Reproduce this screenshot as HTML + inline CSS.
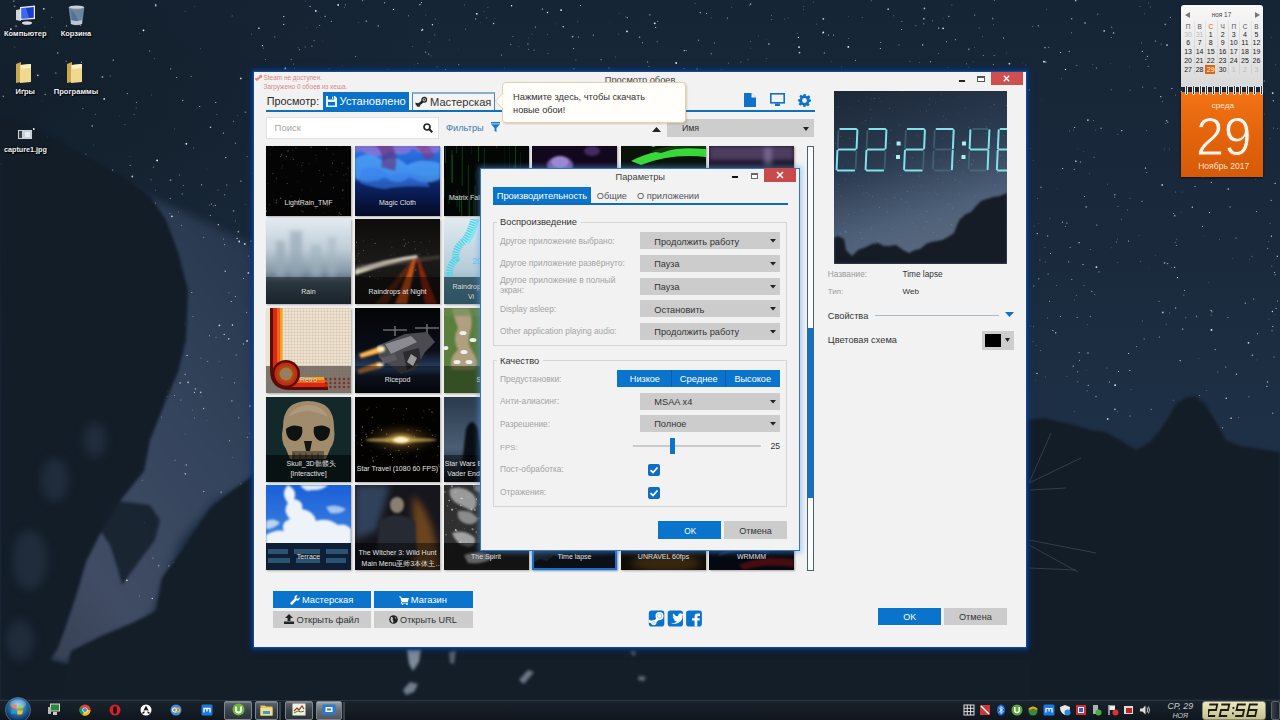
<!DOCTYPE html>
<html><head><meta charset="utf-8">
<style>
*{margin:0;padding:0;box-sizing:border-box}
html,body{width:1280px;height:720px;overflow:hidden}
body{position:relative;background:#18232f;font-family:"Liberation Sans",sans-serif;}
.a{position:absolute}
.t{position:absolute;white-space:nowrap;line-height:1}
.th{position:absolute;overflow:hidden}
.sh{text-shadow:0 0 2px #000,1px 1px 1px #000}
</style></head><body>

<svg class="a" style="left:0;top:0" width="1280" height="720" viewBox="0 0 1280 720">
<defs>
<linearGradient id="sky" x1="0" y1="0" x2="0" y2="1"><stop offset="0" stop-color="#162536"/><stop offset="0.35" stop-color="#1a2a3c"/><stop offset="0.6" stop-color="#1e3046"/><stop offset="1" stop-color="#1e2e42"/></linearGradient>
<linearGradient id="band" x1="0.8" y1="0" x2="0.2" y2="1"><stop offset="0" stop-color="#26364c"/><stop offset="0.45" stop-color="#34445c"/><stop offset="0.85" stop-color="#404c64"/><stop offset="1" stop-color="#3a4458"/></linearGradient>
<filter id="tb" color-interpolation-filters="sRGB" x="-10%" y="-10%" width="120%" height="120%"><feGaussianBlur stdDeviation="4"/></filter>
<filter id="tb2" color-interpolation-filters="sRGB" x="-10%" y="-10%" width="120%" height="120%"><feGaussianBlur stdDeviation="1.5"/></filter>
</defs>
<rect width="1280" height="720" fill="url(#sky)"/>
<defs><radialGradient id="tl" cx="0" cy="0.15" r="0.35"><stop offset="0" stop-color="#0e1820" stop-opacity="0.55"/><stop offset="1" stop-color="#0e1820" stop-opacity="0"/></radialGradient></defs><rect width="1280" height="720" fill="url(#tl)"/>
<path d="M90 170 L200 220 L262 250 L262 480 L215 500 L180 540 L165 580 L150 620 L125 650 L60 662 L40 650 L60 600 L90 520 L130 420 L160 300Z" fill="url(#band)" filter="url(#tb)"/>
<circle cx="414.5" cy="64.9" r="0.4" fill="#fff" fill-opacity="0.40"/><circle cx="685.9" cy="157.2" r="0.4" fill="#fff" fill-opacity="0.94"/><circle cx="274.8" cy="37.0" r="0.7" fill="#fff" fill-opacity="0.40"/><circle cx="116.1" cy="182.5" r="0.9" fill="#fff" fill-opacity="0.43"/><circle cx="285.7" cy="269.8" r="0.4" fill="#fff" fill-opacity="0.73"/><circle cx="507.8" cy="419.8" r="0.4" fill="#fff" fill-opacity="0.71"/><circle cx="170.5" cy="180.2" r="0.9" fill="#fff" fill-opacity="0.43"/><circle cx="394.9" cy="350.9" r="0.5" fill="#fff" fill-opacity="0.42"/><circle cx="731.1" cy="80.8" r="0.4" fill="#fff" fill-opacity="0.71"/><circle cx="80.4" cy="25.6" r="0.5" fill="#fff" fill-opacity="0.67"/><circle cx="680.6" cy="334.2" r="0.7" fill="#fff" fill-opacity="0.73"/><circle cx="580.1" cy="128.9" r="0.5" fill="#fff" fill-opacity="0.80"/><circle cx="312.4" cy="247.0" r="0.9" fill="#fff" fill-opacity="0.67"/><circle cx="439.6" cy="193.0" r="0.9" fill="#fff" fill-opacity="0.99"/><circle cx="151.1" cy="179.8" r="0.6" fill="#fff" fill-opacity="0.45"/><circle cx="625.9" cy="16.9" r="0.4" fill="#fff" fill-opacity="0.85"/><circle cx="733.5" cy="376.5" r="0.6" fill="#fff" fill-opacity="0.57"/><circle cx="448.2" cy="213.6" r="0.7" fill="#fff" fill-opacity="0.39"/><circle cx="119.8" cy="116.1" r="0.4" fill="#fff" fill-opacity="0.39"/><circle cx="897.9" cy="278.3" r="0.7" fill="#fff" fill-opacity="0.53"/><circle cx="493.8" cy="287.5" r="0.4" fill="#fff" fill-opacity="0.96"/><circle cx="455.0" cy="262.7" r="0.7" fill="#fff" fill-opacity="0.39"/><circle cx="983.3" cy="55.6" r="0.5" fill="#fff" fill-opacity="0.61"/><circle cx="1173.5" cy="213.5" r="0.5" fill="#fff" fill-opacity="0.64"/><circle cx="703.3" cy="379.9" r="0.7" fill="#fff" fill-opacity="0.91"/><circle cx="356.4" cy="178.6" r="0.6" fill="#fff" fill-opacity="0.79"/><circle cx="487.0" cy="99.2" r="0.4" fill="#fff" fill-opacity="0.46"/><circle cx="296.9" cy="100.3" r="0.7" fill="#fff" fill-opacity="0.89"/><circle cx="233.4" cy="121.2" r="0.5" fill="#fff" fill-opacity="0.62"/><circle cx="472.6" cy="243.5" r="0.5" fill="#fff" fill-opacity="0.80"/><circle cx="659.8" cy="265.6" r="0.4" fill="#fff" fill-opacity="0.65"/><circle cx="1114.9" cy="409.3" r="0.9" fill="#fff" fill-opacity="0.61"/><circle cx="510.7" cy="44.5" r="0.7" fill="#fff" fill-opacity="0.39"/><circle cx="86.2" cy="89.8" r="0.5" fill="#fff" fill-opacity="0.42"/><circle cx="768.9" cy="44.0" r="0.9" fill="#fff" fill-opacity="0.45"/><circle cx="129.9" cy="156.4" r="0.4" fill="#fff" fill-opacity="0.40"/><circle cx="266.2" cy="161.8" r="0.6" fill="#fff" fill-opacity="0.97"/><circle cx="770.9" cy="203.9" r="0.4" fill="#fff" fill-opacity="0.90"/><circle cx="1271.2" cy="200.4" r="0.7" fill="#fff" fill-opacity="0.55"/><circle cx="184.5" cy="322.4" r="0.6" fill="#fff" fill-opacity="0.66"/><circle cx="885.8" cy="222.0" r="0.5" fill="#fff" fill-opacity="0.97"/><circle cx="676.2" cy="63.0" r="0.9" fill="#fff" fill-opacity="0.94"/><circle cx="970.4" cy="128.2" r="0.4" fill="#fff" fill-opacity="0.80"/><circle cx="334.2" cy="157.7" r="0.5" fill="#fff" fill-opacity="0.58"/><circle cx="285.2" cy="232.9" r="0.9" fill="#fff" fill-opacity="0.56"/><circle cx="285.5" cy="348.9" r="0.5" fill="#fff" fill-opacity="0.87"/><circle cx="1047.5" cy="318.1" r="0.5" fill="#fff" fill-opacity="0.48"/><circle cx="630.8" cy="314.3" r="0.4" fill="#fff" fill-opacity="0.86"/><circle cx="604.5" cy="83.3" r="0.9" fill="#fff" fill-opacity="0.97"/><circle cx="572.5" cy="402.9" r="0.6" fill="#fff" fill-opacity="0.97"/><circle cx="466.7" cy="94.8" r="0.5" fill="#fff" fill-opacity="0.66"/><circle cx="432.3" cy="207.5" r="0.9" fill="#fff" fill-opacity="0.90"/><circle cx="613.7" cy="280.8" r="0.4" fill="#fff" fill-opacity="0.89"/><circle cx="153.5" cy="167.1" r="0.5" fill="#fff" fill-opacity="0.66"/><circle cx="228.5" cy="339.3" r="0.6" fill="#fff" fill-opacity="0.41"/><circle cx="1211.1" cy="310.4" r="0.7" fill="#fff" fill-opacity="0.61"/><circle cx="1211.9" cy="311.7" r="0.5" fill="#fff" fill-opacity="1.00"/><circle cx="35.3" cy="254.0" r="0.7" fill="#fff" fill-opacity="0.87"/><circle cx="187.1" cy="355.4" r="0.7" fill="#fff" fill-opacity="0.78"/><circle cx="448.5" cy="235.9" r="0.5" fill="#fff" fill-opacity="0.36"/><circle cx="1023.2" cy="312.3" r="0.4" fill="#fff" fill-opacity="0.69"/><circle cx="1195.0" cy="186.5" r="0.5" fill="#fff" fill-opacity="0.89"/><circle cx="270.1" cy="108.3" r="0.6" fill="#fff" fill-opacity="0.68"/><circle cx="977.5" cy="140.2" r="0.9" fill="#fff" fill-opacity="0.62"/><circle cx="167.8" cy="391.3" r="0.6" fill="#fff" fill-opacity="0.93"/><circle cx="848.0" cy="350.5" r="0.9" fill="#fff" fill-opacity="0.62"/><circle cx="1174.7" cy="215.7" r="0.9" fill="#fff" fill-opacity="0.45"/><circle cx="653.5" cy="375.3" r="0.5" fill="#fff" fill-opacity="0.75"/><circle cx="993.3" cy="64.4" r="0.5" fill="#fff" fill-opacity="0.66"/><circle cx="928.2" cy="239.3" r="0.6" fill="#fff" fill-opacity="0.79"/><circle cx="679.3" cy="207.5" r="0.4" fill="#fff" fill-opacity="0.92"/><circle cx="72.7" cy="82.3" r="0.4" fill="#fff" fill-opacity="0.85"/><circle cx="649.9" cy="241.5" r="0.4" fill="#fff" fill-opacity="0.64"/><circle cx="784.0" cy="217.4" r="0.9" fill="#fff" fill-opacity="0.48"/><circle cx="354.8" cy="218.5" r="0.7" fill="#fff" fill-opacity="0.68"/><circle cx="317.0" cy="225.0" r="0.6" fill="#fff" fill-opacity="0.95"/><circle cx="1142.7" cy="87.1" r="0.7" fill="#fff" fill-opacity="0.44"/><circle cx="155.7" cy="190.1" r="0.4" fill="#fff" fill-opacity="0.79"/><circle cx="548.3" cy="91.5" r="0.6" fill="#fff" fill-opacity="0.86"/><circle cx="1148.2" cy="66.4" r="0.6" fill="#fff" fill-opacity="0.44"/><circle cx="1130.0" cy="416.0" r="0.5" fill="#fff" fill-opacity="0.84"/><circle cx="120.5" cy="380.5" r="0.5" fill="#fff" fill-opacity="0.99"/><circle cx="1065.5" cy="69.4" r="0.7" fill="#fff" fill-opacity="1.00"/><circle cx="516.9" cy="181.1" r="0.6" fill="#fff" fill-opacity="0.56"/><circle cx="924.4" cy="8.4" r="0.9" fill="#fff" fill-opacity="0.65"/><circle cx="900.0" cy="165.3" r="0.9" fill="#fff" fill-opacity="0.76"/><circle cx="655.7" cy="27.6" r="0.5" fill="#fff" fill-opacity="0.98"/><circle cx="134.1" cy="114.2" r="0.4" fill="#fff" fill-opacity="0.94"/><circle cx="232.4" cy="325.0" r="0.7" fill="#fff" fill-opacity="0.90"/><circle cx="865.2" cy="406.8" r="0.7" fill="#fff" fill-opacity="0.45"/><circle cx="1176.5" cy="245.4" r="0.6" fill="#fff" fill-opacity="0.41"/><circle cx="73.6" cy="295.9" r="0.7" fill="#fff" fill-opacity="0.93"/><circle cx="344.2" cy="7.2" r="0.4" fill="#fff" fill-opacity="0.87"/><circle cx="107.2" cy="368.2" r="0.4" fill="#fff" fill-opacity="0.52"/><circle cx="155.7" cy="5.0" r="0.9" fill="#fff" fill-opacity="0.62"/><circle cx="1171.7" cy="267.3" r="0.4" fill="#fff" fill-opacity="0.69"/><circle cx="305.2" cy="47.1" r="0.5" fill="#fff" fill-opacity="0.52"/><circle cx="231.9" cy="400.9" r="0.6" fill="#fff" fill-opacity="0.70"/><circle cx="263.5" cy="191.6" r="0.5" fill="#fff" fill-opacity="0.53"/><circle cx="1028.7" cy="427.6" r="0.4" fill="#fff" fill-opacity="0.36"/><circle cx="938.3" cy="237.0" r="0.5" fill="#fff" fill-opacity="0.68"/><circle cx="314.5" cy="192.2" r="0.7" fill="#fff" fill-opacity="0.78"/><circle cx="698.8" cy="382.2" r="0.9" fill="#fff" fill-opacity="0.55"/><circle cx="275.4" cy="98.7" r="0.5" fill="#fff" fill-opacity="0.89"/><circle cx="904.6" cy="273.5" r="0.7" fill="#fff" fill-opacity="0.99"/><circle cx="1256.8" cy="359.9" r="0.4" fill="#fff" fill-opacity="0.40"/><circle cx="948.3" cy="109.9" r="0.5" fill="#fff" fill-opacity="0.39"/><circle cx="851.5" cy="163.8" r="0.9" fill="#fff" fill-opacity="0.79"/><circle cx="360.9" cy="104.2" r="0.6" fill="#fff" fill-opacity="0.38"/><circle cx="237.3" cy="115.7" r="0.4" fill="#fff" fill-opacity="0.52"/><circle cx="1231.1" cy="418.2" r="0.9" fill="#fff" fill-opacity="0.56"/><circle cx="44.1" cy="379.4" r="0.5" fill="#fff" fill-opacity="0.58"/><circle cx="1.4" cy="164.1" r="0.7" fill="#fff" fill-opacity="0.53"/><circle cx="839.7" cy="106.7" r="0.4" fill="#fff" fill-opacity="0.41"/><circle cx="1045.8" cy="61.9" r="0.9" fill="#fff" fill-opacity="0.38"/><circle cx="28.8" cy="130.8" r="0.5" fill="#fff" fill-opacity="0.40"/><circle cx="1225.8" cy="366.9" r="0.5" fill="#fff" fill-opacity="0.78"/><circle cx="916.5" cy="378.0" r="0.7" fill="#fff" fill-opacity="0.85"/><circle cx="922.5" cy="212.5" r="0.6" fill="#fff" fill-opacity="0.82"/><circle cx="823.3" cy="18.8" r="0.9" fill="#fff" fill-opacity="0.76"/><circle cx="939.3" cy="349.3" r="0.5" fill="#fff" fill-opacity="0.94"/><circle cx="963.7" cy="244.4" r="0.4" fill="#fff" fill-opacity="0.89"/><circle cx="747.6" cy="383.9" r="0.5" fill="#fff" fill-opacity="0.41"/><circle cx="53.6" cy="274.0" r="0.4" fill="#fff" fill-opacity="0.59"/><circle cx="577.8" cy="21.8" r="0.4" fill="#fff" fill-opacity="0.76"/><circle cx="871.3" cy="210.4" r="0.4" fill="#fff" fill-opacity="0.65"/><circle cx="89.7" cy="401.0" r="0.9" fill="#fff" fill-opacity="0.41"/><circle cx="673.3" cy="320.7" r="0.7" fill="#fff" fill-opacity="0.51"/><circle cx="95.3" cy="114.2" r="0.5" fill="#fff" fill-opacity="0.50"/><circle cx="831.9" cy="197.9" r="0.7" fill="#fff" fill-opacity="0.40"/><circle cx="1165.4" cy="123.5" r="0.4" fill="#fff" fill-opacity="0.75"/><circle cx="822.7" cy="33.3" r="0.5" fill="#fff" fill-opacity="0.57"/><circle cx="834.0" cy="297.9" r="0.9" fill="#fff" fill-opacity="0.72"/><circle cx="16.0" cy="26.1" r="0.6" fill="#fff" fill-opacity="0.98"/><circle cx="127.4" cy="93.6" r="0.7" fill="#fff" fill-opacity="0.54"/><circle cx="661.2" cy="199.8" r="0.7" fill="#fff" fill-opacity="0.85"/><circle cx="1271.4" cy="236.1" r="0.6" fill="#fff" fill-opacity="0.99"/><circle cx="1198.4" cy="7.5" r="0.7" fill="#fff" fill-opacity="0.40"/><circle cx="648.5" cy="427.7" r="0.6" fill="#fff" fill-opacity="0.60"/><circle cx="1173.2" cy="400.1" r="0.4" fill="#fff" fill-opacity="0.73"/><circle cx="181.4" cy="225.3" r="0.6" fill="#fff" fill-opacity="0.44"/><circle cx="1049.9" cy="218.8" r="0.4" fill="#fff" fill-opacity="0.81"/><circle cx="296.2" cy="386.0" r="0.7" fill="#fff" fill-opacity="0.61"/><circle cx="203.6" cy="408.5" r="0.7" fill="#fff" fill-opacity="0.61"/><circle cx="930.8" cy="179.0" r="0.7" fill="#fff" fill-opacity="0.56"/><circle cx="1075.5" cy="0.7" r="0.6" fill="#fff" fill-opacity="0.90"/><circle cx="153.7" cy="398.4" r="0.4" fill="#fff" fill-opacity="0.94"/><circle cx="371.0" cy="160.1" r="0.7" fill="#fff" fill-opacity="0.60"/><circle cx="1113.6" cy="32.9" r="0.7" fill="#fff" fill-opacity="0.84"/><circle cx="1093.4" cy="120.7" r="0.4" fill="#fff" fill-opacity="0.89"/><circle cx="365.6" cy="402.3" r="0.5" fill="#fff" fill-opacity="0.98"/><circle cx="558.4" cy="135.7" r="0.6" fill="#fff" fill-opacity="0.86"/><circle cx="547.5" cy="12.5" r="0.7" fill="#fff" fill-opacity="0.94"/><circle cx="1204.1" cy="236.2" r="0.4" fill="#fff" fill-opacity="0.38"/><circle cx="937.4" cy="193.9" r="0.5" fill="#fff" fill-opacity="0.77"/><circle cx="366.3" cy="21.1" r="0.9" fill="#fff" fill-opacity="0.43"/><circle cx="604.4" cy="147.8" r="0.6" fill="#fff" fill-opacity="0.52"/><circle cx="945.6" cy="280.7" r="0.7" fill="#fff" fill-opacity="0.78"/><circle cx="385.1" cy="239.6" r="0.7" fill="#fff" fill-opacity="0.43"/><circle cx="823.3" cy="32.3" r="0.9" fill="#fff" fill-opacity="0.94"/><circle cx="636.3" cy="94.6" r="0.6" fill="#fff" fill-opacity="1.00"/><circle cx="575.9" cy="60.0" r="0.5" fill="#fff" fill-opacity="0.51"/><circle cx="223.6" cy="239.0" r="0.6" fill="#fff" fill-opacity="0.51"/><circle cx="330.7" cy="244.9" r="0.4" fill="#fff" fill-opacity="0.84"/><circle cx="528.4" cy="178.0" r="0.9" fill="#fff" fill-opacity="0.49"/><circle cx="345.9" cy="323.4" r="0.7" fill="#fff" fill-opacity="0.53"/><circle cx="1238.6" cy="54.1" r="0.9" fill="#fff" fill-opacity="0.69"/><circle cx="1011.6" cy="364.9" r="0.4" fill="#fff" fill-opacity="0.53"/><circle cx="318.0" cy="171.9" r="0.7" fill="#fff" fill-opacity="0.63"/><circle cx="399.4" cy="350.2" r="0.4" fill="#fff" fill-opacity="0.43"/><circle cx="544.3" cy="328.4" r="0.7" fill="#fff" fill-opacity="0.98"/><circle cx="627.0" cy="31.4" r="0.9" fill="#fff" fill-opacity="0.91"/><circle cx="1244.5" cy="106.8" r="0.4" fill="#fff" fill-opacity="0.50"/><circle cx="194.6" cy="417.9" r="0.4" fill="#fff" fill-opacity="0.96"/><circle cx="923.8" cy="278.4" r="0.7" fill="#fff" fill-opacity="0.41"/><circle cx="994.4" cy="0.6" r="0.5" fill="#fff" fill-opacity="0.50"/><circle cx="1177.5" cy="277.6" r="0.6" fill="#fff" fill-opacity="0.98"/><circle cx="801.9" cy="227.1" r="0.7" fill="#fff" fill-opacity="0.80"/><circle cx="143.5" cy="30.3" r="0.9" fill="#fff" fill-opacity="0.96"/><circle cx="245.4" cy="112.2" r="0.9" fill="#fff" fill-opacity="0.35"/><circle cx="688.0" cy="428.4" r="0.6" fill="#fff" fill-opacity="0.97"/><circle cx="825.1" cy="380.0" r="0.7" fill="#fff" fill-opacity="0.69"/><circle cx="700.2" cy="12.6" r="0.7" fill="#fff" fill-opacity="0.81"/><circle cx="393.5" cy="9.4" r="0.7" fill="#fff" fill-opacity="0.93"/><circle cx="828.4" cy="34.9" r="0.5" fill="#fff" fill-opacity="0.78"/><circle cx="1184.2" cy="97.5" r="0.4" fill="#fff" fill-opacity="0.80"/><circle cx="919.5" cy="155.8" r="0.7" fill="#fff" fill-opacity="0.48"/><circle cx="1020.2" cy="317.8" r="0.9" fill="#fff" fill-opacity="0.39"/><circle cx="634.5" cy="86.2" r="0.5" fill="#fff" fill-opacity="0.50"/><circle cx="283.4" cy="327.0" r="0.6" fill="#fff" fill-opacity="0.42"/><circle cx="798.2" cy="262.3" r="0.5" fill="#fff" fill-opacity="0.67"/><circle cx="1165.3" cy="24.3" r="0.9" fill="#fff" fill-opacity="0.45"/><circle cx="503.6" cy="91.6" r="0.9" fill="#fff" fill-opacity="0.44"/><circle cx="66.4" cy="25.9" r="0.7" fill="#fff" fill-opacity="0.64"/><circle cx="911.4" cy="135.1" r="0.4" fill="#fff" fill-opacity="1.00"/><circle cx="1192.4" cy="141.6" r="0.5" fill="#fff" fill-opacity="0.77"/><circle cx="671.7" cy="201.1" r="0.6" fill="#fff" fill-opacity="0.78"/><circle cx="484.6" cy="160.8" r="0.6" fill="#fff" fill-opacity="0.64"/><circle cx="139.5" cy="33.6" r="0.4" fill="#fff" fill-opacity="0.58"/><circle cx="1223.1" cy="53.2" r="0.5" fill="#fff" fill-opacity="0.60"/><circle cx="984.0" cy="132.7" r="0.7" fill="#fff" fill-opacity="0.41"/><circle cx="902.7" cy="84.2" r="0.9" fill="#fff" fill-opacity="0.95"/><circle cx="247.1" cy="156.6" r="0.7" fill="#fff" fill-opacity="0.37"/><circle cx="525.8" cy="349.1" r="0.7" fill="#fff" fill-opacity="0.38"/><circle cx="44.6" cy="26.9" r="0.4" fill="#fff" fill-opacity="0.52"/><circle cx="956.5" cy="386.4" r="0.6" fill="#fff" fill-opacity="0.59"/><circle cx="428.8" cy="410.1" r="0.4" fill="#fff" fill-opacity="0.52"/><circle cx="917.3" cy="136.1" r="0.6" fill="#fff" fill-opacity="0.54"/><circle cx="923.6" cy="256.1" r="0.4" fill="#fff" fill-opacity="0.37"/><circle cx="299.3" cy="204.3" r="0.7" fill="#fff" fill-opacity="0.97"/><circle cx="494.7" cy="108.0" r="0.7" fill="#fff" fill-opacity="0.88"/><circle cx="169.9" cy="213.5" r="0.4" fill="#fff" fill-opacity="0.87"/><circle cx="945.3" cy="353.8" r="0.5" fill="#fff" fill-opacity="0.74"/><circle cx="419.6" cy="137.4" r="0.6" fill="#fff" fill-opacity="0.86"/><circle cx="762.5" cy="220.1" r="0.7" fill="#fff" fill-opacity="0.84"/><circle cx="316.6" cy="27.8" r="0.4" fill="#fff" fill-opacity="0.66"/><circle cx="697.1" cy="69.1" r="0.7" fill="#fff" fill-opacity="0.92"/><circle cx="1264.4" cy="113.9" r="0.4" fill="#fff" fill-opacity="0.49"/><circle cx="539.0" cy="425.0" r="0.7" fill="#fff" fill-opacity="0.46"/><circle cx="170.2" cy="198.2" r="0.5" fill="#fff" fill-opacity="0.84"/><circle cx="1084.1" cy="285.7" r="0.4" fill="#fff" fill-opacity="0.86"/><circle cx="376.2" cy="120.1" r="0.6" fill="#fff" fill-opacity="0.59"/><circle cx="944.7" cy="85.7" r="0.5" fill="#fff" fill-opacity="0.47"/><circle cx="301.4" cy="121.0" r="0.9" fill="#fff" fill-opacity="0.47"/><circle cx="82.9" cy="108.2" r="0.5" fill="#fff" fill-opacity="0.68"/><circle cx="296.2" cy="347.6" r="0.7" fill="#fff" fill-opacity="0.99"/><circle cx="131.0" cy="204.1" r="0.5" fill="#fff" fill-opacity="0.90"/><circle cx="1170.4" cy="17.4" r="0.6" fill="#fff" fill-opacity="0.50"/><circle cx="64.5" cy="258.2" r="0.9" fill="#fff" fill-opacity="0.48"/><circle cx="96.1" cy="220.4" r="0.5" fill="#fff" fill-opacity="0.64"/><circle cx="332.7" cy="334.4" r="0.4" fill="#fff" fill-opacity="0.42"/><circle cx="763.1" cy="266.6" r="0.5" fill="#fff" fill-opacity="0.37"/><circle cx="435.2" cy="19.0" r="0.6" fill="#fff" fill-opacity="0.37"/><circle cx="937.3" cy="393.0" r="0.4" fill="#fff" fill-opacity="0.88"/><circle cx="523.5" cy="159.9" r="0.9" fill="#fff" fill-opacity="0.55"/><circle cx="260.4" cy="342.0" r="0.9" fill="#fff" fill-opacity="0.66"/><circle cx="522.5" cy="342.2" r="0.9" fill="#fff" fill-opacity="0.45"/><circle cx="683.5" cy="280.8" r="0.7" fill="#fff" fill-opacity="0.80"/><circle cx="524.5" cy="121.8" r="0.6" fill="#fff" fill-opacity="0.62"/><circle cx="65.7" cy="320.5" r="0.6" fill="#fff" fill-opacity="0.62"/><circle cx="23.3" cy="329.7" r="0.6" fill="#fff" fill-opacity="0.77"/><circle cx="500.1" cy="174.1" r="0.4" fill="#fff" fill-opacity="0.63"/><circle cx="200.4" cy="48.8" r="0.4" fill="#fff" fill-opacity="0.61"/><circle cx="1130.0" cy="198.2" r="0.5" fill="#fff" fill-opacity="0.43"/><circle cx="66.2" cy="61.3" r="0.7" fill="#fff" fill-opacity="0.41"/><circle cx="796.4" cy="159.5" r="0.9" fill="#fff" fill-opacity="0.46"/><circle cx="445.4" cy="69.6" r="0.5" fill="#fff" fill-opacity="0.95"/><circle cx="139.3" cy="210.9" r="0.5" fill="#fff" fill-opacity="0.55"/><circle cx="1071.7" cy="18.7" r="0.7" fill="#fff" fill-opacity="0.55"/><circle cx="777.8" cy="273.6" r="0.4" fill="#fff" fill-opacity="0.94"/><circle cx="794.0" cy="354.6" r="0.5" fill="#fff" fill-opacity="0.77"/><circle cx="1096.4" cy="267.1" r="0.9" fill="#fff" fill-opacity="0.90"/><circle cx="1061.4" cy="78.7" r="0.5" fill="#fff" fill-opacity="0.38"/><circle cx="1201.3" cy="67.3" r="0.6" fill="#fff" fill-opacity="0.43"/><circle cx="316.2" cy="311.7" r="0.5" fill="#fff" fill-opacity="0.38"/><circle cx="719.8" cy="325.7" r="0.4" fill="#fff" fill-opacity="0.78"/><circle cx="415.0" cy="167.6" r="0.7" fill="#fff" fill-opacity="0.71"/><circle cx="802.6" cy="131.7" r="0.7" fill="#fff" fill-opacity="0.55"/><circle cx="319.1" cy="167.4" r="0.6" fill="#fff" fill-opacity="0.64"/><circle cx="561.1" cy="10.1" r="0.9" fill="#fff" fill-opacity="0.99"/><circle cx="595.5" cy="192.1" r="0.9" fill="#fff" fill-opacity="0.86"/><circle cx="586.6" cy="77.2" r="0.7" fill="#fff" fill-opacity="0.61"/><circle cx="85.9" cy="154.2" r="0.6" fill="#fff" fill-opacity="0.41"/><circle cx="565.7" cy="219.4" r="0.4" fill="#fff" fill-opacity="0.38"/><circle cx="166.7" cy="396.5" r="0.6" fill="#fff" fill-opacity="0.86"/><circle cx="654.7" cy="23.3" r="0.9" fill="#fff" fill-opacity="0.93"/><circle cx="835.5" cy="337.2" r="0.4" fill="#fff" fill-opacity="0.91"/><circle cx="1275.0" cy="314.8" r="0.4" fill="#fff" fill-opacity="0.48"/><circle cx="1256.6" cy="211.5" r="0.5" fill="#fff" fill-opacity="0.80"/><circle cx="923.0" cy="95.1" r="0.6" fill="#fff" fill-opacity="0.75"/><circle cx="322.8" cy="139.3" r="0.9" fill="#fff" fill-opacity="0.53"/><circle cx="1044.0" cy="61.7" r="0.9" fill="#fff" fill-opacity="0.98"/><circle cx="614.5" cy="254.5" r="0.9" fill="#fff" fill-opacity="0.68"/><circle cx="408.4" cy="15.8" r="0.5" fill="#fff" fill-opacity="0.61"/><circle cx="814.8" cy="119.6" r="0.6" fill="#fff" fill-opacity="0.93"/><circle cx="216.0" cy="337.5" r="0.4" fill="#fff" fill-opacity="0.85"/><circle cx="62.2" cy="369.1" r="0.7" fill="#fff" fill-opacity="0.71"/><circle cx="742.5" cy="379.5" r="0.4" fill="#fff" fill-opacity="0.51"/><circle cx="685.7" cy="368.3" r="0.6" fill="#fff" fill-opacity="0.52"/><circle cx="1267.8" cy="248.3" r="0.6" fill="#fff" fill-opacity="0.57"/><circle cx="104.2" cy="98.9" r="0.9" fill="#fff" fill-opacity="0.83"/><circle cx="61.8" cy="352.5" r="0.6" fill="#fff" fill-opacity="0.55"/><circle cx="1236.4" cy="374.2" r="0.6" fill="#fff" fill-opacity="0.83"/><circle cx="956.3" cy="95.3" r="0.6" fill="#fff" fill-opacity="0.75"/><circle cx="553.3" cy="220.5" r="0.4" fill="#fff" fill-opacity="0.44"/><circle cx="290.9" cy="280.8" r="0.4" fill="#fff" fill-opacity="0.39"/><circle cx="725.9" cy="130.6" r="0.9" fill="#fff" fill-opacity="0.58"/><circle cx="287.1" cy="250.9" r="0.9" fill="#fff" fill-opacity="0.44"/><circle cx="468.8" cy="356.2" r="0.5" fill="#fff" fill-opacity="0.44"/><circle cx="1198.8" cy="104.7" r="0.5" fill="#fff" fill-opacity="0.64"/><circle cx="81.5" cy="62.2" r="0.6" fill="#fff" fill-opacity="0.61"/><circle cx="338.2" cy="4.9" r="0.9" fill="#fff" fill-opacity="0.93"/><circle cx="761.2" cy="248.7" r="0.9" fill="#fff" fill-opacity="0.96"/><circle cx="938.9" cy="106.9" r="0.4" fill="#fff" fill-opacity="0.38"/><circle cx="680.4" cy="174.6" r="0.5" fill="#fff" fill-opacity="0.45"/><circle cx="1167.0" cy="45.1" r="0.9" fill="#fff" fill-opacity="0.71"/><circle cx="1204.4" cy="61.2" r="0.5" fill="#fff" fill-opacity="0.69"/><circle cx="822.6" cy="278.5" r="0.7" fill="#fff" fill-opacity="0.88"/><circle cx="223.5" cy="133.0" r="0.6" fill="#fff" fill-opacity="0.76"/><circle cx="1272.4" cy="311.5" r="0.7" fill="#fff" fill-opacity="0.82"/><circle cx="8.1" cy="363.1" r="0.7" fill="#fff" fill-opacity="0.40"/><circle cx="839.1" cy="75.4" r="0.4" fill="#fff" fill-opacity="0.52"/><circle cx="824.3" cy="53.0" r="0.6" fill="#fff" fill-opacity="0.81"/><circle cx="340.5" cy="238.1" r="0.7" fill="#fff" fill-opacity="0.80"/><circle cx="1174.1" cy="417.9" r="0.6" fill="#fff" fill-opacity="0.77"/><circle cx="1235.4" cy="93.3" r="0.9" fill="#fff" fill-opacity="0.36"/><circle cx="333.3" cy="101.5" r="0.5" fill="#fff" fill-opacity="0.96"/><circle cx="955.1" cy="140.6" r="0.7" fill="#fff" fill-opacity="0.56"/><circle cx="306.1" cy="390.3" r="0.9" fill="#fff" fill-opacity="0.66"/><circle cx="1074.8" cy="300.0" r="0.4" fill="#fff" fill-opacity="0.63"/><circle cx="927.5" cy="245.2" r="0.6" fill="#fff" fill-opacity="0.86"/><circle cx="501.2" cy="251.7" r="0.9" fill="#fff" fill-opacity="0.94"/><circle cx="185.1" cy="11.6" r="0.4" fill="#fff" fill-opacity="0.75"/><circle cx="207.1" cy="420.3" r="0.4" fill="#fff" fill-opacity="0.37"/><circle cx="177.2" cy="276.7" r="0.4" fill="#fff" fill-opacity="0.80"/><circle cx="943.1" cy="28.3" r="0.9" fill="#fff" fill-opacity="0.85"/><circle cx="255.1" cy="410.5" r="0.9" fill="#fff" fill-opacity="0.93"/><circle cx="84.4" cy="373.2" r="0.7" fill="#fff" fill-opacity="0.42"/><circle cx="263.3" cy="48.1" r="0.4" fill="#fff" fill-opacity="0.97"/><circle cx="1166.2" cy="324.1" r="0.4" fill="#fff" fill-opacity="0.89"/><circle cx="808.4" cy="123.6" r="0.4" fill="#fff" fill-opacity="0.44"/><circle cx="1013.7" cy="277.9" r="0.6" fill="#fff" fill-opacity="0.56"/><circle cx="542.4" cy="9.0" r="0.6" fill="#fff" fill-opacity="0.95"/><circle cx="62.0" cy="326.7" r="0.6" fill="#fff" fill-opacity="0.85"/><circle cx="770.6" cy="204.7" r="0.6" fill="#fff" fill-opacity="0.75"/><circle cx="39.7" cy="177.6" r="0.7" fill="#fff" fill-opacity="0.69"/><circle cx="125.8" cy="201.6" r="0.4" fill="#fff" fill-opacity="0.70"/><circle cx="277.2" cy="370.8" r="0.4" fill="#fff" fill-opacity="0.72"/><circle cx="367.5" cy="187.5" r="0.9" fill="#fff" fill-opacity="0.48"/><circle cx="975.6" cy="420.5" r="0.4" fill="#fff" fill-opacity="0.58"/><circle cx="122.5" cy="298.9" r="0.5" fill="#fff" fill-opacity="0.98"/><circle cx="758.5" cy="411.6" r="0.9" fill="#fff" fill-opacity="0.52"/><circle cx="1208.2" cy="122.0" r="0.5" fill="#fff" fill-opacity="0.96"/><circle cx="296.4" cy="71.3" r="0.4" fill="#fff" fill-opacity="0.67"/><circle cx="1268.6" cy="241.3" r="0.4" fill="#fff" fill-opacity="0.76"/><circle cx="455.2" cy="172.5" r="0.7" fill="#fff" fill-opacity="0.93"/><circle cx="953.9" cy="181.5" r="0.4" fill="#fff" fill-opacity="0.59"/><circle cx="388.0" cy="184.1" r="0.9" fill="#fff" fill-opacity="0.68"/><circle cx="485.5" cy="380.1" r="0.5" fill="#fff" fill-opacity="0.96"/><circle cx="162.4" cy="255.5" r="0.9" fill="#fff" fill-opacity="0.77"/><circle cx="446.1" cy="140.5" r="0.5" fill="#fff" fill-opacity="0.91"/><circle cx="576.4" cy="238.1" r="0.6" fill="#fff" fill-opacity="0.46"/><circle cx="561.7" cy="332.6" r="0.9" fill="#fff" fill-opacity="0.50"/><circle cx="427.6" cy="276.4" r="0.5" fill="#fff" fill-opacity="0.68"/><circle cx="342.4" cy="324.5" r="0.9" fill="#fff" fill-opacity="0.45"/><circle cx="199.7" cy="106.5" r="0.6" fill="#fff" fill-opacity="0.74"/><circle cx="446.2" cy="101.6" r="0.5" fill="#fff" fill-opacity="0.52"/><circle cx="1222.4" cy="427.8" r="0.5" fill="#fff" fill-opacity="0.98"/><circle cx="130.1" cy="165.2" r="0.5" fill="#fff" fill-opacity="0.87"/><circle cx="938.6" cy="187.0" r="0.5" fill="#fff" fill-opacity="0.42"/><circle cx="1166.6" cy="120.7" r="0.7" fill="#fff" fill-opacity="0.65"/><circle cx="16.2" cy="367.4" r="0.7" fill="#fff" fill-opacity="0.80"/><circle cx="640.6" cy="271.9" r="0.7" fill="#fff" fill-opacity="0.36"/><circle cx="329.2" cy="317.4" r="0.4" fill="#fff" fill-opacity="0.83"/><circle cx="1162.2" cy="184.9" r="0.9" fill="#fff" fill-opacity="0.73"/><circle cx="828.4" cy="363.8" r="0.9" fill="#fff" fill-opacity="0.90"/><circle cx="869.9" cy="275.9" r="0.7" fill="#fff" fill-opacity="0.63"/><circle cx="332.6" cy="301.3" r="0.7" fill="#fff" fill-opacity="0.51"/><circle cx="512.2" cy="306.4" r="0.5" fill="#fff" fill-opacity="0.51"/><circle cx="542.2" cy="195.7" r="0.9" fill="#fff" fill-opacity="0.91"/><circle cx="663.4" cy="284.3" r="0.5" fill="#fff" fill-opacity="0.93"/><circle cx="419.9" cy="4.6" r="0.7" fill="#fff" fill-opacity="0.94"/><circle cx="136.2" cy="108.0" r="0.5" fill="#fff" fill-opacity="0.45"/><circle cx="1000.7" cy="404.5" r="0.9" fill="#fff" fill-opacity="0.58"/><circle cx="1084.4" cy="196.4" r="0.5" fill="#fff" fill-opacity="0.82"/><circle cx="655.6" cy="274.9" r="0.6" fill="#fff" fill-opacity="0.69"/><circle cx="525.2" cy="407.6" r="0.5" fill="#fff" fill-opacity="0.99"/><circle cx="235.3" cy="220.9" r="0.4" fill="#fff" fill-opacity="0.82"/><circle cx="785.9" cy="274.2" r="0.6" fill="#fff" fill-opacity="0.53"/><circle cx="511.6" cy="5.7" r="0.7" fill="#fff" fill-opacity="0.95"/><circle cx="804.6" cy="290.2" r="0.9" fill="#fff" fill-opacity="0.52"/><circle cx="287.3" cy="318.8" r="0.9" fill="#fff" fill-opacity="0.98"/><circle cx="1272.6" cy="413.2" r="0.7" fill="#fff" fill-opacity="0.49"/><circle cx="165.5" cy="333.9" r="0.5" fill="#fff" fill-opacity="0.65"/><circle cx="719.4" cy="97.2" r="0.5" fill="#fff" fill-opacity="0.58"/><circle cx="817.7" cy="352.1" r="0.7" fill="#fff" fill-opacity="0.65"/><circle cx="376.8" cy="235.8" r="0.5" fill="#fff" fill-opacity="0.86"/><circle cx="600.8" cy="336.9" r="0.5" fill="#fff" fill-opacity="0.52"/><circle cx="481.5" cy="109.0" r="0.7" fill="#fff" fill-opacity="0.79"/><circle cx="616.4" cy="346.3" r="0.6" fill="#fff" fill-opacity="0.58"/><circle cx="837.6" cy="137.7" r="0.7" fill="#fff" fill-opacity="0.63"/><circle cx="815.7" cy="283.5" r="0.6" fill="#fff" fill-opacity="0.45"/><circle cx="388.1" cy="165.6" r="0.4" fill="#fff" fill-opacity="0.89"/><circle cx="1159.4" cy="337.1" r="0.5" fill="#fff" fill-opacity="0.69"/><circle cx="441.8" cy="250.5" r="0.4" fill="#fff" fill-opacity="0.49"/><circle cx="92.2" cy="126.0" r="0.9" fill="#fff" fill-opacity="0.42"/><circle cx="182.7" cy="100.5" r="0.7" fill="#fff" fill-opacity="0.58"/><circle cx="195.4" cy="388.8" r="0.9" fill="#fff" fill-opacity="0.46"/><circle cx="1140.7" cy="261.6" r="0.4" fill="#fff" fill-opacity="0.78"/><circle cx="1144.2" cy="338.9" r="0.6" fill="#fff" fill-opacity="0.48"/><circle cx="886.8" cy="228.2" r="0.7" fill="#fff" fill-opacity="0.79"/><circle cx="149.7" cy="50.9" r="0.7" fill="#fff" fill-opacity="0.50"/><circle cx="178.4" cy="212.0" r="0.4" fill="#fff" fill-opacity="0.66"/><circle cx="1159.0" cy="301.2" r="0.5" fill="#fff" fill-opacity="0.67"/><circle cx="690.6" cy="371.0" r="0.4" fill="#fff" fill-opacity="0.45"/><circle cx="410.5" cy="299.2" r="0.7" fill="#fff" fill-opacity="0.78"/><circle cx="1075.9" cy="161.2" r="0.7" fill="#fff" fill-opacity="1.00"/><circle cx="865.2" cy="77.6" r="0.6" fill="#fff" fill-opacity="0.76"/><circle cx="36.5" cy="262.2" r="0.6" fill="#fff" fill-opacity="0.88"/><circle cx="120.3" cy="208.2" r="0.5" fill="#fff" fill-opacity="0.37"/><circle cx="919.3" cy="268.9" r="0.6" fill="#fff" fill-opacity="0.41"/><circle cx="843.6" cy="146.8" r="0.9" fill="#fff" fill-opacity="0.71"/><circle cx="1167.8" cy="122.2" r="0.6" fill="#fff" fill-opacity="0.62"/><circle cx="709.2" cy="355.5" r="0.6" fill="#fff" fill-opacity="0.58"/><circle cx="632.0" cy="143.5" r="0.6" fill="#fff" fill-opacity="0.92"/><circle cx="441.4" cy="87.5" r="0.7" fill="#fff" fill-opacity="0.86"/><circle cx="423.5" cy="136.4" r="0.6" fill="#fff" fill-opacity="0.43"/><circle cx="1245.1" cy="37.7" r="0.4" fill="#fff" fill-opacity="0.61"/><circle cx="709.5" cy="174.6" r="0.9" fill="#fff" fill-opacity="0.38"/><circle cx="384.5" cy="2.7" r="0.5" fill="#fff" fill-opacity="0.88"/><circle cx="608.1" cy="329.4" r="0.4" fill="#fff" fill-opacity="0.86"/><circle cx="1164.6" cy="263.0" r="0.9" fill="#fff" fill-opacity="0.45"/><circle cx="862.3" cy="296.3" r="0.4" fill="#fff" fill-opacity="0.49"/><circle cx="853.8" cy="196.9" r="0.5" fill="#fff" fill-opacity="0.42"/><circle cx="232.1" cy="15.9" r="0.4" fill="#fff" fill-opacity="0.94"/><circle cx="839.3" cy="158.6" r="0.5" fill="#fff" fill-opacity="0.86"/><circle cx="719.5" cy="110.9" r="0.6" fill="#fff" fill-opacity="0.47"/><circle cx="43.8" cy="8.8" r="0.9" fill="#fff" fill-opacity="0.77"/><circle cx="1195.3" cy="23.5" r="0.9" fill="#fff" fill-opacity="0.69"/><circle cx="1055.7" cy="332.7" r="0.7" fill="#fff" fill-opacity="0.72"/><circle cx="1175.8" cy="192.0" r="0.4" fill="#fff" fill-opacity="0.79"/><circle cx="760.1" cy="427.0" r="0.5" fill="#fff" fill-opacity="0.66"/><circle cx="527.9" cy="43.9" r="0.7" fill="#fff" fill-opacity="0.49"/><circle cx="194.3" cy="6.7" r="0.4" fill="#fff" fill-opacity="0.36"/><circle cx="856.8" cy="424.3" r="0.4" fill="#fff" fill-opacity="0.49"/><circle cx="155.3" cy="203.1" r="0.6" fill="#fff" fill-opacity="0.82"/><circle cx="310.1" cy="315.4" r="0.5" fill="#fff" fill-opacity="0.95"/><circle cx="468.3" cy="321.3" r="0.5" fill="#fff" fill-opacity="0.82"/><circle cx="107.9" cy="270.3" r="0.7" fill="#fff" fill-opacity="0.65"/><circle cx="1193.4" cy="109.2" r="0.4" fill="#fff" fill-opacity="0.82"/><circle cx="14.6" cy="6.3" r="0.9" fill="#fff" fill-opacity="0.40"/><circle cx="398.2" cy="313.7" r="0.5" fill="#fff" fill-opacity="0.97"/><circle cx="1068.7" cy="261.8" r="0.6" fill="#fff" fill-opacity="0.59"/><circle cx="736.0" cy="188.7" r="0.5" fill="#fff" fill-opacity="0.44"/><circle cx="1020.6" cy="156.2" r="0.5" fill="#fff" fill-opacity="0.76"/><circle cx="535.0" cy="165.9" r="0.7" fill="#fff" fill-opacity="0.96"/><circle cx="1004.3" cy="243.7" r="0.6" fill="#fff" fill-opacity="0.53"/><circle cx="796.0" cy="279.9" r="0.9" fill="#fff" fill-opacity="0.57"/><circle cx="775.5" cy="420.3" r="0.5" fill="#fff" fill-opacity="0.74"/><circle cx="395.0" cy="184.3" r="0.5" fill="#fff" fill-opacity="0.59"/><circle cx="876.6" cy="258.8" r="0.5" fill="#fff" fill-opacity="0.87"/><circle cx="362.6" cy="0.7" r="0.6" fill="#fff" fill-opacity="0.52"/><circle cx="201.3" cy="395.9" r="0.4" fill="#fff" fill-opacity="0.54"/><circle cx="180.1" cy="383.0" r="0.9" fill="#fff" fill-opacity="0.45"/><circle cx="1248.5" cy="342.8" r="0.9" fill="#fff" fill-opacity="0.80"/><circle cx="1169.6" cy="149.1" r="0.4" fill="#fff" fill-opacity="0.70"/><circle cx="620.5" cy="164.1" r="0.5" fill="#fff" fill-opacity="0.55"/><circle cx="73.7" cy="170.1" r="0.5" fill="#fff" fill-opacity="0.95"/><circle cx="750.6" cy="4.0" r="0.7" fill="#fff" fill-opacity="0.65"/><circle cx="112.3" cy="346.8" r="0.4" fill="#fff" fill-opacity="0.50"/><circle cx="741.9" cy="385.7" r="0.9" fill="#fff" fill-opacity="0.56"/><circle cx="647.9" cy="86.8" r="0.5" fill="#fff" fill-opacity="0.48"/><circle cx="231.3" cy="301.5" r="0.6" fill="#fff" fill-opacity="0.73"/><circle cx="459.4" cy="335.2" r="0.5" fill="#fff" fill-opacity="0.51"/><circle cx="1181.0" cy="212.1" r="0.4" fill="#fff" fill-opacity="0.59"/><circle cx="593.2" cy="35.1" r="0.6" fill="#fff" fill-opacity="0.74"/><circle cx="441.5" cy="223.4" r="0.4" fill="#fff" fill-opacity="0.41"/><circle cx="261.9" cy="374.4" r="0.9" fill="#fff" fill-opacity="0.67"/><circle cx="726.0" cy="112.5" r="0.6" fill="#fff" fill-opacity="0.63"/><circle cx="1211.5" cy="329.9" r="0.9" fill="#fff" fill-opacity="0.98"/><circle cx="325.1" cy="16.3" r="0.5" fill="#fff" fill-opacity="1.00"/><circle cx="484.1" cy="11.8" r="0.4" fill="#fff" fill-opacity="0.71"/><circle cx="1114.5" cy="197.1" r="0.4" fill="#fff" fill-opacity="0.91"/><circle cx="819.0" cy="396.5" r="0.4" fill="#fff" fill-opacity="0.52"/><circle cx="722.5" cy="275.5" r="0.9" fill="#fff" fill-opacity="0.61"/><circle cx="573.9" cy="68.7" r="0.5" fill="#fff" fill-opacity="0.99"/><circle cx="283.8" cy="16.6" r="0.6" fill="#fff" fill-opacity="0.96"/><circle cx="75.9" cy="237.7" r="0.4" fill="#fff" fill-opacity="0.89"/><circle cx="60.2" cy="338.1" r="0.7" fill="#fff" fill-opacity="0.39"/><circle cx="185.3" cy="324.6" r="0.5" fill="#fff" fill-opacity="0.79"/><circle cx="382.5" cy="254.3" r="0.4" fill="#fff" fill-opacity="0.66"/><circle cx="475.8" cy="167.7" r="0.6" fill="#fff" fill-opacity="0.66"/><circle cx="215.8" cy="102.5" r="0.5" fill="#fff" fill-opacity="0.94"/><circle cx="1142.0" cy="201.2" r="0.5" fill="#fff" fill-opacity="0.87"/><circle cx="200.9" cy="358.1" r="0.4" fill="#fff" fill-opacity="0.96"/><circle cx="1109.4" cy="382.1" r="0.5" fill="#fff" fill-opacity="0.86"/><circle cx="1226.2" cy="398.2" r="0.7" fill="#fff" fill-opacity="0.90"/><circle cx="804.3" cy="194.5" r="0.6" fill="#fff" fill-opacity="0.56"/><circle cx="299.4" cy="49.7" r="0.6" fill="#fff" fill-opacity="0.44"/><circle cx="283.7" cy="24.4" r="0.7" fill="#fff" fill-opacity="0.71"/><circle cx="185.2" cy="374.4" r="0.6" fill="#fff" fill-opacity="0.62"/><circle cx="315.8" cy="10.9" r="0.9" fill="#fff" fill-opacity="0.90"/><circle cx="428.2" cy="72.2" r="0.7" fill="#fff" fill-opacity="0.42"/><circle cx="583.9" cy="207.4" r="0.5" fill="#fff" fill-opacity="0.99"/><circle cx="72.8" cy="384.9" r="0.5" fill="#fff" fill-opacity="0.71"/><circle cx="1069.2" cy="51.3" r="0.5" fill="#fff" fill-opacity="0.98"/><circle cx="553.0" cy="112.5" r="0.5" fill="#fff" fill-opacity="0.95"/><circle cx="124.9" cy="124.5" r="0.5" fill="#fff" fill-opacity="0.39"/><circle cx="929.9" cy="126.2" r="0.4" fill="#fff" fill-opacity="0.64"/><circle cx="650.0" cy="219.6" r="0.7" fill="#fff" fill-opacity="0.35"/><circle cx="1065.3" cy="226.4" r="0.5" fill="#fff" fill-opacity="0.58"/><circle cx="51.9" cy="175.8" r="0.6" fill="#fff" fill-opacity="0.72"/><circle cx="176.7" cy="77.5" r="0.5" fill="#fff" fill-opacity="0.81"/><circle cx="251.8" cy="34.1" r="0.4" fill="#fff" fill-opacity="0.93"/><circle cx="935.5" cy="327.4" r="0.5" fill="#fff" fill-opacity="0.48"/><circle cx="783.9" cy="304.3" r="0.5" fill="#fff" fill-opacity="0.73"/><circle cx="258.9" cy="28.2" r="0.9" fill="#fff" fill-opacity="0.62"/><circle cx="923.7" cy="23.8" r="0.6" fill="#fff" fill-opacity="0.57"/><circle cx="1077.6" cy="371.7" r="0.7" fill="#fff" fill-opacity="0.41"/><circle cx="524.2" cy="328.1" r="0.5" fill="#fff" fill-opacity="0.92"/><circle cx="340.8" cy="80.0" r="0.6" fill="#fff" fill-opacity="0.37"/><circle cx="898.9" cy="247.2" r="0.4" fill="#fff" fill-opacity="0.58"/><circle cx="1193.1" cy="416.6" r="0.4" fill="#fff" fill-opacity="0.43"/><circle cx="914.7" cy="351.1" r="0.6" fill="#fff" fill-opacity="0.86"/><circle cx="1111.2" cy="247.8" r="0.4" fill="#fff" fill-opacity="0.54"/><circle cx="137.8" cy="314.3" r="0.7" fill="#fff" fill-opacity="0.68"/><circle cx="679.1" cy="231.1" r="0.4" fill="#fff" fill-opacity="0.51"/><circle cx="113.4" cy="266.2" r="0.5" fill="#fff" fill-opacity="0.42"/><circle cx="320.6" cy="351.4" r="0.4" fill="#fff" fill-opacity="0.36"/><circle cx="1185.7" cy="317.7" r="0.6" fill="#fff" fill-opacity="0.36"/><circle cx="767.2" cy="247.9" r="0.9" fill="#fff" fill-opacity="0.50"/><circle cx="568.6" cy="150.8" r="0.4" fill="#fff" fill-opacity="0.82"/><circle cx="57.8" cy="52.9" r="0.7" fill="#fff" fill-opacity="0.73"/><circle cx="974.7" cy="47.3" r="0.4" fill="#fff" fill-opacity="0.61"/><circle cx="175.3" cy="254.5" r="0.5" fill="#fff" fill-opacity="0.45"/><circle cx="733.2" cy="321.0" r="0.5" fill="#fff" fill-opacity="0.97"/><circle cx="23.7" cy="273.0" r="0.7" fill="#fff" fill-opacity="0.74"/><circle cx="771.6" cy="15.6" r="0.4" fill="#fff" fill-opacity="0.85"/><circle cx="433.3" cy="103.4" r="0.6" fill="#fff" fill-opacity="0.82"/><circle cx="1079.1" cy="242.7" r="0.6" fill="#fff" fill-opacity="0.88"/><circle cx="1085.0" cy="23.0" r="0.9" fill="#fff" fill-opacity="0.45"/><circle cx="870.6" cy="152.0" r="0.7" fill="#fff" fill-opacity="0.78"/><circle cx="14.8" cy="46.9" r="0.5" fill="#fff" fill-opacity="0.40"/><circle cx="554.3" cy="217.1" r="0.4" fill="#fff" fill-opacity="0.50"/><circle cx="538.5" cy="170.7" r="0.7" fill="#fff" fill-opacity="0.76"/><circle cx="1035.9" cy="380.3" r="0.4" fill="#fff" fill-opacity="0.37"/><circle cx="821.2" cy="114.3" r="0.9" fill="#fff" fill-opacity="0.53"/><circle cx="694.1" cy="397.5" r="0.9" fill="#fff" fill-opacity="0.42"/><circle cx="155.8" cy="5.9" r="0.5" fill="#fff" fill-opacity="0.97"/><circle cx="368.0" cy="131.3" r="0.5" fill="#fff" fill-opacity="0.43"/><circle cx="760.7" cy="411.1" r="0.9" fill="#fff" fill-opacity="0.94"/><circle cx="108.1" cy="253.8" r="0.5" fill="#fff" fill-opacity="0.64"/><circle cx="654.9" cy="380.6" r="0.7" fill="#fff" fill-opacity="0.73"/><circle cx="350.9" cy="316.5" r="0.9" fill="#fff" fill-opacity="0.54"/><circle cx="581.3" cy="298.8" r="0.5" fill="#fff" fill-opacity="0.77"/><circle cx="257.5" cy="305.5" r="0.7" fill="#fff" fill-opacity="0.93"/><circle cx="388.7" cy="205.5" r="0.6" fill="#fff" fill-opacity="0.37"/><circle cx="427.1" cy="81.2" r="0.9" fill="#fff" fill-opacity="0.60"/><circle cx="749.7" cy="5.1" r="0.6" fill="#fff" fill-opacity="0.46"/><circle cx="1218.7" cy="139.3" r="0.6" fill="#fff" fill-opacity="0.67"/><circle cx="364.6" cy="424.6" r="0.6" fill="#fff" fill-opacity="0.39"/><circle cx="27.9" cy="237.0" r="0.9" fill="#fff" fill-opacity="0.92"/><circle cx="563.2" cy="26.7" r="0.7" fill="#fff" fill-opacity="0.89"/><circle cx="453.3" cy="328.0" r="0.9" fill="#fff" fill-opacity="0.50"/><circle cx="1227.9" cy="317.6" r="0.5" fill="#fff" fill-opacity="0.62"/><circle cx="855.4" cy="60.3" r="0.5" fill="#fff" fill-opacity="0.75"/><circle cx="1088.0" cy="353.1" r="0.9" fill="#fff" fill-opacity="0.41"/><circle cx="1096.0" cy="396.5" r="0.7" fill="#fff" fill-opacity="0.52"/><circle cx="807.3" cy="271.8" r="0.5" fill="#fff" fill-opacity="0.62"/><circle cx="132.3" cy="176.5" r="0.9" fill="#fff" fill-opacity="0.73"/><circle cx="637.3" cy="414.0" r="0.9" fill="#fff" fill-opacity="0.45"/><circle cx="1087.9" cy="120.1" r="0.9" fill="#fff" fill-opacity="0.74"/><circle cx="485.8" cy="194.5" r="0.7" fill="#fff" fill-opacity="0.54"/><circle cx="451.4" cy="151.8" r="0.9" fill="#fff" fill-opacity="0.71"/><circle cx="492.2" cy="138.5" r="0.7" fill="#fff" fill-opacity="0.60"/><circle cx="384.0" cy="230.9" r="0.5" fill="#fff" fill-opacity="0.63"/><circle cx="482.6" cy="99.7" r="0.6" fill="#fff" fill-opacity="0.56"/><circle cx="1079.5" cy="360.4" r="0.6" fill="#fff" fill-opacity="0.48"/><circle cx="545.9" cy="391.5" r="0.4" fill="#fff" fill-opacity="0.37"/><circle cx="328.4" cy="385.2" r="0.6" fill="#fff" fill-opacity="0.95"/><circle cx="990.1" cy="231.6" r="0.7" fill="#fff" fill-opacity="0.69"/><circle cx="662.1" cy="294.6" r="0.7" fill="#fff" fill-opacity="0.65"/><circle cx="52.1" cy="290.8" r="0.7" fill="#fff" fill-opacity="0.97"/><circle cx="865.9" cy="225.9" r="0.4" fill="#fff" fill-opacity="0.62"/><circle cx="641.2" cy="278.9" r="0.9" fill="#fff" fill-opacity="0.45"/><circle cx="240.9" cy="181.1" r="0.7" fill="#fff" fill-opacity="0.64"/><circle cx="799.5" cy="428.3" r="0.6" fill="#fff" fill-opacity="0.80"/><circle cx="955.5" cy="39.7" r="0.6" fill="#fff" fill-opacity="0.56"/><circle cx="1252.4" cy="355.2" r="0.9" fill="#fff" fill-opacity="0.46"/><circle cx="839.6" cy="126.8" r="0.6" fill="#fff" fill-opacity="0.88"/><circle cx="1267.5" cy="381.9" r="0.7" fill="#fff" fill-opacity="0.76"/><circle cx="670.8" cy="350.9" r="0.5" fill="#fff" fill-opacity="0.68"/><circle cx="240.8" cy="78.4" r="0.9" fill="#fff" fill-opacity="0.74"/><circle cx="452.1" cy="427.3" r="0.4" fill="#fff" fill-opacity="0.80"/><circle cx="13.7" cy="1.2" r="0.9" fill="#fff" fill-opacity="0.35"/><circle cx="389.7" cy="362.1" r="0.9" fill="#fff" fill-opacity="0.36"/><circle cx="37.8" cy="75.3" r="0.9" fill="#fff" fill-opacity="0.72"/><circle cx="1115.1" cy="385.1" r="0.9" fill="#fff" fill-opacity="1.00"/><circle cx="735.3" cy="176.8" r="0.4" fill="#fff" fill-opacity="0.44"/><circle cx="663.6" cy="219.1" r="0.4" fill="#fff" fill-opacity="0.42"/><circle cx="218.3" cy="224.7" r="0.7" fill="#fff" fill-opacity="0.75"/><circle cx="1032.4" cy="26.7" r="0.4" fill="#fff" fill-opacity="0.79"/><circle cx="740.9" cy="61.9" r="0.5" fill="#fff" fill-opacity="0.58"/><circle cx="216.9" cy="114.6" r="0.4" fill="#fff" fill-opacity="0.91"/><circle cx="1213.1" cy="27.1" r="0.5" fill="#fff" fill-opacity="0.64"/><circle cx="493.6" cy="23.5" r="0.7" fill="#fff" fill-opacity="0.73"/><circle cx="1228.3" cy="189.0" r="0.9" fill="#fff" fill-opacity="0.50"/><circle cx="285.3" cy="68.5" r="0.9" fill="#fff" fill-opacity="0.91"/><circle cx="402.9" cy="386.5" r="0.7" fill="#fff" fill-opacity="0.55"/><circle cx="771.3" cy="412.8" r="0.7" fill="#fff" fill-opacity="0.99"/><circle cx="86.4" cy="291.2" r="0.9" fill="#fff" fill-opacity="0.49"/><circle cx="395.7" cy="376.4" r="0.7" fill="#fff" fill-opacity="0.36"/><circle cx="1111.3" cy="37.6" r="0.5" fill="#fff" fill-opacity="0.58"/><circle cx="238.8" cy="417.8" r="0.6" fill="#fff" fill-opacity="0.61"/><circle cx="464.6" cy="144.1" r="0.7" fill="#fff" fill-opacity="0.57"/><circle cx="833.6" cy="413.3" r="0.7" fill="#fff" fill-opacity="0.89"/><circle cx="449.6" cy="105.3" r="0.5" fill="#fff" fill-opacity="0.65"/><circle cx="440.9" cy="187.3" r="0.6" fill="#fff" fill-opacity="0.78"/><circle cx="437.0" cy="67.0" r="0.5" fill="#fff" fill-opacity="0.41"/><circle cx="345.2" cy="359.1" r="0.5" fill="#fff" fill-opacity="0.71"/><circle cx="597.8" cy="341.8" r="0.5" fill="#fff" fill-opacity="0.45"/><circle cx="451.7" cy="310.7" r="0.7" fill="#fff" fill-opacity="0.76"/><circle cx="743.4" cy="127.8" r="0.7" fill="#fff" fill-opacity="0.68"/><circle cx="290.9" cy="194.7" r="0.5" fill="#fff" fill-opacity="0.96"/><circle cx="1277.3" cy="256.3" r="0.7" fill="#fff" fill-opacity="0.73"/><circle cx="471.0" cy="105.9" r="0.9" fill="#fff" fill-opacity="0.68"/><circle cx="160.7" cy="322.8" r="0.9" fill="#fff" fill-opacity="0.41"/><circle cx="1090.4" cy="316.5" r="0.7" fill="#fff" fill-opacity="0.37"/><circle cx="919.3" cy="62.4" r="0.4" fill="#fff" fill-opacity="0.60"/><circle cx="110.1" cy="76.1" r="0.5" fill="#fff" fill-opacity="0.56"/><circle cx="848.3" cy="46.9" r="0.9" fill="#fff" fill-opacity="0.94"/><circle cx="1030.6" cy="326.1" r="0.5" fill="#fff" fill-opacity="0.39"/><circle cx="398.4" cy="97.4" r="0.5" fill="#fff" fill-opacity="0.88"/><circle cx="510.7" cy="153.0" r="0.7" fill="#fff" fill-opacity="0.85"/><circle cx="1129.9" cy="370.4" r="0.5" fill="#fff" fill-opacity="0.96"/><circle cx="225.8" cy="157.6" r="0.6" fill="#fff" fill-opacity="0.93"/><circle cx="32.3" cy="302.6" r="0.7" fill="#fff" fill-opacity="0.51"/><circle cx="1083.8" cy="151.4" r="0.4" fill="#fff" fill-opacity="0.47"/><circle cx="147.5" cy="392.5" r="0.5" fill="#fff" fill-opacity="0.81"/><circle cx="51.8" cy="17.2" r="0.5" fill="#fff" fill-opacity="0.63"/><circle cx="968.9" cy="67.2" r="0.4" fill="#fff" fill-opacity="0.71"/><circle cx="805.7" cy="404.9" r="0.9" fill="#fff" fill-opacity="0.90"/><circle cx="729.8" cy="308.2" r="0.6" fill="#fff" fill-opacity="0.95"/><circle cx="857.8" cy="247.4" r="0.4" fill="#fff" fill-opacity="0.42"/><circle cx="977.5" cy="281.8" r="0.4" fill="#fff" fill-opacity="0.92"/><circle cx="749.0" cy="299.3" r="0.5" fill="#fff" fill-opacity="0.79"/><circle cx="47.5" cy="137.0" r="0.6" fill="#fff" fill-opacity="0.84"/><circle cx="110.3" cy="298.7" r="0.7" fill="#fff" fill-opacity="1.00"/><circle cx="787.6" cy="94.9" r="0.9" fill="#fff" fill-opacity="0.41"/><circle cx="1211.3" cy="182.3" r="0.6" fill="#fff" fill-opacity="0.80"/><circle cx="945.4" cy="356.9" r="0.7" fill="#fff" fill-opacity="0.68"/><circle cx="866.0" cy="88.6" r="0.9" fill="#fff" fill-opacity="0.90"/><circle cx="996.2" cy="210.5" r="0.5" fill="#fff" fill-opacity="0.38"/><circle cx="899.5" cy="346.5" r="0.6" fill="#fff" fill-opacity="0.46"/><circle cx="209.5" cy="335.8" r="0.5" fill="#fff" fill-opacity="0.70"/><circle cx="319.6" cy="25.5" r="0.6" fill="#fff" fill-opacity="0.58"/><circle cx="118.5" cy="273.7" r="0.5" fill="#fff" fill-opacity="0.44"/><circle cx="904.9" cy="288.2" r="0.5" fill="#fff" fill-opacity="0.81"/><circle cx="7.5" cy="297.4" r="0.5" fill="#fff" fill-opacity="0.96"/><circle cx="449.9" cy="128.7" r="0.5" fill="#fff" fill-opacity="0.73"/><circle cx="308.2" cy="270.6" r="0.4" fill="#fff" fill-opacity="0.71"/><circle cx="973.5" cy="72.8" r="0.5" fill="#fff" fill-opacity="0.74"/><circle cx="590.3" cy="329.4" r="0.5" fill="#fff" fill-opacity="0.42"/><circle cx="370.4" cy="155.0" r="0.5" fill="#fff" fill-opacity="0.38"/><circle cx="1146.6" cy="130.7" r="0.4" fill="#fff" fill-opacity="0.81"/><circle cx="573.5" cy="48.6" r="0.6" fill="#fff" fill-opacity="0.64"/><circle cx="728.6" cy="124.5" r="0.9" fill="#fff" fill-opacity="0.40"/><circle cx="13.8" cy="426.6" r="0.7" fill="#fff" fill-opacity="0.40"/><circle cx="917.9" cy="421.5" r="0.9" fill="#fff" fill-opacity="0.52"/><circle cx="825.7" cy="411.4" r="0.7" fill="#fff" fill-opacity="0.47"/><circle cx="695.1" cy="3.6" r="0.4" fill="#fff" fill-opacity="0.77"/><circle cx="803.5" cy="402.2" r="0.6" fill="#fff" fill-opacity="0.77"/><circle cx="100.0" cy="321.4" r="0.4" fill="#fff" fill-opacity="0.85"/><circle cx="1074.7" cy="127.4" r="0.5" fill="#fff" fill-opacity="0.98"/><circle cx="672.6" cy="385.1" r="0.5" fill="#fff" fill-opacity="0.42"/><circle cx="920.1" cy="133.5" r="0.9" fill="#fff" fill-opacity="0.56"/><circle cx="236.2" cy="354.9" r="0.6" fill="#fff" fill-opacity="0.50"/><circle cx="174.5" cy="395.5" r="0.6" fill="#fff" fill-opacity="0.51"/><circle cx="52.8" cy="243.8" r="0.7" fill="#fff" fill-opacity="0.94"/><circle cx="1209.5" cy="212.6" r="0.7" fill="#fff" fill-opacity="0.82"/><circle cx="1274.4" cy="259.1" r="0.4" fill="#fff" fill-opacity="0.44"/><circle cx="291.2" cy="59.5" r="0.7" fill="#fff" fill-opacity="0.41"/><circle cx="51.1" cy="189.0" r="0.5" fill="#fff" fill-opacity="0.49"/><circle cx="476.8" cy="13.8" r="0.9" fill="#fff" fill-opacity="0.91"/><circle cx="1007.3" cy="182.9" r="0.6" fill="#fff" fill-opacity="0.40"/><circle cx="70.8" cy="305.6" r="0.6" fill="#fff" fill-opacity="0.39"/><circle cx="11.3" cy="411.1" r="0.5" fill="#fff" fill-opacity="0.94"/><circle cx="210.5" cy="127.2" r="0.7" fill="#fff" fill-opacity="0.87"/><circle cx="864.3" cy="244.0" r="0.7" fill="#fff" fill-opacity="0.41"/><circle cx="414.3" cy="198.0" r="0.9" fill="#fff" fill-opacity="0.94"/><circle cx="1107.7" cy="419.0" r="0.9" fill="#fff" fill-opacity="0.75"/><circle cx="1038.3" cy="25.8" r="0.6" fill="#fff" fill-opacity="0.75"/><circle cx="380.2" cy="245.6" r="0.6" fill="#fff" fill-opacity="0.66"/><circle cx="828.6" cy="128.7" r="0.6" fill="#fff" fill-opacity="0.69"/><circle cx="811.2" cy="364.7" r="0.5" fill="#fff" fill-opacity="0.79"/><circle cx="572.6" cy="36.6" r="0.9" fill="#fff" fill-opacity="0.59"/><circle cx="743.4" cy="179.0" r="0.9" fill="#fff" fill-opacity="0.51"/><circle cx="565.0" cy="112.3" r="0.5" fill="#fff" fill-opacity="0.47"/><circle cx="1139.2" cy="235.7" r="0.4" fill="#fff" fill-opacity="0.49"/><circle cx="1071.8" cy="279.4" r="0.5" fill="#fff" fill-opacity="0.70"/><circle cx="322.0" cy="210.4" r="0.9" fill="#fff" fill-opacity="0.65"/><circle cx="692.8" cy="299.6" r="0.9" fill="#fff" fill-opacity="0.94"/><circle cx="725.6" cy="366.2" r="0.4" fill="#fff" fill-opacity="0.87"/><circle cx="171.9" cy="216.3" r="0.9" fill="#fff" fill-opacity="0.81"/><circle cx="968.8" cy="49.3" r="0.9" fill="#fff" fill-opacity="0.42"/><circle cx="1062.7" cy="168.5" r="0.5" fill="#fff" fill-opacity="0.98"/><circle cx="245.3" cy="204.3" r="0.4" fill="#fff" fill-opacity="0.44"/><circle cx="993.5" cy="24.7" r="0.5" fill="#fff" fill-opacity="0.38"/><circle cx="53.4" cy="301.8" r="0.5" fill="#fff" fill-opacity="0.65"/><circle cx="154.3" cy="58.3" r="0.4" fill="#fff" fill-opacity="0.75"/><circle cx="1116.3" cy="242.1" r="0.6" fill="#fff" fill-opacity="0.46"/><circle cx="954.2" cy="146.8" r="0.4" fill="#fff" fill-opacity="0.89"/><circle cx="157.1" cy="160.4" r="0.9" fill="#fff" fill-opacity="0.97"/><circle cx="923.9" cy="18.7" r="0.9" fill="#fff" fill-opacity="0.58"/><circle cx="455.3" cy="140.8" r="0.9" fill="#fff" fill-opacity="0.42"/><circle cx="1184.5" cy="290.3" r="0.6" fill="#fff" fill-opacity="0.58"/><circle cx="888.2" cy="9.2" r="0.9" fill="#fff" fill-opacity="0.64"/><circle cx="1012.7" cy="209.9" r="0.4" fill="#fff" fill-opacity="0.87"/><circle cx="237.1" cy="238.3" r="0.6" fill="#fff" fill-opacity="0.92"/><circle cx="857.0" cy="359.6" r="0.9" fill="#fff" fill-opacity="0.92"/><circle cx="689.2" cy="296.5" r="0.6" fill="#fff" fill-opacity="0.97"/><circle cx="17.7" cy="147.2" r="0.5" fill="#fff" fill-opacity="0.67"/><circle cx="619.5" cy="13.6" r="0.4" fill="#fff" fill-opacity="0.40"/><circle cx="794.1" cy="277.2" r="0.9" fill="#fff" fill-opacity="0.61"/><circle cx="609.0" cy="68.1" r="0.7" fill="#fff" fill-opacity="0.61"/><circle cx="1117.5" cy="262.7" r="0.4" fill="#fff" fill-opacity="0.58"/><circle cx="676.2" cy="133.8" r="0.5" fill="#fff" fill-opacity="0.73"/><circle cx="55.9" cy="73.0" r="0.6" fill="#fff" fill-opacity="0.82"/><circle cx="424.2" cy="201.4" r="0.6" fill="#fff" fill-opacity="0.55"/><circle cx="429.4" cy="207.9" r="0.5" fill="#fff" fill-opacity="0.36"/><circle cx="588.0" cy="424.2" r="0.4" fill="#fff" fill-opacity="0.76"/><circle cx="930.5" cy="61.8" r="0.7" fill="#fff" fill-opacity="0.53"/><circle cx="640.0" cy="112.7" r="0.9" fill="#fff" fill-opacity="0.72"/><circle cx="748.0" cy="59.8" r="0.4" fill="#fff" fill-opacity="0.94"/><circle cx="1155.4" cy="41.0" r="0.5" fill="#fff" fill-opacity="0.85"/><circle cx="810.4" cy="272.9" r="0.6" fill="#fff" fill-opacity="0.86"/><circle cx="1015.1" cy="102.4" r="0.5" fill="#fff" fill-opacity="0.79"/><circle cx="389.1" cy="328.2" r="0.6" fill="#fff" fill-opacity="0.68"/><circle cx="813.1" cy="150.7" r="0.9" fill="#fff" fill-opacity="0.82"/><circle cx="428.1" cy="302.8" r="0.6" fill="#fff" fill-opacity="0.92"/><circle cx="1001.7" cy="216.6" r="0.5" fill="#fff" fill-opacity="0.88"/><circle cx="1275.7" cy="64.8" r="0.5" fill="#fff" fill-opacity="0.35"/><circle cx="1114.8" cy="194.8" r="0.7" fill="#fff" fill-opacity="0.61"/><circle cx="988.6" cy="399.7" r="0.9" fill="#fff" fill-opacity="0.39"/><circle cx="385.9" cy="132.7" r="0.9" fill="#fff" fill-opacity="0.71"/><circle cx="1199.9" cy="146.4" r="0.5" fill="#fff" fill-opacity="0.73"/><circle cx="102.4" cy="76.9" r="0.9" fill="#fff" fill-opacity="0.58"/><circle cx="598.9" cy="417.3" r="0.7" fill="#fff" fill-opacity="0.82"/><circle cx="1180.1" cy="360.6" r="0.6" fill="#fff" fill-opacity="0.93"/><circle cx="353.1" cy="110.7" r="0.4" fill="#fff" fill-opacity="0.84"/><circle cx="801.9" cy="101.9" r="0.4" fill="#fff" fill-opacity="0.49"/><circle cx="511.5" cy="86.1" r="0.9" fill="#fff" fill-opacity="0.53"/><circle cx="642.5" cy="42.8" r="0.5" fill="#fff" fill-opacity="0.83"/><circle cx="1232.8" cy="258.4" r="0.4" fill="#fff" fill-opacity="0.40"/><circle cx="1044.9" cy="247.5" r="0.5" fill="#fff" fill-opacity="0.35"/><circle cx="346.4" cy="276.3" r="0.4" fill="#fff" fill-opacity="0.77"/><circle cx="1181.3" cy="91.3" r="0.6" fill="#fff" fill-opacity="0.91"/><circle cx="34.7" cy="209.1" r="0.9" fill="#fff" fill-opacity="0.79"/><circle cx="432.4" cy="24.7" r="0.7" fill="#fff" fill-opacity="0.87"/><circle cx="111.6" cy="263.5" r="0.7" fill="#fff" fill-opacity="0.99"/><circle cx="511.4" cy="404.3" r="0.4" fill="#fff" fill-opacity="0.37"/><circle cx="405.6" cy="281.3" r="0.6" fill="#fff" fill-opacity="0.39"/><circle cx="785.9" cy="311.4" r="0.6" fill="#fff" fill-opacity="0.45"/><circle cx="23.8" cy="90.5" r="0.9" fill="#fff" fill-opacity="0.85"/><circle cx="115.0" cy="350.0" r="0.7" fill="#fff" fill-opacity="0.57"/><circle cx="870.6" cy="372.3" r="0.5" fill="#fff" fill-opacity="0.78"/><circle cx="770.0" cy="142.3" r="0.9" fill="#fff" fill-opacity="0.52"/><circle cx="910.6" cy="328.2" r="0.6" fill="#fff" fill-opacity="0.77"/><circle cx="703.4" cy="303.7" r="0.9" fill="#fff" fill-opacity="0.53"/><circle cx="669.9" cy="404.6" r="0.5" fill="#fff" fill-opacity="0.51"/><circle cx="714.4" cy="42.9" r="0.6" fill="#fff" fill-opacity="0.45"/><circle cx="805.0" cy="172.4" r="0.4" fill="#fff" fill-opacity="0.96"/><circle cx="799.5" cy="52.6" r="0.9" fill="#fff" fill-opacity="0.68"/><circle cx="710.7" cy="78.2" r="0.9" fill="#fff" fill-opacity="0.59"/><circle cx="191.1" cy="76.3" r="0.5" fill="#fff" fill-opacity="0.69"/><circle cx="449.1" cy="305.1" r="0.7" fill="#fff" fill-opacity="0.99"/><circle cx="638.6" cy="273.5" r="0.6" fill="#fff" fill-opacity="0.94"/><circle cx="498.0" cy="91.2" r="0.4" fill="#fff" fill-opacity="0.42"/><circle cx="938.7" cy="28.1" r="0.7" fill="#fff" fill-opacity="0.79"/><circle cx="448.9" cy="98.1" r="0.7" fill="#fff" fill-opacity="0.62"/><circle cx="1176.5" cy="406.3" r="0.5" fill="#fff" fill-opacity="0.37"/><circle cx="26.6" cy="305.0" r="0.5" fill="#fff" fill-opacity="0.50"/><circle cx="260.1" cy="326.4" r="0.6" fill="#fff" fill-opacity="0.54"/><circle cx="1272.7" cy="93.1" r="0.9" fill="#fff" fill-opacity="0.86"/><circle cx="611.0" cy="401.6" r="0.6" fill="#fff" fill-opacity="0.97"/><circle cx="174.8" cy="129.0" r="0.4" fill="#fff" fill-opacity="0.57"/><circle cx="621.5" cy="383.1" r="0.5" fill="#fff" fill-opacity="0.56"/><circle cx="781.1" cy="411.4" r="0.5" fill="#fff" fill-opacity="0.73"/><circle cx="1130.1" cy="90.2" r="0.6" fill="#fff" fill-opacity="0.38"/><circle cx="990.6" cy="188.8" r="0.7" fill="#fff" fill-opacity="0.91"/><circle cx="1273.4" cy="128.0" r="0.4" fill="#fff" fill-opacity="0.87"/><circle cx="194.5" cy="392.5" r="0.5" fill="#fff" fill-opacity="0.94"/><circle cx="193.0" cy="316.5" r="0.4" fill="#fff" fill-opacity="0.84"/><circle cx="594.5" cy="170.8" r="0.7" fill="#fff" fill-opacity="0.57"/><circle cx="1175.7" cy="308.0" r="0.6" fill="#fff" fill-opacity="0.99"/><circle cx="42.1" cy="100.9" r="0.4" fill="#fff" fill-opacity="0.37"/><circle cx="646.1" cy="99.6" r="0.7" fill="#fff" fill-opacity="0.80"/><circle cx="932.5" cy="20.8" r="0.6" fill="#fff" fill-opacity="0.39"/><circle cx="141.2" cy="411.6" r="0.5" fill="#fff" fill-opacity="0.69"/><circle cx="3.3" cy="96.3" r="0.9" fill="#fff" fill-opacity="0.45"/><circle cx="944.9" cy="215.3" r="0.4" fill="#fff" fill-opacity="0.69"/><circle cx="1074.7" cy="411.6" r="0.4" fill="#fff" fill-opacity="0.58"/><circle cx="275.4" cy="416.0" r="0.5" fill="#fff" fill-opacity="0.83"/><circle cx="349.4" cy="76.2" r="0.6" fill="#fff" fill-opacity="0.52"/><circle cx="1236.9" cy="84.5" r="0.4" fill="#fff" fill-opacity="0.62"/><circle cx="712.5" cy="155.9" r="0.4" fill="#fff" fill-opacity="0.56"/><circle cx="53.0" cy="195.1" r="0.6" fill="#fff" fill-opacity="0.71"/><circle cx="883.6" cy="422.4" r="0.6" fill="#fff" fill-opacity="0.61"/><circle cx="407.4" cy="180.2" r="0.5" fill="#fff" fill-opacity="0.60"/><circle cx="493.3" cy="176.3" r="0.5" fill="#fff" fill-opacity="0.93"/><circle cx="812.8" cy="102.8" r="0.9" fill="#fff" fill-opacity="0.95"/><circle cx="326.0" cy="262.7" r="0.7" fill="#fff" fill-opacity="0.99"/><circle cx="1056.7" cy="285.3" r="0.4" fill="#fff" fill-opacity="0.90"/><circle cx="1003.5" cy="390.7" r="0.4" fill="#fff" fill-opacity="0.61"/><circle cx="714.9" cy="294.5" r="0.7" fill="#fff" fill-opacity="0.71"/><circle cx="404.0" cy="417.8" r="0.4" fill="#fff" fill-opacity="0.66"/><circle cx="828.6" cy="202.4" r="0.6" fill="#fff" fill-opacity="0.73"/><circle cx="1273.3" cy="100.8" r="0.7" fill="#fff" fill-opacity="0.58"/><circle cx="82.1" cy="419.7" r="0.6" fill="#fff" fill-opacity="0.75"/><circle cx="866.8" cy="138.5" r="0.9" fill="#fff" fill-opacity="0.78"/><circle cx="1182.7" cy="329.1" r="0.6" fill="#fff" fill-opacity="0.94"/><circle cx="605.8" cy="310.3" r="0.9" fill="#fff" fill-opacity="0.73"/><circle cx="730.5" cy="429.7" r="0.4" fill="#fff" fill-opacity="0.95"/><circle cx="676.8" cy="225.3" r="0.9" fill="#fff" fill-opacity="0.46"/><circle cx="468.2" cy="289.7" r="0.5" fill="#fff" fill-opacity="0.88"/><circle cx="589.2" cy="275.4" r="0.4" fill="#fff" fill-opacity="0.56"/><circle cx="463.1" cy="371.4" r="0.7" fill="#fff" fill-opacity="0.43"/><circle cx="196.9" cy="108.1" r="0.4" fill="#fff" fill-opacity="0.59"/><circle cx="848.6" cy="224.7" r="0.6" fill="#fff" fill-opacity="0.64"/><circle cx="112.6" cy="170.1" r="0.7" fill="#fff" fill-opacity="0.80"/><circle cx="575.1" cy="205.7" r="0.5" fill="#fff" fill-opacity="0.84"/><circle cx="191.8" cy="292.5" r="0.6" fill="#fff" fill-opacity="0.67"/><circle cx="845.1" cy="267.8" r="0.9" fill="#fff" fill-opacity="0.57"/><circle cx="487.9" cy="7.6" r="0.5" fill="#fff" fill-opacity="0.35"/><circle cx="332.4" cy="254.0" r="0.6" fill="#fff" fill-opacity="0.82"/><circle cx="351.5" cy="139.3" r="0.5" fill="#fff" fill-opacity="0.52"/><circle cx="560.7" cy="225.8" r="0.7" fill="#fff" fill-opacity="0.91"/><circle cx="258.2" cy="182.0" r="0.6" fill="#fff" fill-opacity="0.75"/><circle cx="475.7" cy="18.9" r="0.7" fill="#fff" fill-opacity="0.59"/><circle cx="53.4" cy="323.8" r="0.7" fill="#fff" fill-opacity="0.63"/><circle cx="777.5" cy="110.4" r="0.5" fill="#fff" fill-opacity="0.60"/><circle cx="740.7" cy="397.7" r="0.5" fill="#fff" fill-opacity="0.99"/><circle cx="1090.2" cy="249.5" r="0.4" fill="#fff" fill-opacity="0.78"/><circle cx="421.7" cy="30.4" r="0.7" fill="#fff" fill-opacity="0.60"/><circle cx="673.0" cy="213.5" r="0.4" fill="#fff" fill-opacity="0.42"/><circle cx="721.3" cy="402.1" r="0.7" fill="#fff" fill-opacity="0.62"/><circle cx="606.2" cy="382.9" r="0.7" fill="#fff" fill-opacity="0.61"/><circle cx="173.2" cy="323.7" r="0.4" fill="#fff" fill-opacity="0.79"/><circle cx="947.8" cy="172.7" r="0.4" fill="#fff" fill-opacity="0.95"/><circle cx="376.3" cy="142.0" r="0.7" fill="#fff" fill-opacity="0.85"/><circle cx="151.2" cy="94.9" r="0.4" fill="#fff" fill-opacity="0.72"/><circle cx="19.8" cy="213.7" r="0.5" fill="#fff" fill-opacity="0.72"/><circle cx="70.4" cy="292.8" r="0.6" fill="#fff" fill-opacity="0.66"/><circle cx="70.1" cy="297.1" r="0.7" fill="#fff" fill-opacity="0.90"/><circle cx="179.5" cy="175.0" r="0.4" fill="#fff" fill-opacity="0.92"/><circle cx="186.3" cy="143.8" r="0.9" fill="#fff" fill-opacity="0.99"/><circle cx="238.3" cy="231.7" r="0.9" fill="#fff" fill-opacity="0.52"/><circle cx="400.7" cy="109.7" r="0.6" fill="#fff" fill-opacity="0.71"/><circle cx="654.1" cy="180.7" r="0.4" fill="#fff" fill-opacity="0.55"/><circle cx="318.1" cy="163.5" r="0.7" fill="#fff" fill-opacity="0.91"/><circle cx="329.1" cy="86.9" r="0.4" fill="#fff" fill-opacity="0.48"/><circle cx="834.9" cy="401.0" r="0.7" fill="#fff" fill-opacity="0.81"/><circle cx="180.8" cy="400.1" r="0.6" fill="#fff" fill-opacity="0.48"/><circle cx="1176.8" cy="239.1" r="0.4" fill="#fff" fill-opacity="0.82"/><circle cx="10.9" cy="29.1" r="0.9" fill="#fff" fill-opacity="0.89"/><circle cx="45.2" cy="94.5" r="0.7" fill="#fff" fill-opacity="0.54"/><circle cx="909.5" cy="345.1" r="0.9" fill="#fff" fill-opacity="0.75"/><circle cx="519.7" cy="313.0" r="0.5" fill="#fff" fill-opacity="0.92"/><circle cx="73.9" cy="186.5" r="0.4" fill="#fff" fill-opacity="0.38"/><circle cx="1104.2" cy="30.9" r="0.9" fill="#fff" fill-opacity="0.67"/><circle cx="18.2" cy="310.1" r="0.5" fill="#fff" fill-opacity="0.67"/><circle cx="862.5" cy="290.2" r="0.6" fill="#fff" fill-opacity="0.87"/><circle cx="684.1" cy="68.4" r="0.5" fill="#fff" fill-opacity="0.69"/><circle cx="596.0" cy="86.7" r="0.4" fill="#fff" fill-opacity="0.97"/><circle cx="530.8" cy="283.3" r="0.6" fill="#fff" fill-opacity="0.81"/><circle cx="566.3" cy="182.6" r="0.4" fill="#fff" fill-opacity="0.95"/><circle cx="170.7" cy="68.9" r="0.7" fill="#fff" fill-opacity="0.54"/><circle cx="297.8" cy="250.3" r="0.6" fill="#fff" fill-opacity="0.81"/><circle cx="920.8" cy="133.1" r="0.6" fill="#fff" fill-opacity="0.56"/><circle cx="1076.9" cy="65.3" r="0.5" fill="#fff" fill-opacity="0.60"/><circle cx="42.2" cy="163.4" r="0.6" fill="#fff" fill-opacity="0.50"/><circle cx="698.5" cy="40.2" r="0.7" fill="#fff" fill-opacity="0.45"/><circle cx="235.5" cy="143.3" r="0.7" fill="#fff" fill-opacity="0.42"/><circle cx="1060.5" cy="52.5" r="0.5" fill="#fff" fill-opacity="1.00"/><circle cx="1202.5" cy="226.3" r="0.6" fill="#fff" fill-opacity="0.67"/><circle cx="22.7" cy="336.0" r="0.4" fill="#fff" fill-opacity="0.48"/><circle cx="358.4" cy="130.3" r="0.9" fill="#fff" fill-opacity="0.70"/><circle cx="113.2" cy="60.1" r="0.6" fill="#fff" fill-opacity="0.85"/><circle cx="979.3" cy="388.8" r="0.9" fill="#fff" fill-opacity="0.95"/><circle cx="41.5" cy="257.5" r="0.4" fill="#fff" fill-opacity="0.57"/><circle cx="1208.8" cy="282.3" r="0.4" fill="#fff" fill-opacity="0.46"/><circle cx="448.3" cy="206.8" r="0.6" fill="#fff" fill-opacity="0.83"/><circle cx="228.9" cy="338.7" r="0.6" fill="#fff" fill-opacity="0.88"/><circle cx="926.3" cy="195.6" r="0.9" fill="#fff" fill-opacity="0.42"/><circle cx="206.6" cy="169.1" r="0.4" fill="#fff" fill-opacity="0.37"/><circle cx="657.1" cy="41.8" r="0.5" fill="#fff" fill-opacity="0.62"/><circle cx="1071.6" cy="32.8" r="0.5" fill="#fff" fill-opacity="0.58"/><circle cx="848.3" cy="38.7" r="0.4" fill="#fff" fill-opacity="0.90"/><circle cx="1118.0" cy="206.5" r="0.5" fill="#fff" fill-opacity="0.52"/><circle cx="136.4" cy="102.6" r="0.5" fill="#fff" fill-opacity="0.67"/><circle cx="686.1" cy="50.6" r="0.7" fill="#fff" fill-opacity="0.51"/><circle cx="727.5" cy="18.1" r="0.6" fill="#fff" fill-opacity="0.59"/><circle cx="253.1" cy="173.6" r="0.5" fill="#fff" fill-opacity="0.99"/><circle cx="1162.8" cy="312.4" r="0.9" fill="#fff" fill-opacity="0.68"/><circle cx="1140.0" cy="6.5" r="0.4" fill="#fff" fill-opacity="0.67"/><circle cx="1012.5" cy="245.3" r="0.5" fill="#fff" fill-opacity="0.41"/><circle cx="219.2" cy="361.7" r="0.4" fill="#fff" fill-opacity="0.63"/><circle cx="799.0" cy="47.1" r="0.9" fill="#fff" fill-opacity="0.93"/><circle cx="107.9" cy="248.8" r="0.5" fill="#fff" fill-opacity="0.51"/><circle cx="991.9" cy="220.6" r="0.4" fill="#fff" fill-opacity="0.88"/><circle cx="93.5" cy="145.0" r="0.4" fill="#fff" fill-opacity="0.38"/><circle cx="791.4" cy="297.5" r="0.6" fill="#fff" fill-opacity="0.57"/><circle cx="1037.5" cy="198.6" r="0.5" fill="#fff" fill-opacity="0.36"/><circle cx="1203.6" cy="177.1" r="0.7" fill="#fff" fill-opacity="0.37"/><circle cx="1009.4" cy="63.7" r="0.9" fill="#fff" fill-opacity="0.79"/><circle cx="193.6" cy="148.1" r="0.5" fill="#fff" fill-opacity="0.48"/><circle cx="1183.9" cy="295.0" r="0.4" fill="#fff" fill-opacity="1.00"/><circle cx="1013.2" cy="206.3" r="0.7" fill="#fff" fill-opacity="0.69"/><circle cx="422.4" cy="29.7" r="0.9" fill="#fff" fill-opacity="0.76"/><circle cx="254.8" cy="268.8" r="0.6" fill="#fff" fill-opacity="0.86"/><circle cx="1049.5" cy="301.3" r="0.5" fill="#fff" fill-opacity="0.69"/><circle cx="1230.0" cy="206.9" r="0.6" fill="#fff" fill-opacity="0.62"/><circle cx="1091.9" cy="291.3" r="0.5" fill="#fff" fill-opacity="0.93"/><circle cx="1215.2" cy="349.6" r="0.6" fill="#fff" fill-opacity="0.69"/><circle cx="1136.6" cy="346.6" r="0.6" fill="#fff" fill-opacity="0.47"/><circle cx="1270.1" cy="223.3" r="0.6" fill="#fff" fill-opacity="0.34"/><circle cx="1272.0" cy="330.7" r="0.5" fill="#fff" fill-opacity="0.81"/><circle cx="1241.3" cy="100.8" r="0.6" fill="#fff" fill-opacity="0.59"/><circle cx="1086.1" cy="206.9" r="0.6" fill="#fff" fill-opacity="0.92"/><circle cx="1038.8" cy="278.7" r="0.5" fill="#fff" fill-opacity="0.85"/><circle cx="1199.4" cy="395.5" r="0.5" fill="#fff" fill-opacity="0.55"/><circle cx="1048.1" cy="274.0" r="0.5" fill="#fff" fill-opacity="0.75"/><circle cx="1255.7" cy="179.2" r="0.5" fill="#fff" fill-opacity="0.25"/><circle cx="1150.2" cy="6.9" r="0.4" fill="#fff" fill-opacity="0.91"/><circle cx="1146.7" cy="172.5" r="0.5" fill="#fff" fill-opacity="0.59"/><circle cx="1111.2" cy="89.7" r="0.5" fill="#fff" fill-opacity="0.55"/><circle cx="1144.3" cy="13.7" r="0.5" fill="#fff" fill-opacity="0.32"/><circle cx="1094.8" cy="294.5" r="0.5" fill="#fff" fill-opacity="0.56"/><circle cx="1162.7" cy="101.5" r="0.4" fill="#fff" fill-opacity="0.76"/><circle cx="1036.5" cy="345.6" r="0.4" fill="#fff" fill-opacity="0.54"/><circle cx="1110.5" cy="63.4" r="0.4" fill="#fff" fill-opacity="0.42"/><circle cx="1252.0" cy="256.3" r="0.5" fill="#fff" fill-opacity="0.48"/><circle cx="1106.9" cy="368.0" r="0.6" fill="#fff" fill-opacity="0.39"/><circle cx="1237.0" cy="68.1" r="0.6" fill="#fff" fill-opacity="0.26"/><circle cx="1242.8" cy="43.6" r="0.4" fill="#fff" fill-opacity="0.59"/><circle cx="1231.6" cy="105.3" r="0.5" fill="#fff" fill-opacity="0.76"/><circle cx="1276.1" cy="308.5" r="0.6" fill="#fff" fill-opacity="0.75"/><circle cx="1060.3" cy="316.4" r="0.5" fill="#fff" fill-opacity="0.75"/><circle cx="1045.3" cy="262.1" r="0.5" fill="#fff" fill-opacity="0.45"/><circle cx="1101.1" cy="128.2" r="0.6" fill="#fff" fill-opacity="0.72"/><circle cx="1121.5" cy="219.3" r="0.6" fill="#fff" fill-opacity="0.29"/><circle cx="1192.3" cy="207.2" r="0.6" fill="#fff" fill-opacity="0.98"/><circle cx="1040.5" cy="350.6" r="0.6" fill="#fff" fill-opacity="0.34"/><circle cx="1121.8" cy="130.7" r="0.6" fill="#fff" fill-opacity="0.92"/><circle cx="1211.1" cy="314.9" r="0.4" fill="#fff" fill-opacity="0.96"/><circle cx="1148.5" cy="3.0" r="0.5" fill="#fff" fill-opacity="0.36"/><circle cx="1175.2" cy="242.2" r="0.4" fill="#fff" fill-opacity="1.00"/><circle cx="1070.1" cy="247.6" r="0.5" fill="#fff" fill-opacity="0.72"/><circle cx="1087.4" cy="324.6" r="0.4" fill="#fff" fill-opacity="0.57"/><circle cx="1274.5" cy="272.5" r="0.6" fill="#fff" fill-opacity="0.73"/><circle cx="1151.2" cy="409.3" r="0.5" fill="#fff" fill-opacity="0.77"/><circle cx="1096.5" cy="68.0" r="0.6" fill="#fff" fill-opacity="0.62"/><circle cx="1038.3" cy="223.6" r="0.4" fill="#fff" fill-opacity="0.40"/><circle cx="1231.1" cy="25.9" r="0.5" fill="#fff" fill-opacity="0.80"/><circle cx="1069.4" cy="131.0" r="0.4" fill="#fff" fill-opacity="0.69"/><circle cx="1272.8" cy="326.4" r="0.5" fill="#fff" fill-opacity="0.97"/><circle cx="1073.5" cy="129.9" r="0.5" fill="#fff" fill-opacity="0.40"/><circle cx="1107.5" cy="184.1" r="0.4" fill="#fff" fill-opacity="0.76"/><circle cx="1117.9" cy="134.2" r="0.5" fill="#fff" fill-opacity="0.45"/><circle cx="1077.8" cy="381.7" r="0.5" fill="#fff" fill-opacity="0.63"/><circle cx="1129.7" cy="67.1" r="0.5" fill="#fff" fill-opacity="0.28"/><circle cx="1096.8" cy="225.0" r="0.6" fill="#fff" fill-opacity="0.67"/><circle cx="1196.3" cy="316.1" r="0.5" fill="#fff" fill-opacity="0.54"/><circle cx="1208.2" cy="166.1" r="0.5" fill="#fff" fill-opacity="0.89"/><circle cx="1056.8" cy="188.9" r="0.4" fill="#fff" fill-opacity="0.28"/><circle cx="1236.0" cy="237.9" r="0.5" fill="#fff" fill-opacity="0.70"/><circle cx="1117.4" cy="411.8" r="0.4" fill="#fff" fill-opacity="0.91"/><circle cx="1050.5" cy="253.2" r="0.5" fill="#fff" fill-opacity="0.88"/><circle cx="1206.8" cy="390.6" r="0.4" fill="#fff" fill-opacity="0.73"/><circle cx="1271.7" cy="266.2" r="0.6" fill="#fff" fill-opacity="0.34"/><circle cx="1128.6" cy="353.5" r="0.6" fill="#fff" fill-opacity="0.88"/><circle cx="1127.6" cy="209.9" r="0.5" fill="#fff" fill-opacity="0.51"/><circle cx="1073.2" cy="366.1" r="0.6" fill="#fff" fill-opacity="0.80"/><circle cx="1131.1" cy="389.4" r="0.5" fill="#fff" fill-opacity="0.35"/><circle cx="1112.0" cy="27.7" r="0.5" fill="#fff" fill-opacity="0.30"/><circle cx="1026.8" cy="241.0" r="0.4" fill="#fff" fill-opacity="0.68"/><circle cx="1128.5" cy="241.0" r="0.5" fill="#fff" fill-opacity="0.84"/><circle cx="1198.6" cy="358.3" r="0.4" fill="#fff" fill-opacity="0.36"/><circle cx="1196.6" cy="316.7" r="0.6" fill="#fff" fill-opacity="0.34"/><circle cx="1097.8" cy="14.1" r="0.6" fill="#fff" fill-opacity="0.54"/><circle cx="1099.0" cy="271.9" r="0.6" fill="#fff" fill-opacity="0.54"/><circle cx="1253.7" cy="299.0" r="0.6" fill="#fff" fill-opacity="0.70"/><circle cx="1155.3" cy="255.2" r="0.4" fill="#fff" fill-opacity="0.48"/><circle cx="1117.4" cy="239.0" r="0.4" fill="#fff" fill-opacity="0.52"/><circle cx="1203.7" cy="30.3" r="0.5" fill="#fff" fill-opacity="0.41"/><circle cx="1142.3" cy="320.9" r="0.5" fill="#fff" fill-opacity="0.46"/><circle cx="1041.0" cy="187.2" r="0.6" fill="#fff" fill-opacity="0.70"/><circle cx="1034.2" cy="225.9" r="0.5" fill="#fff" fill-opacity="0.33"/><circle cx="1083.0" cy="264.4" r="0.5" fill="#fff" fill-opacity="0.97"/><circle cx="1160.8" cy="96.7" r="0.6" fill="#fff" fill-opacity="0.85"/><circle cx="1079.1" cy="352.6" r="0.6" fill="#fff" fill-opacity="0.65"/><circle cx="1033.7" cy="326.8" r="0.4" fill="#fff" fill-opacity="0.86"/><circle cx="1094.1" cy="157.3" r="0.6" fill="#fff" fill-opacity="0.46"/><circle cx="1048.7" cy="47.2" r="0.5" fill="#fff" fill-opacity="0.63"/><circle cx="1175.5" cy="95.0" r="0.4" fill="#fff" fill-opacity="0.85"/><circle cx="1270.2" cy="138.4" r="0.5" fill="#fff" fill-opacity="0.30"/><circle cx="1147.4" cy="56.2" r="0.5" fill="#fff" fill-opacity="0.98"/><circle cx="1249.6" cy="259.4" r="0.4" fill="#fff" fill-opacity="0.51"/><circle cx="1074.2" cy="169.2" r="0.5" fill="#fff" fill-opacity="0.82"/><circle cx="1045.4" cy="376.9" r="0.4" fill="#fff" fill-opacity="0.58"/><circle cx="1076.2" cy="295.6" r="0.4" fill="#fff" fill-opacity="0.83"/><circle cx="1077.1" cy="317.3" r="0.5" fill="#fff" fill-opacity="0.81"/><circle cx="1266.9" cy="386.4" r="0.6" fill="#fff" fill-opacity="0.71"/><circle cx="1030.0" cy="148.6" r="0.5" fill="#fff" fill-opacity="0.26"/><circle cx="1245.3" cy="303.2" r="0.6" fill="#fff" fill-opacity="0.65"/><circle cx="1167.7" cy="263.6" r="0.6" fill="#fff" fill-opacity="0.72"/><circle cx="1277.8" cy="128.4" r="0.4" fill="#fff" fill-opacity="0.80"/><circle cx="1201.6" cy="176.8" r="0.4" fill="#fff" fill-opacity="0.85"/><circle cx="1141.6" cy="42.9" r="0.4" fill="#fff" fill-opacity="0.89"/><circle cx="1118.4" cy="371.4" r="0.5" fill="#fff" fill-opacity="0.99"/><circle cx="1257.6" cy="333.8" r="0.5" fill="#fff" fill-opacity="0.92"/><circle cx="1274.0" cy="357.0" r="0.6" fill="#fff" fill-opacity="0.67"/><circle cx="1155.0" cy="87.9" r="0.5" fill="#fff" fill-opacity="0.74"/><circle cx="1264.1" cy="81.1" r="0.5" fill="#fff" fill-opacity="0.96"/><circle cx="1275.1" cy="183.4" r="0.6" fill="#fff" fill-opacity="0.79"/><circle cx="1066.9" cy="376.5" r="0.5" fill="#fff" fill-opacity="0.35"/><circle cx="1029.3" cy="89.9" r="0.6" fill="#fff" fill-opacity="0.65"/><circle cx="1033.0" cy="341.5" r="0.4" fill="#fff" fill-opacity="0.60"/><circle cx="1037.0" cy="373.4" r="0.6" fill="#fff" fill-opacity="0.94"/><circle cx="1244.1" cy="142.1" r="0.6" fill="#fff" fill-opacity="0.91"/><circle cx="1149.1" cy="268.6" r="0.4" fill="#fff" fill-opacity="0.26"/><circle cx="1077.9" cy="148.9" r="0.4" fill="#fff" fill-opacity="0.32"/><circle cx="1248.9" cy="396.8" r="0.5" fill="#fff" fill-opacity="0.59"/><circle cx="1174.7" cy="267.3" r="0.6" fill="#fff" fill-opacity="0.94"/><circle cx="1219.5" cy="239.5" r="0.6" fill="#fff" fill-opacity="0.29"/><circle cx="1145.5" cy="168.1" r="0.6" fill="#fff" fill-opacity="0.90"/><circle cx="1277.4" cy="301.1" r="0.5" fill="#fff" fill-opacity="0.77"/><circle cx="1145.8" cy="59.5" r="0.5" fill="#fff" fill-opacity="0.70"/><circle cx="1041.9" cy="100.2" r="0.4" fill="#fff" fill-opacity="0.25"/><circle cx="1169.8" cy="313.0" r="0.4" fill="#fff" fill-opacity="0.73"/><circle cx="1214.4" cy="16.1" r="0.4" fill="#fff" fill-opacity="0.93"/><circle cx="1076.8" cy="0.4" r="0.5" fill="#fff" fill-opacity="0.29"/><circle cx="1087.1" cy="390.9" r="0.4" fill="#fff" fill-opacity="0.83"/><circle cx="1037.2" cy="233.6" r="0.6" fill="#fff" fill-opacity="0.94"/><circle cx="1092.8" cy="64.4" r="0.4" fill="#fff" fill-opacity="0.61"/><circle cx="1268.9" cy="319.0" r="0.6" fill="#fff" fill-opacity="0.32"/><circle cx="1062.4" cy="222.2" r="0.6" fill="#fff" fill-opacity="0.63"/><circle cx="1052.9" cy="330.5" r="0.5" fill="#fff" fill-opacity="0.94"/><circle cx="1026.6" cy="357.6" r="0.6" fill="#fff" fill-opacity="0.74"/><circle cx="1047.7" cy="235.9" r="0.6" fill="#fff" fill-opacity="0.70"/><circle cx="1229.1" cy="32.6" r="0.4" fill="#fff" fill-opacity="0.75"/><circle cx="1182.2" cy="192.0" r="0.6" fill="#fff" fill-opacity="0.26"/><circle cx="1215.2" cy="10.1" r="0.6" fill="#fff" fill-opacity="0.86"/><circle cx="1142.3" cy="51.3" r="0.6" fill="#fff" fill-opacity="0.80"/><circle cx="1196.6" cy="413.0" r="0.6" fill="#fff" fill-opacity="0.98"/><circle cx="1164.7" cy="148.1" r="0.4" fill="#fff" fill-opacity="0.32"/><circle cx="1086.7" cy="370.2" r="0.4" fill="#fff" fill-opacity="0.32"/><circle cx="1095.6" cy="129.9" r="0.5" fill="#fff" fill-opacity="0.36"/><circle cx="1180.0" cy="411.0" r="0.4" fill="#fff" fill-opacity="0.26"/><circle cx="1045.0" cy="47.7" r="0.6" fill="#fff" fill-opacity="0.83"/><circle cx="1080.3" cy="161.9" r="0.5" fill="#fff" fill-opacity="0.94"/><circle cx="1171.9" cy="88.5" r="0.6" fill="#fff" fill-opacity="0.81"/><circle cx="1046.3" cy="9.1" r="0.4" fill="#fff" fill-opacity="0.79"/><circle cx="1033.8" cy="286.0" r="0.5" fill="#fff" fill-opacity="0.85"/><circle cx="1039.9" cy="259.9" r="0.5" fill="#fff" fill-opacity="0.58"/><circle cx="1205.4" cy="106.1" r="0.5" fill="#fff" fill-opacity="0.88"/><circle cx="1033.2" cy="160.6" r="0.4" fill="#fff" fill-opacity="0.58"/><circle cx="1275.1" cy="274.7" r="0.5" fill="#fff" fill-opacity="0.82"/><circle cx="1238.6" cy="417.6" r="0.5" fill="#fff" fill-opacity="0.46"/><circle cx="1089.4" cy="173.2" r="0.4" fill="#fff" fill-opacity="0.51"/><circle cx="1164.2" cy="149.9" r="0.5" fill="#fff" fill-opacity="0.25"/><circle cx="1221.8" cy="100.3" r="0.5" fill="#fff" fill-opacity="0.85"/><circle cx="1161.1" cy="44.0" r="0.5" fill="#fff" fill-opacity="0.57"/><circle cx="1111.6" cy="27.0" r="0.4" fill="#fff" fill-opacity="0.97"/><circle cx="1066.9" cy="223.0" r="0.6" fill="#fff" fill-opacity="0.75"/><circle cx="1088.2" cy="385.3" r="0.6" fill="#fff" fill-opacity="0.77"/><circle cx="1271.7" cy="37.6" r="0.4" fill="#fff" fill-opacity="0.41"/><circle cx="1217.8" cy="372.0" r="0.6" fill="#fff" fill-opacity="0.45"/><circle cx="1207.8" cy="415.7" r="0.4" fill="#fff" fill-opacity="0.71"/><circle cx="1182.0" cy="69.9" r="0.6" fill="#fff" fill-opacity="0.46"/><circle cx="555.8" cy="23.9" r="0.4" fill="#fff" fill-opacity="0.32"/><circle cx="922.7" cy="44.9" r="0.6" fill="#fff" fill-opacity="0.97"/><circle cx="750.6" cy="41.4" r="0.6" fill="#fff" fill-opacity="0.30"/><circle cx="306.4" cy="27.4" r="0.4" fill="#fff" fill-opacity="0.30"/><circle cx="305.7" cy="1.0" r="0.5" fill="#fff" fill-opacity="0.31"/><circle cx="684.2" cy="50.6" r="0.6" fill="#fff" fill-opacity="0.98"/><circle cx="784.8" cy="19.1" r="0.5" fill="#fff" fill-opacity="0.38"/><circle cx="331.3" cy="21.2" r="0.5" fill="#fff" fill-opacity="0.77"/><circle cx="387.7" cy="69.3" r="0.4" fill="#fff" fill-opacity="0.90"/><circle cx="609.6" cy="22.6" r="0.4" fill="#fff" fill-opacity="0.27"/><circle cx="893.8" cy="15.8" r="0.4" fill="#fff" fill-opacity="0.85"/><circle cx="771.8" cy="19.4" r="0.4" fill="#fff" fill-opacity="0.88"/><circle cx="310.1" cy="6.3" r="0.6" fill="#fff" fill-opacity="0.75"/><circle cx="494.8" cy="18.4" r="0.4" fill="#fff" fill-opacity="0.36"/><circle cx="329.0" cy="68.8" r="0.5" fill="#fff" fill-opacity="0.44"/><circle cx="322.7" cy="40.9" r="0.4" fill="#fff" fill-opacity="0.30"/><circle cx="265.4" cy="59.7" r="0.4" fill="#fff" fill-opacity="0.95"/><circle cx="528.3" cy="38.0" r="0.4" fill="#fff" fill-opacity="0.35"/><circle cx="862.3" cy="17.6" r="0.5" fill="#fff" fill-opacity="0.37"/><circle cx="766.0" cy="61.1" r="0.4" fill="#fff" fill-opacity="0.46"/><circle cx="548.0" cy="53.5" r="0.4" fill="#fff" fill-opacity="0.74"/><circle cx="938.5" cy="53.4" r="0.5" fill="#fff" fill-opacity="0.43"/><circle cx="943.3" cy="18.4" r="0.4" fill="#fff" fill-opacity="0.29"/><circle cx="766.3" cy="58.5" r="0.4" fill="#fff" fill-opacity="0.46"/><circle cx="618.8" cy="34.1" r="0.4" fill="#fff" fill-opacity="0.59"/><circle cx="803.3" cy="6.6" r="0.4" fill="#fff" fill-opacity="0.61"/><circle cx="966.6" cy="63.7" r="0.5" fill="#fff" fill-opacity="0.58"/><circle cx="345.3" cy="4.8" r="0.5" fill="#fff" fill-opacity="0.58"/><circle cx="438.6" cy="23.7" r="0.4" fill="#fff" fill-opacity="0.30"/><circle cx="425.7" cy="52.1" r="0.6" fill="#fff" fill-opacity="0.71"/><circle cx="1025.9" cy="65.0" r="0.5" fill="#fff" fill-opacity="0.33"/><circle cx="982.5" cy="36.7" r="0.4" fill="#fff" fill-opacity="0.64"/><circle cx="648.1" cy="22.1" r="0.4" fill="#fff" fill-opacity="0.31"/><circle cx="458.8" cy="64.7" r="0.5" fill="#fff" fill-opacity="0.84"/><circle cx="355.7" cy="56.5" r="0.6" fill="#fff" fill-opacity="0.49"/><circle cx="412.5" cy="46.4" r="0.5" fill="#fff" fill-opacity="0.30"/><circle cx="797.1" cy="33.2" r="0.5" fill="#fff" fill-opacity="0.38"/><circle cx="262.4" cy="45.7" r="0.6" fill="#fff" fill-opacity="0.93"/><circle cx="750.8" cy="48.1" r="0.4" fill="#fff" fill-opacity="0.65"/><circle cx="434.7" cy="34.9" r="0.6" fill="#fff" fill-opacity="0.35"/><circle cx="535.4" cy="27.1" r="0.5" fill="#fff" fill-opacity="0.81"/><circle cx="915.8" cy="25.7" r="0.6" fill="#fff" fill-opacity="0.39"/><circle cx="429.2" cy="41.9" r="0.6" fill="#fff" fill-opacity="0.31"/><circle cx="421.5" cy="2.5" r="0.5" fill="#fff" fill-opacity="0.98"/><circle cx="901.9" cy="21.3" r="0.5" fill="#fff" fill-opacity="0.69"/><circle cx="979.2" cy="28.1" r="0.6" fill="#fff" fill-opacity="0.37"/><circle cx="531.9" cy="33.9" r="0.4" fill="#fff" fill-opacity="0.61"/><circle cx="649.0" cy="66.4" r="0.5" fill="#fff" fill-opacity="0.75"/><circle cx="417.9" cy="63.4" r="0.4" fill="#fff" fill-opacity="0.88"/><circle cx="409.9" cy="70.0" r="0.5" fill="#fff" fill-opacity="0.45"/><circle cx="1006.7" cy="52.9" r="0.4" fill="#fff" fill-opacity="0.56"/><circle cx="518.9" cy="46.8" r="0.4" fill="#fff" fill-opacity="0.68"/><circle cx="848.5" cy="16.7" r="0.4" fill="#fff" fill-opacity="0.37"/><circle cx="880.7" cy="42.5" r="0.5" fill="#fff" fill-opacity="0.67"/><circle cx="803.5" cy="9.6" r="0.4" fill="#fff" fill-opacity="0.67"/><circle cx="465.4" cy="29.1" r="0.4" fill="#fff" fill-opacity="1.00"/><circle cx="358.4" cy="22.5" r="0.4" fill="#fff" fill-opacity="0.38"/><circle cx="580.4" cy="5.6" r="0.5" fill="#fff" fill-opacity="0.84"/><circle cx="449.5" cy="39.9" r="0.4" fill="#fff" fill-opacity="0.90"/><circle cx="992.8" cy="18.8" r="0.6" fill="#fff" fill-opacity="0.56"/><circle cx="293.8" cy="64.0" r="0.4" fill="#fff" fill-opacity="0.98"/><circle cx="951.9" cy="4.9" r="0.4" fill="#fff" fill-opacity="0.90"/><circle cx="578.3" cy="37.1" r="0.5" fill="#fff" fill-opacity="0.86"/><circle cx="758.4" cy="35.9" r="0.4" fill="#fff" fill-opacity="0.58"/><circle cx="639.7" cy="37.1" r="0.6" fill="#fff" fill-opacity="0.85"/><circle cx="947.9" cy="67.4" r="0.4" fill="#fff" fill-opacity="0.58"/><circle cx="711.2" cy="17.7" r="0.5" fill="#fff" fill-opacity="0.39"/><circle cx="788.3" cy="17.9" r="0.4" fill="#fff" fill-opacity="0.56"/><circle cx="992.3" cy="18.0" r="0.4" fill="#fff" fill-opacity="0.78"/><circle cx="298.1" cy="47.8" r="0.4" fill="#fff" fill-opacity="0.75"/><circle cx="871.3" cy="0.7" r="0.5" fill="#fff" fill-opacity="0.51"/><circle cx="841.3" cy="66.9" r="0.4" fill="#fff" fill-opacity="0.60"/><circle cx="504.3" cy="68.0" r="0.5" fill="#fff" fill-opacity="0.32"/><circle cx="1003.6" cy="38.0" r="0.5" fill="#fff" fill-opacity="0.97"/><circle cx="948.9" cy="16.3" r="0.6" fill="#fff" fill-opacity="0.78"/><circle cx="547.4" cy="34.6" r="0.5" fill="#fff" fill-opacity="0.35"/><circle cx="425.8" cy="15.0" r="0.5" fill="#fff" fill-opacity="0.33"/><circle cx="647.6" cy="61.9" r="0.6" fill="#fff" fill-opacity="0.57"/><circle cx="314.1" cy="40.8" r="0.5" fill="#fff" fill-opacity="0.68"/><circle cx="528.6" cy="49.3" r="0.5" fill="#fff" fill-opacity="0.49"/><circle cx="880.4" cy="48.5" r="0.6" fill="#fff" fill-opacity="0.76"/><circle cx="378.2" cy="25.9" r="0.6" fill="#fff" fill-opacity="0.83"/><circle cx="899.0" cy="44.9" r="0.6" fill="#fff" fill-opacity="0.44"/><circle cx="711.2" cy="53.8" r="0.5" fill="#fff" fill-opacity="0.82"/><circle cx="486.3" cy="17.9" r="0.4" fill="#fff" fill-opacity="0.70"/><circle cx="909.9" cy="61.3" r="0.6" fill="#fff" fill-opacity="0.28"/><circle cx="946.5" cy="41.7" r="0.5" fill="#fff" fill-opacity="0.79"/><circle cx="464.3" cy="4.9" r="0.4" fill="#fff" fill-opacity="0.88"/><circle cx="320.2" cy="17.4" r="0.4" fill="#fff" fill-opacity="0.42"/><circle cx="458.7" cy="49.8" r="0.4" fill="#fff" fill-opacity="0.26"/><circle cx="342.2" cy="65.4" r="0.4" fill="#fff" fill-opacity="0.36"/><circle cx="512.9" cy="36.6" r="0.5" fill="#fff" fill-opacity="0.47"/><circle cx="831.1" cy="61.2" r="0.5" fill="#fff" fill-opacity="0.29"/><circle cx="318.8" cy="11.4" r="0.4" fill="#fff" fill-opacity="0.30"/><circle cx="294.4" cy="68.1" r="0.4" fill="#fff" fill-opacity="0.84"/><circle cx="816.6" cy="23.9" r="0.5" fill="#fff" fill-opacity="0.36"/><circle cx="721.2" cy="69.3" r="0.4" fill="#fff" fill-opacity="0.81"/><circle cx="901.7" cy="29.6" r="0.5" fill="#fff" fill-opacity="0.79"/><circle cx="431.1" cy="55.8" r="0.5" fill="#fff" fill-opacity="0.32"/><circle cx="706.6" cy="13.4" r="0.6" fill="#fff" fill-opacity="0.59"/><circle cx="615.6" cy="57.0" r="0.6" fill="#fff" fill-opacity="0.32"/><circle cx="766.2" cy="39.6" r="0.4" fill="#fff" fill-opacity="0.26"/><circle cx="974.7" cy="15.1" r="0.6" fill="#fff" fill-opacity="0.59"/><circle cx="833.6" cy="35.1" r="0.6" fill="#fff" fill-opacity="0.65"/><circle cx="813.3" cy="2.2" r="0.6" fill="#fff" fill-opacity="0.27"/><circle cx="649.9" cy="14.8" r="0.6" fill="#fff" fill-opacity="0.77"/><circle cx="728.6" cy="63.1" r="0.4" fill="#fff" fill-opacity="0.99"/><circle cx="1022.4" cy="62.9" r="0.4" fill="#fff" fill-opacity="0.37"/><circle cx="428.7" cy="54.0" r="0.6" fill="#fff" fill-opacity="0.79"/><circle cx="994.1" cy="55.6" r="0.5" fill="#fff" fill-opacity="0.55"/><circle cx="657.7" cy="21.4" r="0.6" fill="#fff" fill-opacity="0.49"/><circle cx="480.6" cy="22.8" r="0.4" fill="#fff" fill-opacity="0.36"/><circle cx="973.2" cy="61.4" r="0.5" fill="#fff" fill-opacity="0.27"/><circle cx="501.5" cy="55.0" r="0.6" fill="#fff" fill-opacity="0.64"/><circle cx="534.1" cy="50.1" r="0.6" fill="#fff" fill-opacity="0.48"/><circle cx="311.9" cy="46.1" r="0.6" fill="#fff" fill-opacity="0.54"/><circle cx="627.3" cy="17.7" r="0.6" fill="#fff" fill-opacity="0.64"/><circle cx="601.1" cy="59.7" r="0.6" fill="#fff" fill-opacity="0.56"/><circle cx="798.4" cy="37.4" r="0.6" fill="#fff" fill-opacity="0.95"/><circle cx="731.7" cy="7.3" r="0.5" fill="#fff" fill-opacity="0.32"/><circle cx="251.0" cy="241.2" r="0.9" fill="#fff" fill-opacity="0.43"/><circle cx="186.2" cy="464.9" r="0.6" fill="#fff" fill-opacity="0.78"/><circle cx="241.0" cy="483.8" r="0.6" fill="#fff" fill-opacity="0.63"/><circle cx="132.2" cy="361.2" r="0.4" fill="#fff" fill-opacity="0.82"/><circle cx="224.5" cy="194.7" r="0.5" fill="#fff" fill-opacity="0.69"/><circle cx="219.4" cy="325.4" r="0.9" fill="#fff" fill-opacity="0.74"/><circle cx="177.7" cy="290.2" r="0.7" fill="#fff" fill-opacity="0.85"/><circle cx="180.5" cy="335.5" r="0.4" fill="#fff" fill-opacity="0.93"/><circle cx="185.0" cy="433.9" r="0.4" fill="#fff" fill-opacity="0.52"/><circle cx="225.2" cy="590.2" r="0.7" fill="#fff" fill-opacity="0.66"/><circle cx="255.8" cy="457.9" r="0.6" fill="#fff" fill-opacity="0.84"/><circle cx="175.8" cy="272.9" r="0.5" fill="#fff" fill-opacity="0.84"/><circle cx="250.0" cy="405.9" r="0.9" fill="#fff" fill-opacity="0.57"/><circle cx="155.2" cy="297.4" r="0.7" fill="#fff" fill-opacity="0.88"/><circle cx="218.7" cy="629.1" r="0.9" fill="#fff" fill-opacity="0.56"/><circle cx="144.5" cy="522.6" r="0.6" fill="#fff" fill-opacity="0.79"/><circle cx="213.7" cy="205.9" r="0.4" fill="#fff" fill-opacity="0.91"/><circle cx="201.6" cy="184.8" r="0.6" fill="#fff" fill-opacity="0.74"/><circle cx="247.7" cy="617.9" r="0.6" fill="#fff" fill-opacity="0.50"/><circle cx="165.1" cy="585.3" r="0.6" fill="#fff" fill-opacity="0.55"/><circle cx="207.7" cy="361.4" r="0.6" fill="#fff" fill-opacity="0.42"/><circle cx="152.3" cy="598.4" r="0.7" fill="#fff" fill-opacity="0.84"/><circle cx="229.3" cy="440.8" r="0.5" fill="#fff" fill-opacity="0.88"/><circle cx="211.5" cy="204.0" r="0.5" fill="#fff" fill-opacity="0.84"/><circle cx="235.4" cy="296.5" r="0.6" fill="#fff" fill-opacity="0.60"/><circle cx="239.2" cy="241.5" r="0.9" fill="#fff" fill-opacity="0.81"/><circle cx="215.3" cy="205.2" r="0.5" fill="#fff" fill-opacity="0.90"/><circle cx="244.8" cy="244.0" r="0.9" fill="#fff" fill-opacity="0.77"/><circle cx="126.8" cy="580.3" r="0.9" fill="#fff" fill-opacity="0.99"/><circle cx="254.4" cy="396.3" r="0.7" fill="#fff" fill-opacity="0.86"/><circle cx="243.5" cy="278.5" r="0.6" fill="#fff" fill-opacity="0.58"/><circle cx="129.1" cy="234.4" r="0.4" fill="#fff" fill-opacity="0.94"/><circle cx="123.6" cy="350.2" r="0.9" fill="#fff" fill-opacity="0.39"/><circle cx="225.2" cy="271.3" r="0.7" fill="#fff" fill-opacity="0.77"/><circle cx="164.2" cy="399.3" r="0.7" fill="#fff" fill-opacity="0.55"/><circle cx="209.8" cy="591.6" r="0.7" fill="#fff" fill-opacity="0.56"/><circle cx="169.0" cy="565.9" r="0.6" fill="#fff" fill-opacity="0.72"/><circle cx="135.0" cy="450.2" r="0.9" fill="#fff" fill-opacity="0.39"/><circle cx="183.4" cy="185.4" r="0.5" fill="#fff" fill-opacity="0.49"/><circle cx="171.5" cy="347.1" r="0.4" fill="#fff" fill-opacity="0.78"/><circle cx="200.7" cy="392.3" r="0.9" fill="#fff" fill-opacity="0.63"/><circle cx="221.9" cy="377.5" r="0.4" fill="#fff" fill-opacity="0.47"/><circle cx="161.3" cy="417.0" r="0.6" fill="#fff" fill-opacity="0.42"/><circle cx="232.7" cy="457.7" r="0.4" fill="#fff" fill-opacity="0.49"/><circle cx="245.4" cy="636.5" r="0.7" fill="#fff" fill-opacity="0.45"/><circle cx="210.4" cy="215.4" r="0.7" fill="#fff" fill-opacity="0.48"/><circle cx="162.9" cy="331.4" r="0.5" fill="#fff" fill-opacity="0.67"/><circle cx="226.8" cy="185.0" r="0.5" fill="#fff" fill-opacity="0.74"/><circle cx="173.7" cy="562.6" r="0.5" fill="#fff" fill-opacity="0.47"/><circle cx="249.2" cy="433.6" r="0.4" fill="#fff" fill-opacity="0.91"/><circle cx="171.4" cy="605.0" r="0.5" fill="#fff" fill-opacity="0.68"/><circle cx="248.0" cy="571.5" r="0.5" fill="#fff" fill-opacity="0.68"/><circle cx="252.4" cy="437.6" r="0.5" fill="#fff" fill-opacity="0.45"/><circle cx="182.2" cy="194.0" r="0.5" fill="#fff" fill-opacity="0.74"/><circle cx="156.8" cy="307.0" r="0.7" fill="#fff" fill-opacity="0.49"/><circle cx="209.2" cy="204.9" r="0.4" fill="#fff" fill-opacity="0.87"/><circle cx="248.3" cy="256.1" r="0.5" fill="#fff" fill-opacity="0.70"/><circle cx="153.0" cy="558.1" r="0.5" fill="#fff" fill-opacity="0.74"/><circle cx="248.4" cy="272.9" r="0.9" fill="#fff" fill-opacity="0.82"/><circle cx="135.6" cy="392.7" r="0.9" fill="#fff" fill-opacity="0.81"/><circle cx="158.7" cy="565.6" r="0.9" fill="#fff" fill-opacity="0.38"/><circle cx="254.1" cy="383.6" r="0.4" fill="#fff" fill-opacity="0.91"/><circle cx="247.5" cy="437.3" r="0.7" fill="#fff" fill-opacity="0.44"/><circle cx="185.3" cy="473.8" r="0.9" fill="#fff" fill-opacity="0.57"/><circle cx="228.9" cy="292.8" r="0.5" fill="#fff" fill-opacity="0.50"/><circle cx="243.4" cy="344.0" r="0.7" fill="#fff" fill-opacity="0.55"/><circle cx="143.0" cy="280.5" r="0.4" fill="#fff" fill-opacity="0.44"/><circle cx="203.7" cy="237.3" r="0.6" fill="#fff" fill-opacity="0.47"/><circle cx="188.1" cy="382.3" r="0.9" fill="#fff" fill-opacity="0.67"/><circle cx="254.2" cy="396.9" r="0.5" fill="#fff" fill-opacity="0.66"/><circle cx="192.3" cy="410.1" r="0.5" fill="#fff" fill-opacity="0.40"/><circle cx="219.6" cy="624.8" r="0.7" fill="#fff" fill-opacity="0.42"/><circle cx="224.2" cy="334.4" r="0.7" fill="#fff" fill-opacity="0.77"/><circle cx="186.1" cy="563.9" r="0.9" fill="#fff" fill-opacity="0.35"/><circle cx="240.6" cy="515.1" r="0.6" fill="#fff" fill-opacity="0.68"/><circle cx="221.1" cy="492.1" r="0.7" fill="#fff" fill-opacity="0.75"/><circle cx="142.2" cy="480.1" r="0.4" fill="#fff" fill-opacity="0.97"/><circle cx="140.6" cy="348.3" r="0.7" fill="#fff" fill-opacity="0.86"/><circle cx="203.8" cy="491.5" r="0.6" fill="#fff" fill-opacity="0.87"/><circle cx="142.2" cy="433.9" r="0.5" fill="#fff" fill-opacity="0.54"/><circle cx="139.3" cy="596.0" r="0.4" fill="#fff" fill-opacity="0.75"/><circle cx="234.5" cy="382.8" r="0.6" fill="#fff" fill-opacity="0.59"/><circle cx="247.1" cy="340.9" r="0.9" fill="#fff" fill-opacity="0.86"/><circle cx="166.2" cy="611.5" r="0.4" fill="#fff" fill-opacity="0.57"/><circle cx="175.0" cy="460.2" r="0.6" fill="#fff" fill-opacity="0.36"/><circle cx="233.6" cy="210.9" r="0.9" fill="#fff" fill-opacity="0.36"/><circle cx="246.6" cy="312.5" r="0.7" fill="#fff" fill-opacity="0.45"/><circle cx="218.0" cy="190.0" r="0.5" fill="#fff" fill-opacity="0.49"/><circle cx="224.6" cy="244.7" r="0.6" fill="#fff" fill-opacity="0.50"/><circle cx="128.2" cy="301.4" r="0.4" fill="#fff" fill-opacity="0.97"/><circle cx="1167.7" cy="678.9" r="0.4" fill="#fff" fill-opacity="0.82"/><circle cx="1067.1" cy="656.1" r="0.4" fill="#fff" fill-opacity="0.80"/><circle cx="1244.7" cy="534.2" r="0.4" fill="#fff" fill-opacity="0.70"/><circle cx="1207.2" cy="478.5" r="0.5" fill="#fff" fill-opacity="0.98"/><circle cx="1039.5" cy="445.1" r="0.4" fill="#fff" fill-opacity="0.23"/><circle cx="1112.0" cy="617.5" r="0.5" fill="#fff" fill-opacity="0.29"/><circle cx="1070.5" cy="478.8" r="0.9" fill="#fff" fill-opacity="0.49"/><circle cx="1265.3" cy="483.5" r="0.4" fill="#fff" fill-opacity="0.98"/>
<g filter="url(#tb2)">
<path fill="#121d28" d="M0 116 L25 124 L50 136 L75 150 L100 164 L125 178 L150 196 L166 220 L178 252 L188 290 L186 340 L178 372 L166 400 L150 440 L144 471 L120 501 L101 532 L86 562 L77 593 L67 623 L58 648 L50 660 L80 668 L120 655 L150 640 L262 640 L262 700 L0 700 Z"/><path fill="#141f2a" d="M110 500 L150 505 L160 520 L155 540 L140 560 L122 585 L118 570 L110 545 L100 530Z" fill-opacity="0.85"/>
<path fill="#131e28" d="M262 458 L251 477 L230 492 L211 507 L195 530 L178 556 L162 578 L156 611 L132 623 L101 636 L71 651 L60 700 L262 700 Z"/>
<path fill="#131d27" d="M1026 420 L1045 418 L1060 422 L1075 425 L1090 430 L1105 432 L1120 440 L1136 450 L1150 442 L1160 430 L1168 418 L1176 404 L1185 398 L1195 396 L1205 404 L1215 420 L1226 440 L1240 446 L1255 448 L1280 452 L1280 700 L1026 700 Z"/>
</g>
<rect x="200" y="645" width="830" height="55" fill="#131e28"/>
<g filter="url(#tb)" fill="#2a3648" fill-opacity="0.6"><ellipse cx="30" cy="560" rx="18" ry="30"/><ellipse cx="55" cy="480" rx="14" ry="22"/><ellipse cx="20" cy="640" rx="14" ry="20"/><ellipse cx="95" cy="440" rx="12" ry="18"/></g>
<path d="M1029 483 L1051 433 M1029 483 L1081 458 M1030 490 L1066 488 M1029 540 L1096 553 M1029 545 L1078 572 M1029 568 L1076 570" stroke="#485462" stroke-width="0.6" fill="none"/>
<g filter="url(#tb2)" fill="#9aa6b6"><path d="M407 649 L421 649 L419 662 L413 671 L409 664Z" fill-opacity="0.8"/><path d="M403 690 L410 682 L418 684 L414 692 L406 695Z" fill-opacity="0.7"/><path d="M449 652 L456 650 L454 664 L450 663Z" fill-opacity="0.5"/><path d="M519 680 L528 670 L534 672 L524 684Z" fill-opacity="0.65"/><path d="M639 676 L646 677 L644 681 L638 680Z" fill-opacity="0.6"/><path d="M630 651 L636 651 L634 657Z" fill-opacity="0.5"/></g>
</svg>

<svg class="a" style="left:15px;top:5px" width="22" height="20" viewBox="0 0 22 20">
<path d="M1 5 L6 4 L6 16 L1 15Z" fill="#d0d4d8"/><path d="M5 2 L20 0.5 L20 14 L5 15Z" fill="#e8ecf0"/><path d="M6.5 3.2 L18.8 2 L18.8 12.8 L6.5 13.6Z" fill="#1a3ad0"/><path d="M6.5 3.2 L11 2.8 L14 13.2 L6.5 13.6Z" fill="#3a6af0"/><ellipse cx="12" cy="18" rx="5" ry="1.8" fill="#d8dce0"/></svg>
<div class="t" style="left:4.00px;top:30.00px;font-size:7.52px;color:#f4f4f4;font-weight:bold;text-shadow:0 0 2px #000,1px 1px 1px #000;">Компьютер</div>
<svg class="a" style="left:68px;top:5px" width="17" height="21" viewBox="0 0 17 21">
<ellipse cx="8.5" cy="2.5" rx="7.8" ry="2" fill="#c8d0d8"/><path d="M0.7 2.5 L2.8 19 Q8.5 21.5 14.2 19 L16.3 2.5 Q8.5 5 0.7 2.5Z" fill="#7890a8" fill-opacity="0.9"/><path d="M3 5 Q8 8 11 18 L4 18Z" fill="#4a6a98" fill-opacity="0.7"/><path d="M3 15 Q8.5 17 14 15 L14 19 Q8.5 21 3 19Z" fill="#d0d8e0" fill-opacity="0.8"/></svg>
<div class="t" style="left:60.75px;top:30.00px;font-size:7.44px;color:#f4f4f4;font-weight:bold;text-shadow:0 0 2px #000,1px 1px 1px #000;">Корзина</div>
<svg class="a" style="left:15px;top:62px" width="17" height="22" viewBox="0 0 17 22">
<path d="M1 2 L6 0 L6 20 L1 21Z" fill="#c8a850"/><path d="M5 3 L16 2 L16 20 L5 21Z" fill="#f0d890"/><path d="M6 3 L16 2 L16 6 L6 7Z" fill="#fff0c0"/></svg>
<svg class="a" style="left:66px;top:62px" width="17" height="22" viewBox="0 0 17 22">
<path d="M1 2 L6 0 L6 20 L1 21Z" fill="#c8a850"/><path d="M5 3 L16 2 L16 20 L5 21Z" fill="#f0d890"/><path d="M6 3 L16 2 L16 6 L6 7Z" fill="#fff0c0"/></svg>
<div class="t" style="left:15.50px;top:88.00px;font-size:7.50px;color:#f4f4f4;font-weight:bold;text-shadow:0 0 2px #000,1px 1px 1px #000;">Игры</div>
<div class="t" style="left:53.75px;top:88.00px;font-size:7.59px;color:#f4f4f4;font-weight:bold;text-shadow:0 0 2px #000,1px 1px 1px #000;">Программы</div>
<svg class="a" style="left:17px;top:128px" width="18" height="13" viewBox="0 0 18 13">
<rect x="0" y="1" width="16" height="11" fill="#1a2028"/><rect x="1" y="2" width="14" height="9" fill="#c8d0d8"/><rect x="2" y="3" width="3" height="7" fill="#3a4048"/><rect x="8" y="4" width="5" height="5" fill="#e8eef4"/><rect x="16" y="0" width="1.5" height="2" fill="#ddd"/></svg>
<div class="t" style="left:4.00px;top:146.00px;font-size:7.23px;color:#f4f4f4;font-weight:bold;text-shadow:0 0 2px #000,1px 1px 1px #000;">capture1.jpg</div>
<div class="a" style="left:1181px;top:5px;width:82px;height:82px;background:linear-gradient(#f8f8f8,#e6e6e6 60%,#d8d8d8);border-radius:3px 3px 0 0;box-shadow:0 0 2px rgba(0,0,0,.6)"></div>
<svg class="a" style="left:1185px;top:12px" width="6" height="6" viewBox="0 0 6 6"><path d="M5 0 L0 3 L5 6Z" fill="#777"/></svg>
<svg class="a" style="left:1254px;top:12px" width="6" height="6" viewBox="0 0 6 6"><path d="M1 0 L6 3 L1 6Z" fill="#777"/></svg>
<div class="t" style="left:1211.80px;top:12.00px;font-size:6.38px;color:#444;">ноя 17</div>
<div class="a" style="left:1193.8px;top:21px;width:1px;height:53px;background:rgba(0,0,0,.06)"></div>
<div class="a" style="left:1205.2px;top:21px;width:1px;height:53px;background:rgba(0,0,0,.06)"></div>
<div class="a" style="left:1216.7px;top:21px;width:1px;height:53px;background:rgba(0,0,0,.06)"></div>
<div class="a" style="left:1228.2px;top:21px;width:1px;height:53px;background:rgba(0,0,0,.06)"></div>
<div class="a" style="left:1239.4px;top:21px;width:1px;height:53px;background:rgba(0,0,0,.06)"></div>
<div class="a" style="left:1250.8px;top:21px;width:1px;height:53px;background:rgba(0,0,0,.06)"></div>
<div class="t" style="left:1185.76px;top:24.00px;font-size:6.50px;color:#555;">П</div>
<div class="t" style="left:1197.44px;top:24.00px;font-size:6.50px;color:#555;">В</div>
<div class="t" style="left:1208.41px;top:24.00px;font-size:6.50px;color:#e0600a;">С</div>
<div class="t" style="left:1220.44px;top:24.00px;font-size:6.50px;color:#555;">Ч</div>
<div class="t" style="left:1231.41px;top:24.00px;font-size:6.50px;color:#555;">П</div>
<div class="t" style="left:1242.66px;top:24.00px;font-size:6.50px;color:#555;">С</div>
<div class="t" style="left:1254.34px;top:24.00px;font-size:6.50px;color:#555;">В</div>
<div class="t" style="left:1184.21px;top:31.00px;font-size:7.00px;color:#bbb;">30</div>
<div class="t" style="left:1195.71px;top:31.00px;font-size:7.00px;color:#bbb;">31</div>
<div class="t" style="left:1208.81px;top:31.00px;font-size:7.00px;color:#1a1a1a;">1</div>
<div class="t" style="left:1220.66px;top:31.00px;font-size:7.00px;color:#1a1a1a;">2</div>
<div class="t" style="left:1231.81px;top:31.00px;font-size:7.00px;color:#1a1a1a;">3</div>
<div class="t" style="left:1243.06px;top:31.00px;font-size:7.00px;color:#1a1a1a;">4</div>
<div class="t" style="left:1254.56px;top:31.00px;font-size:7.00px;color:#1a1a1a;">5</div>
<div class="t" style="left:1186.16px;top:39.00px;font-size:7.00px;color:#1a1a1a;">6</div>
<div class="t" style="left:1197.66px;top:39.00px;font-size:7.00px;color:#1a1a1a;">7</div>
<div class="t" style="left:1208.81px;top:39.00px;font-size:7.00px;color:#1a1a1a;">8</div>
<div class="t" style="left:1220.66px;top:39.00px;font-size:7.00px;color:#1a1a1a;">9</div>
<div class="t" style="left:1229.87px;top:39.00px;font-size:7.00px;color:#1a1a1a;">10</div>
<div class="t" style="left:1241.36px;top:39.00px;font-size:7.00px;color:#1a1a1a;">11</div>
<div class="t" style="left:1252.62px;top:39.00px;font-size:7.00px;color:#1a1a1a;">12</div>
<div class="t" style="left:1184.21px;top:48.00px;font-size:7.00px;color:#1a1a1a;">13</div>
<div class="t" style="left:1195.71px;top:48.00px;font-size:7.00px;color:#1a1a1a;">14</div>
<div class="t" style="left:1206.87px;top:48.00px;font-size:7.00px;color:#1a1a1a;">15</div>
<div class="t" style="left:1218.71px;top:48.00px;font-size:7.00px;color:#1a1a1a;">16</div>
<div class="t" style="left:1229.87px;top:48.00px;font-size:7.00px;color:#1a1a1a;">17</div>
<div class="t" style="left:1241.12px;top:48.00px;font-size:7.00px;color:#1a1a1a;">18</div>
<div class="t" style="left:1252.62px;top:48.00px;font-size:7.00px;color:#1a1a1a;">19</div>
<div class="t" style="left:1184.21px;top:57.00px;font-size:7.00px;color:#1a1a1a;">20</div>
<div class="t" style="left:1195.71px;top:57.00px;font-size:7.00px;color:#1a1a1a;">21</div>
<div class="t" style="left:1206.87px;top:57.00px;font-size:7.00px;color:#1a1a1a;">22</div>
<div class="t" style="left:1218.71px;top:57.00px;font-size:7.00px;color:#1a1a1a;">23</div>
<div class="t" style="left:1229.87px;top:57.00px;font-size:7.00px;color:#1a1a1a;">24</div>
<div class="t" style="left:1241.12px;top:57.00px;font-size:7.00px;color:#1a1a1a;">25</div>
<div class="t" style="left:1252.62px;top:57.00px;font-size:7.00px;color:#1a1a1a;">26</div>
<div class="t" style="left:1184.21px;top:66.00px;font-size:7.00px;color:#1a1a1a;">27</div>
<div class="t" style="left:1195.71px;top:66.00px;font-size:7.00px;color:#1a1a1a;">28</div>
<div class="a" style="left:1205px;top:65px;width:10px;height:9px;background:#e0660e"></div>
<div class="t" style="left:1206.87px;top:66.00px;font-size:7.00px;color:#fff;">29</div>
<div class="t" style="left:1218.71px;top:66.00px;font-size:7.00px;color:#1a1a1a;">30</div>
<div class="t" style="left:1231.81px;top:66.00px;font-size:7.00px;color:#bbb;">1</div>
<div class="t" style="left:1243.06px;top:66.00px;font-size:7.00px;color:#bbb;">2</div>
<div class="t" style="left:1254.56px;top:66.00px;font-size:7.00px;color:#bbb;">3</div>
<div class="a" style="left:1181px;top:92px;width:82px;height:85px;background:linear-gradient(#f27414,#e4640c 50%,#d65a08);box-shadow:0 1px 2px rgba(0,0,0,.6)"></div>
<div class="a" style="left:1185.0px;top:85px;width:3px;height:10px;border:1px solid #eee;border-radius:1px;background:#333"></div>
<div class="a" style="left:1191.8px;top:85px;width:3px;height:10px;border:1px solid #eee;border-radius:1px;background:#333"></div>
<div class="a" style="left:1198.6px;top:85px;width:3px;height:10px;border:1px solid #eee;border-radius:1px;background:#333"></div>
<div class="a" style="left:1205.4px;top:85px;width:3px;height:10px;border:1px solid #eee;border-radius:1px;background:#333"></div>
<div class="a" style="left:1212.2px;top:85px;width:3px;height:10px;border:1px solid #eee;border-radius:1px;background:#333"></div>
<div class="a" style="left:1219.0px;top:85px;width:3px;height:10px;border:1px solid #eee;border-radius:1px;background:#333"></div>
<div class="a" style="left:1225.8px;top:85px;width:3px;height:10px;border:1px solid #eee;border-radius:1px;background:#333"></div>
<div class="a" style="left:1232.6px;top:85px;width:3px;height:10px;border:1px solid #eee;border-radius:1px;background:#333"></div>
<div class="a" style="left:1239.4px;top:85px;width:3px;height:10px;border:1px solid #eee;border-radius:1px;background:#333"></div>
<div class="a" style="left:1246.2px;top:85px;width:3px;height:10px;border:1px solid #eee;border-radius:1px;background:#333"></div>
<div class="a" style="left:1253.0px;top:85px;width:3px;height:10px;border:1px solid #eee;border-radius:1px;background:#333"></div>
<div class="a" style="left:1259.8px;top:85px;width:3px;height:10px;border:1px solid #eee;border-radius:1px;background:#333"></div>
<div class="t" style="left:1211.80px;top:102.00px;font-size:8.12px;color:#fbe3d0;">среда</div>
<div class="t" style="left:1196.00px;top:110.00px;font-size:53.50px;color:#fff6f0;-webkit-text-stroke:0.9px #e6660e;transform:scaleX(0.935);transform-origin:0 0;">29</div>
<div class="t" style="left:1198.20px;top:162.00px;font-size:8.56px;color:#fbe3d0;">Ноябрь 2017</div>
<div class="a" style="left:254px;top:72px;width:772px;height:575px;box-shadow:0 0 0 1px #124a9a,0 0 3px 2px #0c3c80,0 0 7px 3px rgba(10,50,120,.6)"></div>
<div class="a" style="left:254px;top:72px;width:772px;height:575px;background:#f2f2f2"></div>
<div class="t" style="left:604.80px;top:76.00px;font-size:9.28px;color:#444;">Просмотр обоев</div>
<div class="a" style="left:959px;top:80px;width:6px;height:2px;background:#222"></div>
<div class="a" style="left:977px;top:76px;width:8px;height:6px;border:1px solid #555;border-top-width:2px;background:#fff"></div>
<div class="a" style="left:991px;top:72px;width:32px;height:13px;background:#cf4e4e"></div>
<svg class="a" style="left:1003px;top:75px" width="7" height="7" viewBox="0 0 7 7"><path d="M0.8 0.8L6.2 6.2M6.2 0.8L0.8 6.2" stroke="#fff" stroke-width="1.4"/></svg>
<svg class="a" style="left:255px;top:74px" width="8" height="7" viewBox="0 0 13 11"><circle cx="9.2" cy="3.8" r="2.6" fill="#e08888"/><path d="M8 5 L3.5 8.5" stroke="#e08888" stroke-width="3"/><circle cx="3.2" cy="8.6" r="2.2" fill="#e08888"/><path d="M0 6 L3 7.5 L2.6 10 L0 8.5Z" fill="#e08888"/></svg>
<div class="t" style="left:263.50px;top:75.00px;font-size:6.44px;color:#d98686;">Steam не доступен.</div>
<div class="t" style="left:263.50px;top:84.00px;font-size:6.45px;color:#d98686;">Загружено 0 обоев из кеша.</div>
<div class="t" style="left:266.70px;top:96.00px;font-size:10.84px;color:#2a2a2a;">Просмотр:</div>
<div class="a" style="left:323px;top:92px;width:86px;height:19px;background:#0a72c8"></div>
<svg class="a" style="left:326px;top:96px" width="11" height="11" viewBox="0 0 11 11"><path d="M0 0H9L11 2V11H0Z" fill="#e8f2fb"/><rect x="2" y="0" width="6" height="3.5" fill="#0a72c8"/><rect x="6" y="0.6" width="1.2" height="2.2" fill="#e8f2fb"/><rect x="2" y="6" width="7" height="3.5" fill="#0a72c8"/></svg>
<div class="t" style="left:339.60px;top:96.00px;font-size:11.17px;color:#fff;">Установлено</div>
<div class="a" style="left:412px;top:92px;width:83px;height:19px;border:1px solid #4a86b4;border-top:2px solid #8ab0c8;background:#f4f4f4"></div>
<svg class="a" style="left:415px;top:95px" width="13" height="13" viewBox="0 0 13 13"><circle cx="9.2" cy="4.8" r="2.3" fill="none" stroke="#222" stroke-width="1.3"/><circle cx="9.2" cy="4.8" r="0.9" fill="#222"/><path d="M7.6 6.6 L3.5 9.8" stroke="#222" stroke-width="2.6"/><circle cx="3.4" cy="10" r="1.9" fill="#333"/><path d="M0.4 7.6 L3 8.6 L2.6 11 L0.6 9.6Z" fill="#222"/></svg>
<div class="t" style="left:430.00px;top:97.00px;font-size:11.13px;color:#333;">Мастерская</div>
<div class="a" style="left:266px;top:110px;width:549px;height:2px;background:#1070c0"></div>
<svg class="a" style="left:744px;top:93px" width="12" height="14" viewBox="0 0 12 14"><path d="M0 0H7.5L12 4.5V14H0Z" fill="#0f72c8"/><path d="M7.5 0V4.5H12Z" fill="#f2f2f2"/></svg>
<svg class="a" style="left:770px;top:93px" width="15" height="13" viewBox="0 0 15 13"><rect x="0.8" y="0.8" width="13.4" height="9" fill="none" stroke="#0f72c8" stroke-width="1.6"/><rect x="5" y="10.5" width="5" height="2.5" fill="#0f72c8"/></svg>
<svg class="a" style="left:798px;top:94px" width="13" height="13" viewBox="0 0 24 24"><path fill="#0f72c8" fill-rule="evenodd" d="M10 0h4l.7 3.3a9 9 0 0 1 2.4 1L20 2.5l2.8 2.8-1.8 2.9a9 9 0 0 1 1 2.4L24 10v4l-3.3.7a9 9 0 0 1-1 2.4l1.8 2.9-2.8 2.8-2.9-1.8a9 9 0 0 1-2.4 1L14 24h-4l-.7-3.3a9 9 0 0 1-2.4-1L4 21.5 1.2 18.7l1.8-2.9a9 9 0 0 1-1-2.4L0 14v-4l3.3-.7a9 9 0 0 1 1-2.4L2.5 4 5.3 1.2l2.9 1.8a9 9 0 0 1 2.4-1ZM12 7.5a4.5 4.5 0 1 0 0 9 4.5 4.5 0 0 0 0-9Z"/></svg>
<div class="a" style="left:266px;top:117px;width:173px;height:22px;background:#fff;border:1px solid #e2e2e2"></div>
<div class="t" style="left:274.60px;top:123.00px;font-size:9.46px;color:#a6a6a6;">Поиск</div>
<svg class="a" style="left:423px;top:123px" width="10" height="10" viewBox="0 0 10 10"><circle cx="4" cy="4" r="3" fill="none" stroke="#222" stroke-width="1.7"/><path d="M6.3 6.3L9.3 9.3" stroke="#222" stroke-width="2"/></svg>
<div class="t" style="left:445.90px;top:124.00px;font-size:9.31px;color:#3a7ab8;">Фильтры</div>
<svg class="a" style="left:491px;top:122px" width="9" height="10" viewBox="0 0 9 10"><rect x="0" y="0" width="9" height="1.5" fill="#1a78c8"/><path d="M0 2.2H9L5.5 6V10L3.5 9V6Z" fill="#1a78c8"/></svg>
<svg class="a" style="left:652px;top:127px" width="9" height="5" viewBox="0 0 9 5"><path d="M0 5L4.5 0L9 5Z" fill="#222"/></svg>
<div class="a" style="left:667px;top:119px;width:147px;height:18px;background:#cdcdcd"></div>
<div class="t" style="left:681.90px;top:124.00px;font-size:8.82px;color:#333;">Имя</div>
<svg class="a" style="left:803px;top:127px" width="6" height="4" viewBox="0 0 6 4"><path d="M0 0H6L3 4Z" fill="#222"/></svg>
<div class="a" style="left:807px;top:146px;width:7px;height:425px;border:1px solid #46617e;background:#fff"></div>
<div class="a" style="left:808px;top:328px;width:5px;height:170px;background:#0f72c8"></div>
<svg width="0" height="0" style="position:absolute"><defs><filter id="b05" color-interpolation-filters="sRGB" x="-10%" y="-10%" width="120%" height="120%"><feGaussianBlur stdDeviation="0.5"/></filter><filter id="b1" color-interpolation-filters="sRGB" x="-20%" y="-20%" width="140%" height="140%"><feGaussianBlur stdDeviation="1"/></filter><filter id="b2" color-interpolation-filters="sRGB" x="-30%" y="-30%" width="160%" height="160%"><feGaussianBlur stdDeviation="2"/></filter><filter id="b3" color-interpolation-filters="sRGB" x="-40%" y="-40%" width="180%" height="180%"><feGaussianBlur stdDeviation="3.5"/></filter><filter id="b6" color-interpolation-filters="sRGB" x="-50%" y="-50%" width="200%" height="200%"><feGaussianBlur stdDeviation="6"/></filter></defs></svg>
<div class="th" style="left:266px;top:146px;width:85px;height:70px;box-shadow:1px 1px 2px rgba(0,0,0,.3)"><svg style="position:absolute;left:0;top:-15px" width="85" height="85" viewBox="0 0 85 85"><rect width="85" height="85" fill="#040404"/><circle cx="20.2" cy="46.3" r="0.48" fill="#b8a080" fill-opacity="0.44"/><circle cx="53.2" cy="5.6" r="0.31" fill="#b8a080" fill-opacity="0.53"/><circle cx="22.0" cy="19.9" r="0.80" fill="#b8a080" fill-opacity="0.39"/><circle cx="71.1" cy="40.5" r="0.62" fill="#b8a080" fill-opacity="0.26"/><circle cx="54.0" cy="73.8" r="0.56" fill="#b8a080" fill-opacity="0.50"/><circle cx="57.1" cy="5.4" r="0.68" fill="#b8a080" fill-opacity="0.44"/><circle cx="25.6" cy="2.6" r="0.73" fill="#b8a080" fill-opacity="0.39"/><circle cx="61.1" cy="74.7" r="0.66" fill="#b8a080" fill-opacity="0.57"/><circle cx="33.6" cy="68.1" r="0.52" fill="#b8a080" fill-opacity="0.57"/><circle cx="74.7" cy="8.3" r="0.37" fill="#b8a080" fill-opacity="0.29"/><circle cx="82.1" cy="37.1" r="0.61" fill="#b8a080" fill-opacity="0.32"/><circle cx="43.1" cy="32.8" r="0.48" fill="#b8a080" fill-opacity="0.43"/><circle cx="49.7" cy="76.9" r="0.64" fill="#b8a080" fill-opacity="0.57"/><circle cx="72.8" cy="84.2" r="0.64" fill="#b8a080" fill-opacity="0.27"/><circle cx="73.2" cy="82.0" r="0.75" fill="#b8a080" fill-opacity="0.43"/><circle cx="60.7" cy="17.9" r="0.72" fill="#b8a080" fill-opacity="0.43"/><circle cx="24.2" cy="5.4" r="0.73" fill="#b8a080" fill-opacity="0.60"/><circle cx="7.5" cy="68.1" r="0.51" fill="#b8a080" fill-opacity="0.26"/><circle cx="25.0" cy="65.3" r="0.74" fill="#b8a080" fill-opacity="0.22"/><circle cx="52.2" cy="3.8" r="0.66" fill="#b8a080" fill-opacity="0.33"/><circle cx="74.9" cy="83.4" r="0.55" fill="#b8a080" fill-opacity="0.60"/><circle cx="26.3" cy="6.5" r="0.60" fill="#b8a080" fill-opacity="0.21"/><circle cx="16.8" cy="34.7" r="0.61" fill="#b8a080" fill-opacity="0.26"/><circle cx="3.6" cy="73.8" r="0.46" fill="#b8a080" fill-opacity="0.58"/><circle cx="76.2" cy="32.1" r="0.53" fill="#b8a080" fill-opacity="0.41"/><circle cx="54.7" cy="50.6" r="0.58" fill="#b8a080" fill-opacity="0.45"/><circle cx="80.0" cy="43.1" r="0.52" fill="#b8a080" fill-opacity="0.49"/><circle cx="20.2" cy="25.6" r="0.79" fill="#b8a080" fill-opacity="0.41"/><circle cx="46.6" cy="1.0" r="0.51" fill="#b8a080" fill-opacity="0.43"/><circle cx="1.7" cy="52.3" r="0.62" fill="#b8a080" fill-opacity="0.22"/><circle cx="53.3" cy="39.6" r="0.64" fill="#b8a080" fill-opacity="0.34"/><circle cx="60.1" cy="62.7" r="0.31" fill="#b8a080" fill-opacity="0.22"/><circle cx="57.5" cy="81.9" r="0.43" fill="#b8a080" fill-opacity="0.38"/><circle cx="50.4" cy="27.2" r="0.48" fill="#b8a080" fill-opacity="0.33"/><circle cx="31.4" cy="50.6" r="0.45" fill="#b8a080" fill-opacity="0.35"/><circle cx="65.6" cy="2.3" r="0.58" fill="#b8a080" fill-opacity="0.49"/><circle cx="26.4" cy="18.9" r="0.70" fill="#b8a080" fill-opacity="0.30"/><circle cx="15.9" cy="37.0" r="0.65" fill="#b8a080" fill-opacity="0.24"/><circle cx="27.4" cy="28.4" r="0.72" fill="#b8a080" fill-opacity="0.38"/><circle cx="72.7" cy="14.4" r="0.47" fill="#b8a080" fill-opacity="0.46"/><circle cx="75.2" cy="38.3" r="0.41" fill="#b8a080" fill-opacity="0.25"/><circle cx="45.0" cy="16.2" r="0.70" fill="#b8a080" fill-opacity="0.54"/><circle cx="15.6" cy="23.7" r="0.70" fill="#b8a080" fill-opacity="0.46"/><circle cx="68.5" cy="29.3" r="0.36" fill="#b8a080" fill-opacity="0.32"/><circle cx="67.5" cy="23.0" r="0.47" fill="#b8a080" fill-opacity="0.37"/><circle cx="35.7" cy="34.8" r="0.76" fill="#b8a080" fill-opacity="0.26"/><circle cx="0.4" cy="80.2" r="0.74" fill="#b8a080" fill-opacity="0.59"/><circle cx="36.9" cy="80.8" r="0.76" fill="#b8a080" fill-opacity="0.29"/><circle cx="63.4" cy="71.1" r="0.63" fill="#b8a080" fill-opacity="0.41"/><circle cx="24.6" cy="29.0" r="0.41" fill="#b8a080" fill-opacity="0.23"/><circle cx="50.0" cy="24.4" r="0.71" fill="#b8a080" fill-opacity="0.22"/><circle cx="76.8" cy="59.0" r="0.76" fill="#b8a080" fill-opacity="0.56"/><circle cx="76.5" cy="49.0" r="0.31" fill="#b8a080" fill-opacity="0.50"/><circle cx="14.6" cy="25.5" r="0.63" fill="#b8a080" fill-opacity="0.41"/><circle cx="35.2" cy="79.8" r="0.61" fill="#b8a080" fill-opacity="0.34"/><circle cx="21.5" cy="73.2" r="0.54" fill="#b8a080" fill-opacity="0.51"/><circle cx="29.9" cy="16.8" r="0.57" fill="#b8a080" fill-opacity="0.53"/><circle cx="14.6" cy="67.3" r="0.76" fill="#b8a080" fill-opacity="0.52"/><circle cx="70.0" cy="0.6" r="0.61" fill="#b8a080" fill-opacity="0.55"/><circle cx="4.2" cy="23.1" r="0.43" fill="#b8a080" fill-opacity="0.41"/><circle cx="36.0" cy="40.2" r="0.69" fill="#b8a080" fill-opacity="0.20"/><circle cx="4.7" cy="10.8" r="0.36" fill="#b8a080" fill-opacity="0.23"/><circle cx="82.8" cy="72.6" r="0.34" fill="#b8a080" fill-opacity="0.40"/><circle cx="26.9" cy="26.7" r="0.48" fill="#b8a080" fill-opacity="0.46"/><circle cx="49.9" cy="30.7" r="0.40" fill="#b8a080" fill-opacity="0.33"/><circle cx="10.5" cy="47.2" r="0.66" fill="#b8a080" fill-opacity="0.35"/><circle cx="6.8" cy="15.2" r="0.49" fill="#b8a080" fill-opacity="0.44"/><circle cx="66.5" cy="32.3" r="0.70" fill="#b8a080" fill-opacity="0.45"/><circle cx="36.7" cy="31.7" r="0.55" fill="#b8a080" fill-opacity="0.48"/><circle cx="35.7" cy="59.0" r="0.53" fill="#b8a080" fill-opacity="0.30"/><circle cx="45.5" cy="59.1" r="0.34" fill="#b8a080" fill-opacity="0.37"/><circle cx="36.2" cy="74.8" r="0.77" fill="#b8a080" fill-opacity="0.35"/><circle cx="76.3" cy="67.2" r="0.43" fill="#b8a080" fill-opacity="0.39"/><circle cx="10.5" cy="69.1" r="0.63" fill="#b8a080" fill-opacity="0.55"/><circle cx="67.4" cy="56.7" r="0.67" fill="#b8a080" fill-opacity="0.43"/><circle cx="8.8" cy="50.0" r="0.30" fill="#b8a080" fill-opacity="0.26"/><circle cx="65.8" cy="3.8" r="0.35" fill="#b8a080" fill-opacity="0.24"/><circle cx="74.8" cy="15.2" r="0.31" fill="#b8a080" fill-opacity="0.54"/><circle cx="10.3" cy="71.7" r="0.64" fill="#b8a080" fill-opacity="0.53"/><circle cx="81.0" cy="49.2" r="0.70" fill="#b8a080" fill-opacity="0.21"/><circle cx="65.2" cy="43.5" r="0.66" fill="#b8a080" fill-opacity="0.24"/><circle cx="63.7" cy="79.4" r="0.33" fill="#b8a080" fill-opacity="0.33"/><circle cx="47.9" cy="70.4" r="0.42" fill="#b8a080" fill-opacity="0.27"/><circle cx="21.2" cy="52.4" r="0.68" fill="#b8a080" fill-opacity="0.36"/><circle cx="31.2" cy="33.7" r="0.48" fill="#b8a080" fill-opacity="0.37"/><circle cx="7.1" cy="42.5" r="0.79" fill="#b8a080" fill-opacity="0.37"/><circle cx="63.5" cy="13.7" r="0.65" fill="#b8a080" fill-opacity="0.50"/><circle cx="57.3" cy="44.0" r="0.54" fill="#b8a080" fill-opacity="0.46"/><circle cx="76.3" cy="12.7" r="0.35" fill="#b8a080" fill-opacity="0.50"/><circle cx="77.9" cy="44.0" r="0.52" fill="#b8a080" fill-opacity="0.49"/></svg></div>
<div class="t" style="left:284.58px;top:199.00px;font-size:7.00px;color:#e4e4e4;text-shadow:0 0 1px rgba(0,0,0,.5);">LightRain_TMF</div>
<div class="th" style="left:355px;top:146px;width:85px;height:70px;box-shadow:1px 1px 2px rgba(0,0,0,.3)"><svg style="position:absolute;left:0;top:-15px" width="85" height="85" viewBox="0 0 85 85"><defs><linearGradient id="mc" x1="0" y1="0" x2="0" y2="1"><stop offset="0" stop-color="#3a3a9a"/><stop offset="0.25" stop-color="#2a70e0"/><stop offset="0.5" stop-color="#1a58c8"/><stop offset="0.62" stop-color="#0c2468"/><stop offset="1" stop-color="#040a24"/></linearGradient></defs>
<rect width="85" height="85" fill="url(#mc)"/><g filter="url(#b1)"><path d="M0 8 Q10 2 22 10 Q32 0 48 6 Q62 -2 85 4 V20 Q70 26 58 18 Q48 28 35 20 Q22 30 10 22 Q4 18 0 22Z" fill="#b07ad0" fill-opacity="0.6"/><path d="M0 28 Q15 18 28 30 Q40 22 52 34 Q66 26 85 32 V48 Q70 56 55 46 Q42 56 30 46 Q15 54 0 48Z" fill="#58b0ff" fill-opacity="0.65"/><path d="M20 14 Q30 22 26 36 L40 40 Q44 24 36 12Z" fill="#6a2a70" fill-opacity="0.6"/><path d="M55 10 Q66 18 70 30 L80 26 Q74 12 62 6Z" fill="#8a3070" fill-opacity="0.5"/><path d="M5 40 Q20 30 35 45 Q50 36 70 48 L75 56 Q50 54 30 58 Q15 56 5 52Z" fill="#3a80f0" fill-opacity="0.6"/></g></svg></div>
<div class="t" style="left:379.02px;top:199.00px;font-size:7.00px;color:#e4e4e4;text-shadow:0 0 1px rgba(0,0,0,.5);">Magic Cloth</div>
<div class="th" style="left:443.5px;top:146px;width:85px;height:70px;box-shadow:1px 1px 2px rgba(0,0,0,.3)"><svg style="position:absolute;left:0;top:-15px" width="85" height="85" viewBox="0 0 85 85"><rect width="85" height="85" fill="#020604"/><rect x="52.9" y="51.9" width="0.7" height="33.4" fill="#1a9a3a" fill-opacity="0.57"/><rect x="62.9" y="64.6" width="0.7" height="8.9" fill="#1a9a3a" fill-opacity="0.36"/><rect x="80.2" y="45.4" width="0.7" height="36.8" fill="#1a9a3a" fill-opacity="0.20"/><rect x="39.9" y="17.3" width="0.7" height="25.4" fill="#1a9a3a" fill-opacity="0.41"/><rect x="1.1" y="15.2" width="0.7" height="16.9" fill="#1a9a3a" fill-opacity="0.56"/><rect x="65.1" y="11.2" width="0.7" height="33.5" fill="#1a9a3a" fill-opacity="0.21"/><rect x="52.5" y="8.9" width="0.7" height="8.1" fill="#1a9a3a" fill-opacity="0.54"/><rect x="17.8" y="15.1" width="0.7" height="39.4" fill="#1a9a3a" fill-opacity="0.54"/><rect x="24.6" y="67.3" width="0.7" height="25.3" fill="#1a9a3a" fill-opacity="0.46"/><rect x="17.4" y="65.9" width="0.7" height="30.1" fill="#1a9a3a" fill-opacity="0.58"/><rect x="76.0" y="20.9" width="0.7" height="19.6" fill="#1a9a3a" fill-opacity="0.22"/><rect x="12.4" y="4.6" width="0.7" height="17.6" fill="#1a9a3a" fill-opacity="0.42"/><rect x="0.3" y="47.5" width="0.7" height="18.8" fill="#1a9a3a" fill-opacity="0.29"/><rect x="69.6" y="33.7" width="0.7" height="18.1" fill="#1a9a3a" fill-opacity="0.37"/><rect x="59.9" y="4.0" width="0.7" height="39.2" fill="#1a9a3a" fill-opacity="0.16"/><rect x="63.7" y="59.1" width="0.7" height="8.6" fill="#1a9a3a" fill-opacity="0.50"/><rect x="31.1" y="40.5" width="0.7" height="8.3" fill="#1a9a3a" fill-opacity="0.17"/><rect x="15.4" y="66.9" width="0.7" height="14.3" fill="#1a9a3a" fill-opacity="0.49"/><rect x="79.0" y="65.9" width="0.7" height="19.0" fill="#1a9a3a" fill-opacity="0.31"/><rect x="44.6" y="54.3" width="0.7" height="11.5" fill="#1a9a3a" fill-opacity="0.49"/><rect x="67.8" y="60.2" width="0.7" height="9.2" fill="#1a9a3a" fill-opacity="0.58"/><rect x="7.8" y="23.9" width="0.7" height="27.5" fill="#1a9a3a" fill-opacity="0.56"/><rect x="28.9" y="64.7" width="0.7" height="25.4" fill="#1a9a3a" fill-opacity="0.29"/><rect x="26.9" y="12.4" width="0.7" height="10.5" fill="#1a9a3a" fill-opacity="0.22"/><rect x="58.6" y="69.8" width="0.7" height="13.2" fill="#1a9a3a" fill-opacity="0.17"/><rect x="83.9" y="37.3" width="0.7" height="21.0" fill="#1a9a3a" fill-opacity="0.26"/><rect x="50.5" y="57.8" width="0.7" height="22.6" fill="#1a9a3a" fill-opacity="0.34"/><rect x="4.7" y="64.1" width="0.7" height="9.0" fill="#1a9a3a" fill-opacity="0.37"/><rect x="71.3" y="9.1" width="0.7" height="31.4" fill="#1a9a3a" fill-opacity="0.58"/><rect x="53.6" y="55.2" width="0.7" height="11.4" fill="#1a9a3a" fill-opacity="0.35"/><rect x="12.7" y="59.1" width="0.7" height="17.4" fill="#1a9a3a" fill-opacity="0.35"/><rect x="84.9" y="59.7" width="0.7" height="39.2" fill="#1a9a3a" fill-opacity="0.35"/><rect x="41.5" y="51.1" width="0.7" height="23.3" fill="#1a9a3a" fill-opacity="0.28"/><rect x="34.3" y="10.3" width="0.7" height="20.1" fill="#1a9a3a" fill-opacity="0.59"/><rect x="81.6" y="43.9" width="0.7" height="24.0" fill="#1a9a3a" fill-opacity="0.30"/><rect x="7.6" y="19.1" width="0.7" height="33.0" fill="#1a9a3a" fill-opacity="0.54"/><rect x="30.7" y="55.0" width="0.7" height="32.8" fill="#1a9a3a" fill-opacity="0.46"/><rect x="56.4" y="53.2" width="0.7" height="19.6" fill="#1a9a3a" fill-opacity="0.47"/><rect x="23.9" y="34.0" width="0.7" height="32.6" fill="#1a9a3a" fill-opacity="0.46"/><rect x="25.0" y="66.2" width="0.7" height="28.8" fill="#1a9a3a" fill-opacity="0.41"/><g filter="url(#b3)"><rect x="65" y="45" width="20" height="40" fill="#1a3a90" fill-opacity="0.6"/></g></svg></div>
<div class="t" style="left:449.00px;top:194.00px;font-size:7.00px;color:#e4e4e4;text-shadow:0 0 1px rgba(0,0,0,.5);">Matrix Fal</div>
<div class="th" style="left:532px;top:146px;width:85px;height:70px;box-shadow:1px 1px 2px rgba(0,0,0,.3)"><svg style="position:absolute;left:0;top:-15px" width="85" height="85" viewBox="0 0 85 85"><rect width="85" height="85" fill="#12081e"/><g filter="url(#b1)"><ellipse cx="28" cy="34" rx="13" ry="9" fill="#7858a8"/><ellipse cx="28" cy="31" rx="9" ry="6" fill="#a088d0"/><ellipse cx="60" cy="20" rx="8" ry="5" fill="#402a60"/></g></svg></div>
<div class="th" style="left:621px;top:146px;width:85px;height:70px;box-shadow:1px 1px 2px rgba(0,0,0,.3)"><svg style="position:absolute;left:0;top:-15px" width="85" height="85" viewBox="0 0 85 85"><rect width="85" height="85" fill="#0a120a"/><g filter="url(#b05)"><path d="M10 30 Q40 14 85 18 V26 Q50 22 20 34Z" fill="#38d838"/><path d="M30 20 Q55 12 85 14 V17 Q60 15 40 22Z" fill="#143814"/><path d="M25 12 Q55 2 85 5 V11 Q55 8 32 16Z" fill="#48e048"/></g></svg></div>
<div class="th" style="left:709px;top:146px;width:85px;height:70px;box-shadow:1px 1px 2px rgba(0,0,0,.3)"><svg style="position:absolute;left:0;top:-15px" width="85" height="85" viewBox="0 0 85 85"><rect width="85" height="85" fill="#1e1424"/><g filter="url(#b2)"><rect x="0" y="15" width="85" height="14" fill="#6a5a88" fill-opacity="0.6"/><rect x="55" y="16" width="8" height="18" fill="#9a8ab8" fill-opacity="0.5"/></g></svg></div>
<div class="th" style="left:266px;top:219px;width:85px;height:85px;box-shadow:1px 1px 2px rgba(0,0,0,.3)"><svg style="position:absolute;left:0;top:0px" width="85" height="85" viewBox="0 0 85 85"><defs><linearGradient id="rn" x1="0" y1="0" x2="0" y2="1"><stop offset="0" stop-color="#e2eaf0"/><stop offset="0.35" stop-color="#c0ced8"/><stop offset="0.62" stop-color="#8498a6"/><stop offset="0.75" stop-color="#4a5e6c"/><stop offset="1" stop-color="#2a3c48"/></linearGradient></defs>
<rect width="85" height="85" fill="url(#rn)"/><g filter="url(#b2)"><rect x="10" y="22" width="9" height="36" fill="#98aab6" fill-opacity="0.7"/><rect x="24" y="12" width="12" height="46" fill="#90a4b0" fill-opacity="0.6"/><rect x="45" y="26" width="10" height="32" fill="#9cb0bc" fill-opacity="0.6"/><rect x="62" y="18" width="8" height="40" fill="#a4b4c0" fill-opacity="0.5"/></g><rect x="0" y="58" width="85" height="27" fill="#000" fill-opacity="0.42"/></svg></div>
<div class="t" style="left:301.31px;top:288.00px;font-size:7.00px;color:#e4e4e4;text-shadow:0 0 1px rgba(0,0,0,.5);">Rain</div>
<div class="th" style="left:355px;top:219px;width:85px;height:85px;box-shadow:1px 1px 2px rgba(0,0,0,.3)"><svg style="position:absolute;left:0;top:0px" width="85" height="85" viewBox="0 0 85 85"><defs><linearGradient id="rnn" x1="0" y1="0" x2="0" y2="1"><stop offset="0" stop-color="#0e0c0b"/><stop offset="0.5" stop-color="#1c1a18"/><stop offset="1" stop-color="#141210"/></linearGradient></defs><rect width="85" height="85" fill="url(#rnn)"/><g filter="url(#b1)"><path d="M0 50 Q30 40 62 36 L63 39 Q35 44 0 56Z" fill="#f0ead8" fill-opacity="0.9"/><path d="M0 46 L85 36 L85 40 L0 52Z" fill="#6a6458" fill-opacity="0.4"/><path d="M40 85 L58 40 L61 40 L52 85Z" fill="#e85a18" fill-opacity="0.85"/><path d="M70 85 L62 40 L64 40 L82 85Z" fill="#c02a10" fill-opacity="0.7"/><path d="M20 85 L56 42 L57 45 L32 85Z" fill="#a83a10" fill-opacity="0.45"/></g><circle cx="39.4" cy="34.9" r="0.37" fill="#b0a890" fill-opacity="0.55"/><circle cx="0.5" cy="40.1" r="0.75" fill="#b0a890" fill-opacity="0.23"/><circle cx="47.1" cy="44.7" r="0.32" fill="#b0a890" fill-opacity="0.35"/><circle cx="59.8" cy="38.1" r="0.66" fill="#b0a890" fill-opacity="0.26"/><circle cx="20.2" cy="24.4" r="0.55" fill="#b0a890" fill-opacity="0.57"/><circle cx="50.2" cy="51.0" r="0.49" fill="#b0a890" fill-opacity="0.50"/><circle cx="8.6" cy="31.6" r="0.64" fill="#b0a890" fill-opacity="0.49"/><circle cx="35.8" cy="23.5" r="0.43" fill="#b0a890" fill-opacity="0.28"/><circle cx="23.9" cy="52.4" r="0.40" fill="#b0a890" fill-opacity="0.55"/><circle cx="74.7" cy="22.2" r="0.49" fill="#b0a890" fill-opacity="0.40"/><circle cx="2.0" cy="37.0" r="0.75" fill="#b0a890" fill-opacity="0.24"/><circle cx="50.7" cy="24.8" r="0.59" fill="#b0a890" fill-opacity="0.56"/><circle cx="17.3" cy="20.3" r="0.34" fill="#b0a890" fill-opacity="0.42"/><circle cx="1.5" cy="23.4" r="0.55" fill="#b0a890" fill-opacity="0.57"/><circle cx="35.7" cy="35.9" r="0.62" fill="#b0a890" fill-opacity="0.24"/><circle cx="49.3" cy="26.9" r="0.60" fill="#b0a890" fill-opacity="0.58"/><circle cx="4.6" cy="42.2" r="0.60" fill="#b0a890" fill-opacity="0.26"/><circle cx="22.8" cy="59.8" r="0.80" fill="#b0a890" fill-opacity="0.25"/><circle cx="60.0" cy="58.0" r="0.42" fill="#b0a890" fill-opacity="0.44"/><circle cx="3.7" cy="34.6" r="0.64" fill="#b0a890" fill-opacity="0.44"/><circle cx="65.8" cy="23.5" r="0.47" fill="#b0a890" fill-opacity="0.55"/><circle cx="49.7" cy="38.1" r="0.50" fill="#b0a890" fill-opacity="0.59"/><circle cx="48.8" cy="20.7" r="0.70" fill="#b0a890" fill-opacity="0.33"/><circle cx="36.9" cy="28.5" r="0.52" fill="#b0a890" fill-opacity="0.33"/><circle cx="7.5" cy="45.2" r="0.35" fill="#b0a890" fill-opacity="0.51"/><circle cx="2.2" cy="51.2" r="0.70" fill="#b0a890" fill-opacity="0.40"/><circle cx="60.3" cy="29.9" r="0.67" fill="#b0a890" fill-opacity="0.37"/><circle cx="19.6" cy="58.6" r="0.50" fill="#b0a890" fill-opacity="0.35"/><circle cx="73.1" cy="34.8" r="0.63" fill="#b0a890" fill-opacity="0.27"/><circle cx="71.7" cy="30.4" r="0.33" fill="#b0a890" fill-opacity="0.59"/><circle cx="14.7" cy="57.9" r="0.79" fill="#b0a890" fill-opacity="0.44"/><circle cx="1.0" cy="22.4" r="0.40" fill="#b0a890" fill-opacity="0.36"/><circle cx="52.0" cy="58.7" r="0.48" fill="#b0a890" fill-opacity="0.26"/><circle cx="47.8" cy="25.5" r="0.34" fill="#b0a890" fill-opacity="0.42"/><circle cx="59.2" cy="22.6" r="0.53" fill="#b0a890" fill-opacity="0.48"/><circle cx="65.0" cy="35.3" r="0.74" fill="#b0a890" fill-opacity="0.27"/><circle cx="60.8" cy="50.9" r="0.74" fill="#b0a890" fill-opacity="0.40"/><circle cx="8.4" cy="21.9" r="0.56" fill="#b0a890" fill-opacity="0.27"/><circle cx="53.5" cy="23.4" r="0.69" fill="#b0a890" fill-opacity="0.29"/><circle cx="1.1" cy="27.0" r="0.53" fill="#b0a890" fill-opacity="0.42"/><rect x="0" y="58" width="85" height="27" fill="#000" fill-opacity="0.42"/></svg></div>
<div class="t" style="left:368.52px;top:288.00px;font-size:7.00px;color:#e4e4e4;text-shadow:0 0 1px rgba(0,0,0,.5);">Raindrops at Night</div>
<div class="th" style="left:443.5px;top:219px;width:85px;height:85px;box-shadow:1px 1px 2px rgba(0,0,0,.3)"><svg style="position:absolute;left:0;top:0px" width="85" height="85" viewBox="0 0 85 85"><defs><linearGradient id="rd" x1="0" y1="0" x2="0" y2="1"><stop offset="0" stop-color="#dfeaf0"/><stop offset="0.6" stop-color="#b4ccd8"/><stop offset="1" stop-color="#6a8a98"/></linearGradient></defs><rect width="85" height="85" fill="url(#rd)"/><g filter="url(#b05)"><path d="M30 0 Q26 15 20 22 Q10 30 12 40 Q4 48 6 58" stroke="#48d8ec" stroke-width="7" fill="none" stroke-dasharray="1.5 1"/><path d="M34 0 Q30 16 24 24" stroke="#80e8f4" stroke-width="3" fill="none"/></g><text x="28" y="45" font-size="9" fill="#58d0e8" font-family="Liberation Sans">20</text><rect x="0" y="58" width="85" height="27" fill="#1e4452" fill-opacity="0.8"/></svg></div>
<div class="t" style="left:452.50px;top:283.00px;font-size:7.00px;color:#e4e4e4;text-shadow:0 0 1px rgba(0,0,0,.5);">Raindrops</div>
<div class="t" style="left:468.00px;top:293.00px;font-size:7.00px;color:#e4e4e4;text-shadow:0 0 1px rgba(0,0,0,.5);">Vi</div>
<div class="th" style="left:266px;top:307.5px;width:85px;height:85.0px;box-shadow:1px 1px 2px rgba(0,0,0,.3)"><svg style="position:absolute;left:0;top:-0.0px" width="85" height="85" viewBox="0 0 85 85"><rect width="85" height="85" fill="#eee2d0"/><rect x="16" y="0" width="0.7" height="85" fill="#c8b49c" fill-opacity="0.45"/><rect x="19" y="0" width="0.7" height="85" fill="#c8b49c" fill-opacity="0.45"/><rect x="22" y="0" width="0.7" height="85" fill="#c8b49c" fill-opacity="0.45"/><rect x="25" y="0" width="0.7" height="85" fill="#c8b49c" fill-opacity="0.45"/><rect x="28" y="0" width="0.7" height="85" fill="#c8b49c" fill-opacity="0.45"/><rect x="31" y="0" width="0.7" height="85" fill="#c8b49c" fill-opacity="0.45"/><rect x="34" y="0" width="0.7" height="85" fill="#c8b49c" fill-opacity="0.45"/><rect x="37" y="0" width="0.7" height="85" fill="#c8b49c" fill-opacity="0.45"/><rect x="40" y="0" width="0.7" height="85" fill="#c8b49c" fill-opacity="0.45"/><rect x="43" y="0" width="0.7" height="85" fill="#c8b49c" fill-opacity="0.45"/><rect x="46" y="0" width="0.7" height="85" fill="#c8b49c" fill-opacity="0.45"/><rect x="49" y="0" width="0.7" height="85" fill="#c8b49c" fill-opacity="0.45"/><rect x="52" y="0" width="0.7" height="85" fill="#c8b49c" fill-opacity="0.45"/><rect x="55" y="0" width="0.7" height="85" fill="#c8b49c" fill-opacity="0.45"/><rect x="58" y="0" width="0.7" height="85" fill="#c8b49c" fill-opacity="0.45"/><rect x="61" y="0" width="0.7" height="85" fill="#c8b49c" fill-opacity="0.45"/><rect x="64" y="0" width="0.7" height="85" fill="#c8b49c" fill-opacity="0.45"/><rect x="67" y="0" width="0.7" height="85" fill="#c8b49c" fill-opacity="0.45"/><rect x="70" y="0" width="0.7" height="85" fill="#c8b49c" fill-opacity="0.45"/><rect x="73" y="0" width="0.7" height="85" fill="#c8b49c" fill-opacity="0.45"/><rect x="76" y="0" width="0.7" height="85" fill="#c8b49c" fill-opacity="0.45"/><rect x="79" y="0" width="0.7" height="85" fill="#c8b49c" fill-opacity="0.45"/><rect x="82" y="0" width="0.7" height="85" fill="#c8b49c" fill-opacity="0.45"/><rect x="16" y="0" width="69" height="0.7" fill="#c8b49c" fill-opacity="0.45"/><rect x="16" y="3" width="69" height="0.7" fill="#c8b49c" fill-opacity="0.45"/><rect x="16" y="6" width="69" height="0.7" fill="#c8b49c" fill-opacity="0.45"/><rect x="16" y="9" width="69" height="0.7" fill="#c8b49c" fill-opacity="0.45"/><rect x="16" y="12" width="69" height="0.7" fill="#c8b49c" fill-opacity="0.45"/><rect x="16" y="15" width="69" height="0.7" fill="#c8b49c" fill-opacity="0.45"/><rect x="16" y="18" width="69" height="0.7" fill="#c8b49c" fill-opacity="0.45"/><rect x="16" y="21" width="69" height="0.7" fill="#c8b49c" fill-opacity="0.45"/><rect x="16" y="24" width="69" height="0.7" fill="#c8b49c" fill-opacity="0.45"/><rect x="16" y="27" width="69" height="0.7" fill="#c8b49c" fill-opacity="0.45"/><rect x="16" y="30" width="69" height="0.7" fill="#c8b49c" fill-opacity="0.45"/><rect x="16" y="33" width="69" height="0.7" fill="#c8b49c" fill-opacity="0.45"/><rect x="16" y="36" width="69" height="0.7" fill="#c8b49c" fill-opacity="0.45"/><rect x="16" y="39" width="69" height="0.7" fill="#c8b49c" fill-opacity="0.45"/><rect x="16" y="42" width="69" height="0.7" fill="#c8b49c" fill-opacity="0.45"/><rect x="16" y="45" width="69" height="0.7" fill="#c8b49c" fill-opacity="0.45"/><rect x="16" y="48" width="69" height="0.7" fill="#c8b49c" fill-opacity="0.45"/><rect x="16" y="51" width="69" height="0.7" fill="#c8b49c" fill-opacity="0.45"/><rect x="16" y="54" width="69" height="0.7" fill="#c8b49c" fill-opacity="0.45"/><rect x="16" y="57" width="69" height="0.7" fill="#c8b49c" fill-opacity="0.45"/><rect x="16" y="60" width="69" height="0.7" fill="#c8b49c" fill-opacity="0.45"/><rect x="16" y="63" width="69" height="0.7" fill="#c8b49c" fill-opacity="0.45"/><rect x="16" y="66" width="69" height="0.7" fill="#c8b49c" fill-opacity="0.45"/><rect x="16" y="69" width="69" height="0.7" fill="#c8b49c" fill-opacity="0.45"/><rect x="16" y="72" width="69" height="0.7" fill="#c8b49c" fill-opacity="0.45"/><rect x="16" y="75" width="69" height="0.7" fill="#c8b49c" fill-opacity="0.45"/><rect x="16" y="78" width="69" height="0.7" fill="#c8b49c" fill-opacity="0.45"/><rect x="16" y="81" width="69" height="0.7" fill="#c8b49c" fill-opacity="0.45"/><rect x="16" y="84" width="69" height="0.7" fill="#c8b49c" fill-opacity="0.45"/><rect x="0" y="58" width="85" height="27" fill="#6a625a" fill-opacity="0.85"/>
<path d="M4 0 V62 Q4 82 24 82 H62 V78 H24 Q8 78 8 62 V0Z" fill="#5a0c08"/><path d="M7 0 V62 Q7 79 24 79 H62 V75 H24 Q11 75 11 62 V0Z" fill="#d82a10"/><path d="M11 0 V62 Q11 75 24 75 H60 V72 H24 Q14 72 14 62 V0Z" fill="#f06018"/><path d="M14 0 V62 Q14 72 24 72 H58 V69 H24 Q16.5 69 16.5 62 V0Z" fill="#f4a020"/>
<circle cx="20" cy="66" r="14" fill="#5a0c08"/><circle cx="20" cy="66" r="11.5" fill="#c82a10"/><circle cx="20" cy="66" r="9" fill="#a04a20"/><circle cx="20" cy="66" r="6.5" fill="#b07a30"/><circle cx="20" cy="66" r="4" fill="#8a8078"/>
<circle cx="60.0" cy="71" r="1.2" fill="#8a1a10" fill-opacity="0.8"/><circle cx="60.0" cy="75" r="1.2" fill="#8a1a10" fill-opacity="0.8"/><circle cx="60.0" cy="79" r="1.2" fill="#8a1a10" fill-opacity="0.8"/><circle cx="64.5" cy="71" r="1.2" fill="#8a1a10" fill-opacity="0.8"/><circle cx="64.5" cy="75" r="1.2" fill="#8a1a10" fill-opacity="0.8"/><circle cx="64.5" cy="79" r="1.2" fill="#8a1a10" fill-opacity="0.8"/><circle cx="69.0" cy="71" r="1.2" fill="#8a1a10" fill-opacity="0.8"/><circle cx="69.0" cy="75" r="1.2" fill="#8a1a10" fill-opacity="0.8"/><circle cx="69.0" cy="79" r="1.2" fill="#8a1a10" fill-opacity="0.8"/><circle cx="73.5" cy="71" r="1.2" fill="#8a1a10" fill-opacity="0.8"/><circle cx="73.5" cy="75" r="1.2" fill="#8a1a10" fill-opacity="0.8"/><circle cx="73.5" cy="79" r="1.2" fill="#8a1a10" fill-opacity="0.8"/><circle cx="78.0" cy="71" r="1.2" fill="#8a1a10" fill-opacity="0.8"/><circle cx="78.0" cy="75" r="1.2" fill="#8a1a10" fill-opacity="0.8"/><circle cx="78.0" cy="79" r="1.2" fill="#8a1a10" fill-opacity="0.8"/><circle cx="82.5" cy="71" r="1.2" fill="#8a1a10" fill-opacity="0.8"/><circle cx="82.5" cy="75" r="1.2" fill="#8a1a10" fill-opacity="0.8"/><circle cx="82.5" cy="79" r="1.2" fill="#8a1a10" fill-opacity="0.8"/></svg></div>
<div class="t" style="left:299.94px;top:376.00px;font-size:7.00px;color:#e4e4e4;text-shadow:0 0 1px rgba(0,0,0,.5);">Retro</div>
<div class="th" style="left:355px;top:307.5px;width:85px;height:85.0px;box-shadow:1px 1px 2px rgba(0,0,0,.3)"><svg style="position:absolute;left:0;top:-0.0px" width="85" height="85" viewBox="0 0 85 85"><defs><linearGradient id="rp" x1="0" y1="0" x2="0" y2="1"><stop offset="0" stop-color="#030406"/><stop offset="0.5" stop-color="#0a0e18"/><stop offset="0.72" stop-color="#2a4468"/><stop offset="0.8" stop-color="#141e30"/><stop offset="1" stop-color="#080c14"/></linearGradient></defs><rect width="85" height="85" fill="url(#rp)"/>
<g filter="url(#b05)"><path d="M28 22 H52 M60 20 H84 M40 18 V28 M72 16 V26" stroke="#6a6a6a" stroke-width="1.6"/><path d="M22 38 L50 26 L72 24 L80 34 L70 44 L60 62 L46 66 L36 58 L24 50Z" fill="#4a4a50"/><path d="M30 36 L56 28 L62 34 L36 46Z" fill="#8a8a90"/><path d="M48 44 L64 40 L66 54 L52 62Z" fill="#2a2a30"/><path d="M56 46 L62 50 L58 58 L52 54Z" fill="#9a9a9a"/><path d="M26 50 L40 46 L42 52 L28 56Z" fill="#5a5a60"/></g><g filter="url(#b1)"><path d="M4 46 L26 38 L28 44 L6 50Z" fill="#ffb850"/><path d="M2 62 L24 54 L26 60 L4 66Z" fill="#f09040" fill-opacity="0.9"/><ellipse cx="26" cy="41" rx="4" ry="3" fill="#fff0c0"/><ellipse cx="25" cy="57" rx="3.5" ry="2.5" fill="#ffe0a0"/></g><rect x="0" y="58" width="85" height="27" fill="#000" fill-opacity="0.42"/></svg></div>
<div class="t" style="left:384.65px;top:376.00px;font-size:7.00px;color:#e4e4e4;text-shadow:0 0 1px rgba(0,0,0,.5);">Ricepod</div>
<div class="th" style="left:443.5px;top:307.5px;width:85px;height:85.0px;box-shadow:1px 1px 2px rgba(0,0,0,.3)"><svg style="position:absolute;left:0;top:-0.0px" width="85" height="85" viewBox="0 0 85 85"><rect width="85" height="85" fill="#5a7e3c"/><g filter="url(#b1)"><path d="M8 0 L25 0 Q30 14 26 24 Q22 36 30 46 Q36 56 30 62 L8 62 Q4 50 14 42 Q8 30 14 20 Q10 10 8 0Z" fill="#b0a080"/><rect x="0" y="0" width="85" height="8" fill="#6a8a50" fill-opacity="0.6"/></g><g fill="#f0f0f0"><ellipse cx="19" cy="25" rx="3.5" ry="2"/><ellipse cx="29" cy="32" rx="3.5" ry="2"/><ellipse cx="20" cy="44" rx="3.5" ry="2"/><ellipse cx="13" cy="54" rx="3.5" ry="2"/><ellipse cx="25" cy="54" rx="3.5" ry="2"/><ellipse cx="2" cy="40" rx="2.5" ry="2"/></g><rect x="0" y="58" width="85" height="27" fill="#1a3010" fill-opacity="0.6"/></svg></div>
<div class="t" style="left:476.50px;top:376.00px;font-size:7.00px;color:#e4e4e4;text-shadow:0 0 1px rgba(0,0,0,.5);">S</div>
<div class="th" style="left:266px;top:396.5px;width:85px;height:85.0px;box-shadow:1px 1px 2px rgba(0,0,0,.3)"><svg style="position:absolute;left:0;top:-0.0px" width="85" height="85" viewBox="0 0 85 85"><rect width="85" height="85" fill="#132828"/><g filter="url(#b05)"><path d="M17 30 Q17 4 42 4 Q68 4 68 30 Q70 44 64 52 L60 62 H24 L20 52 Q14 44 17 30Z" fill="#a08c6c"/><path d="M22 20 Q30 8 42 8 Q56 8 62 20 Q50 14 42 14 Q32 14 22 20Z" fill="#b8a484" fill-opacity="0.6"/><path d="M20 32 Q26 26 36 30 Q38 40 30 44 Q20 44 20 32Z" fill="#0e1210"/><path d="M64 32 Q58 26 48 30 Q46 40 54 44 Q64 44 64 32Z" fill="#0e1210"/><path d="M38 44 L46 44 L44 54 L40 54Z" fill="#141612"/><rect x="26" y="54" width="32" height="8" fill="#6a5a44"/><path d="M28 56 V62 M34 56 V62 M40 56 V62 M46 56 V62 M52 56 V62" stroke="#3a3024" stroke-width="1"/></g>
<rect x="0" y="58" width="85" height="27" fill="#000" fill-opacity="0.55"/></svg></div>
<div class="t" style="left:286.62px;top:460.00px;font-size:7.00px;color:#e4e4e4;text-shadow:0 0 1px rgba(0,0,0,.5);">Skull_3D骷髅头</div>
<div class="t" style="left:290.40px;top:470.00px;font-size:7.00px;color:#e4e4e4;text-shadow:0 0 1px rgba(0,0,0,.5);">[Interactive]</div>
<div class="th" style="left:355px;top:396.5px;width:85px;height:85.0px;box-shadow:1px 1px 2px rgba(0,0,0,.3)"><svg style="position:absolute;left:0;top:-0.0px" width="85" height="85" viewBox="0 0 85 85"><defs><radialGradient id="st" cx="0.5" cy="0.5" r="0.5"><stop offset="0" stop-color="#fff0b0"/><stop offset="0.1" stop-color="#c09a48"/><stop offset="0.4" stop-color="#3a2a10"/><stop offset="1" stop-color="#030201" stop-opacity="0"/></radialGradient></defs><rect width="85" height="85" fill="#030201"/><ellipse cx="46" cy="42" rx="42" ry="18" fill="url(#st)"/><g filter="url(#b1)"><ellipse cx="46" cy="43" rx="36" ry="2.2" fill="#d8b860" fill-opacity="0.7"/><ellipse cx="46" cy="43" rx="8" ry="3" fill="#fff4c8"/></g><circle cx="38.5" cy="43.6" r="0.67" fill="#d8b870" fill-opacity="0.43"/><circle cx="43.2" cy="45.2" r="0.37" fill="#d8b870" fill-opacity="0.46"/><circle cx="53.5" cy="57.6" r="0.34" fill="#d8b870" fill-opacity="0.35"/><circle cx="7.7" cy="58.6" r="0.58" fill="#d8b870" fill-opacity="0.22"/><circle cx="83.5" cy="67.9" r="0.56" fill="#d8b870" fill-opacity="0.51"/><circle cx="13.4" cy="10.9" r="0.51" fill="#d8b870" fill-opacity="0.23"/><circle cx="16.2" cy="24.5" r="0.31" fill="#d8b870" fill-opacity="0.43"/><circle cx="37.4" cy="60.5" r="0.51" fill="#d8b870" fill-opacity="0.52"/><circle cx="42.5" cy="49.7" r="0.48" fill="#d8b870" fill-opacity="0.34"/><circle cx="84.8" cy="69.7" r="0.64" fill="#d8b870" fill-opacity="0.55"/><circle cx="26.8" cy="23.8" r="0.42" fill="#d8b870" fill-opacity="0.24"/><circle cx="65.1" cy="34.0" r="0.64" fill="#d8b870" fill-opacity="0.39"/><circle cx="81.4" cy="60.8" r="0.30" fill="#d8b870" fill-opacity="0.30"/><circle cx="77.4" cy="38.2" r="0.69" fill="#d8b870" fill-opacity="0.40"/><circle cx="6.2" cy="47.8" r="0.61" fill="#d8b870" fill-opacity="0.33"/><circle cx="7.4" cy="30.0" r="0.69" fill="#d8b870" fill-opacity="0.58"/><circle cx="10.0" cy="24.8" r="0.34" fill="#d8b870" fill-opacity="0.23"/><circle cx="67.7" cy="20.7" r="0.52" fill="#d8b870" fill-opacity="0.42"/><circle cx="16.2" cy="53.9" r="0.35" fill="#d8b870" fill-opacity="0.52"/><circle cx="9.9" cy="35.2" r="0.39" fill="#d8b870" fill-opacity="0.33"/><circle cx="82.5" cy="58.2" r="0.42" fill="#d8b870" fill-opacity="0.64"/><circle cx="17.9" cy="33.7" r="0.64" fill="#d8b870" fill-opacity="0.52"/><circle cx="8.5" cy="69.4" r="0.39" fill="#d8b870" fill-opacity="0.33"/><circle cx="65.7" cy="29.7" r="0.42" fill="#d8b870" fill-opacity="0.24"/><circle cx="7.7" cy="45.0" r="0.40" fill="#d8b870" fill-opacity="0.50"/><circle cx="31.6" cy="37.2" r="0.68" fill="#d8b870" fill-opacity="0.44"/><circle cx="48.8" cy="62.0" r="0.37" fill="#d8b870" fill-opacity="0.28"/><circle cx="77.2" cy="59.1" r="0.40" fill="#d8b870" fill-opacity="0.29"/><circle cx="62.9" cy="66.4" r="0.38" fill="#d8b870" fill-opacity="0.68"/><circle cx="75.0" cy="46.2" r="0.47" fill="#d8b870" fill-opacity="0.25"/><circle cx="3.3" cy="67.8" r="0.40" fill="#d8b870" fill-opacity="0.55"/><circle cx="21.8" cy="59.4" r="0.54" fill="#d8b870" fill-opacity="0.35"/><circle cx="14.9" cy="53.2" r="0.33" fill="#d8b870" fill-opacity="0.31"/><circle cx="47.5" cy="61.1" r="0.55" fill="#d8b870" fill-opacity="0.34"/><circle cx="78.0" cy="22.2" r="0.31" fill="#d8b870" fill-opacity="0.33"/><circle cx="37.9" cy="13.6" r="0.37" fill="#d8b870" fill-opacity="0.38"/><circle cx="48.6" cy="17.9" r="0.44" fill="#d8b870" fill-opacity="0.65"/><circle cx="83.3" cy="49.4" r="0.58" fill="#d8b870" fill-opacity="0.49"/><circle cx="11.9" cy="12.1" r="0.31" fill="#d8b870" fill-opacity="0.66"/><circle cx="59.6" cy="67.8" r="0.31" fill="#d8b870" fill-opacity="0.52"/><circle cx="41.0" cy="53.8" r="0.43" fill="#d8b870" fill-opacity="0.70"/><circle cx="6.4" cy="42.8" r="0.59" fill="#d8b870" fill-opacity="0.65"/><circle cx="62.7" cy="52.2" r="0.62" fill="#d8b870" fill-opacity="0.66"/><circle cx="29.9" cy="51.1" r="0.66" fill="#d8b870" fill-opacity="0.64"/><circle cx="35.5" cy="57.4" r="0.65" fill="#d8b870" fill-opacity="0.49"/><circle cx="53.1" cy="32.9" r="0.53" fill="#d8b870" fill-opacity="0.50"/><circle cx="6.8" cy="48.4" r="0.70" fill="#d8b870" fill-opacity="0.64"/><circle cx="61.9" cy="33.3" r="0.59" fill="#d8b870" fill-opacity="0.49"/><circle cx="37.4" cy="60.3" r="0.33" fill="#d8b870" fill-opacity="0.58"/><circle cx="2.5" cy="46.1" r="0.49" fill="#d8b870" fill-opacity="0.32"/><circle cx="59.4" cy="39.8" r="0.55" fill="#d8b870" fill-opacity="0.66"/><circle cx="21.7" cy="10.7" r="0.42" fill="#d8b870" fill-opacity="0.54"/><circle cx="17.2" cy="20.2" r="0.66" fill="#d8b870" fill-opacity="0.53"/><circle cx="37.6" cy="63.5" r="0.43" fill="#d8b870" fill-opacity="0.53"/><circle cx="16.9" cy="35.9" r="0.62" fill="#d8b870" fill-opacity="0.66"/><circle cx="74.8" cy="33.1" r="0.53" fill="#d8b870" fill-opacity="0.36"/><circle cx="11.6" cy="39.8" r="0.63" fill="#d8b870" fill-opacity="0.62"/><circle cx="60.5" cy="67.0" r="0.41" fill="#d8b870" fill-opacity="0.28"/><circle cx="38.3" cy="26.5" r="0.39" fill="#d8b870" fill-opacity="0.41"/><circle cx="53.2" cy="39.6" r="0.43" fill="#d8b870" fill-opacity="0.62"/><circle cx="83.5" cy="37.1" r="0.33" fill="#d8b870" fill-opacity="0.22"/><circle cx="74.2" cy="12.5" r="0.58" fill="#d8b870" fill-opacity="0.49"/><circle cx="26.3" cy="57.5" r="0.31" fill="#d8b870" fill-opacity="0.27"/><circle cx="38.7" cy="11.5" r="0.63" fill="#d8b870" fill-opacity="0.32"/><circle cx="12.0" cy="12.8" r="0.55" fill="#d8b870" fill-opacity="0.42"/><circle cx="53.5" cy="49.3" r="0.62" fill="#d8b870" fill-opacity="0.68"/><circle cx="58.2" cy="22.0" r="0.49" fill="#d8b870" fill-opacity="0.29"/><circle cx="0.9" cy="38.3" r="0.59" fill="#d8b870" fill-opacity="0.29"/><circle cx="23.2" cy="30.7" r="0.58" fill="#d8b870" fill-opacity="0.46"/><circle cx="52.2" cy="55.4" r="0.46" fill="#d8b870" fill-opacity="0.60"/><circle cx="77.0" cy="15.2" r="0.67" fill="#d8b870" fill-opacity="0.56"/><circle cx="11.0" cy="37.2" r="0.55" fill="#d8b870" fill-opacity="0.65"/><circle cx="32.0" cy="44.1" r="0.65" fill="#d8b870" fill-opacity="0.60"/><circle cx="80.3" cy="37.8" r="0.56" fill="#d8b870" fill-opacity="0.30"/><circle cx="61.4" cy="59.1" r="0.56" fill="#d8b870" fill-opacity="0.56"/><circle cx="18.1" cy="64.0" r="0.69" fill="#d8b870" fill-opacity="0.69"/><circle cx="45.6" cy="57.4" r="0.43" fill="#d8b870" fill-opacity="0.65"/><circle cx="72.7" cy="30.9" r="0.33" fill="#d8b870" fill-opacity="0.42"/><circle cx="46.8" cy="56.1" r="0.49" fill="#d8b870" fill-opacity="0.21"/><circle cx="68.8" cy="13.8" r="0.62" fill="#d8b870" fill-opacity="0.29"/><circle cx="28.5" cy="57.3" r="0.36" fill="#d8b870" fill-opacity="0.27"/><circle cx="43.9" cy="53.4" r="0.64" fill="#d8b870" fill-opacity="0.54"/><circle cx="80.4" cy="39.6" r="0.68" fill="#d8b870" fill-opacity="0.24"/><circle cx="18.8" cy="41.6" r="0.42" fill="#d8b870" fill-opacity="0.56"/><circle cx="54.3" cy="41.4" r="0.64" fill="#d8b870" fill-opacity="0.48"/><circle cx="26.5" cy="32.9" r="0.64" fill="#d8b870" fill-opacity="0.65"/><circle cx="17.7" cy="61.0" r="0.69" fill="#d8b870" fill-opacity="0.46"/><circle cx="48.7" cy="22.1" r="0.51" fill="#d8b870" fill-opacity="0.45"/><circle cx="51.4" cy="11.7" r="0.69" fill="#d8b870" fill-opacity="0.46"/><circle cx="34.0" cy="58.1" r="0.53" fill="#d8b870" fill-opacity="0.45"/></svg></div>
<div class="t" style="left:356.85px;top:465.00px;font-size:7.00px;color:#e4e4e4;text-shadow:0 0 1px rgba(0,0,0,.5);">Star Travel (1080 60 FPS)</div>
<div class="th" style="left:443.5px;top:396.5px;width:85px;height:85.0px;box-shadow:1px 1px 2px rgba(0,0,0,.3)"><svg style="position:absolute;left:0;top:-0.0px" width="85" height="85" viewBox="0 0 85 85"><defs><linearGradient id="sw" x1="0" y1="0" x2="0" y2="1"><stop offset="0" stop-color="#2a3a4c"/><stop offset="0.6" stop-color="#4a5e74"/><stop offset="1" stop-color="#101820"/></linearGradient></defs><rect width="85" height="85" fill="url(#sw)"/><g filter="url(#b1)"><path d="M16 85 L22 32 Q28 18 34 32 L42 85Z" fill="#0a0e14"/></g><rect x="0" y="58" width="85" height="27" fill="#000" fill-opacity="0.45"/></svg></div>
<div class="t" style="left:444.75px;top:460.00px;font-size:7.00px;color:#e4e4e4;text-shadow:0 0 1px rgba(0,0,0,.5);">Star Wars E</div>
<div class="t" style="left:447.30px;top:470.00px;font-size:7.00px;color:#e4e4e4;text-shadow:0 0 1px rgba(0,0,0,.5);">Vader End</div>
<div class="th" style="left:266px;top:485.3px;width:85px;height:84.99999999999994px;box-shadow:1px 1px 2px rgba(0,0,0,.3)"><svg style="position:absolute;left:0;top:-0.0px" width="85" height="85" viewBox="0 0 85 85"><defs><linearGradient id="tr" x1="0" y1="0" x2="0" y2="1"><stop offset="0" stop-color="#1a60d8"/><stop offset="0.6" stop-color="#3a80e0"/><stop offset="1" stop-color="#2a5aa0"/></linearGradient></defs><rect width="85" height="85" fill="url(#tr)"/>
<g filter="url(#b1)"><path d="M22 0 Q32 6 28 14 Q38 16 36 24 Q48 26 50 36 Q62 32 72 40 Q80 38 85 44 V60 H0 V50 Q10 44 18 46 Q14 38 24 34 Q16 26 22 18 Q14 8 22 0Z" fill="#eef3fa"/><path d="M34 0 H62 Q56 6 46 5 Q40 8 34 0Z" fill="#dfe8f4"/><path d="M60 22 Q70 18 80 24 Q74 30 64 28Z" fill="#c8d8f0" fill-opacity="0.8"/><path d="M0 36 Q8 32 14 38 Q8 44 0 44Z" fill="#e0e8f4" fill-opacity="0.8"/></g>
<rect x="0" y="58" width="85" height="27" fill="#0e1e34"/><g fill="#3a6a8e" fill-opacity="0.7"><rect x="2" y="64" width="20" height="5"/><rect x="28" y="64" width="26" height="5"/><rect x="60" y="64" width="22" height="5"/><rect x="2" y="73" width="22" height="5"/><rect x="30" y="73" width="24" height="5"/><rect x="60" y="73" width="20" height="5"/></g></svg></div>
<div class="t" style="left:296.83px;top:553.00px;font-size:7.00px;color:#e4e4e4;text-shadow:0 0 1px rgba(0,0,0,.5);">Terrace</div>
<div class="th" style="left:355px;top:485.3px;width:85px;height:84.99999999999994px;box-shadow:1px 1px 2px rgba(0,0,0,.3)"><svg style="position:absolute;left:0;top:-0.0px" width="85" height="85" viewBox="0 0 85 85"><rect width="85" height="85" fill="#16161c"/><g filter="url(#b3)"><path d="M0 0 H35 L22 45 L0 55Z" fill="#3a5270" fill-opacity="0.75"/><path d="M58 10 Q80 30 85 85 H58Z" fill="#8a5420" fill-opacity="0.75"/></g><g filter="url(#b1)"><ellipse cx="42" cy="20" rx="7" ry="8" fill="#8a8070"/><path d="M24 36 Q42 24 60 36 L62 72 H22Z" fill="#262a32"/></g><rect x="0" y="58" width="85" height="27" fill="#000" fill-opacity="0.42"/></svg></div>
<div class="t" style="left:358.60px;top:549.00px;font-size:7.00px;color:#e4e4e4;text-shadow:0 0 1px rgba(0,0,0,.5);">The Witcher 3: Wild Hunt</div>
<div class="t" style="left:361.61px;top:560.00px;font-size:7.00px;color:#e4e4e4;text-shadow:0 0 1px rgba(0,0,0,.5);">Main Menu巫师3本体主…</div>
<div class="th" style="left:443.5px;top:485.3px;width:85px;height:84.99999999999994px;box-shadow:1px 1px 2px rgba(0,0,0,.3)"><svg style="position:absolute;left:0;top:-0.0px" width="85" height="85" viewBox="0 0 85 85"><rect width="85" height="85" fill="#303030"/><g filter="url(#b1)" fill="#c8c8c8"><path d="M6 4 Q20 0 30 10 Q36 20 28 26 Q20 22 12 18 Q4 12 6 4Z" fill-opacity="0.7"/><path d="M14 26 Q28 24 34 34 Q30 42 20 38 Q12 34 14 26Z" fill-opacity="0.6"/><path d="M8 48 Q20 44 30 52 Q34 60 24 62 Q12 60 8 48Z" fill-opacity="0.75"/><path d="M30 5 Q45 10 40 20 Q55 22 50 34 Q65 40 60 52 Q70 56 85 50 V0 H30Z" fill-opacity="0.45"/></g><circle cx="1.0" cy="7.0" r="0.65" fill="#ffffff" fill-opacity="0.54"/><circle cx="11.8" cy="7.0" r="0.51" fill="#ffffff" fill-opacity="0.58"/><circle cx="12.5" cy="45.9" r="0.90" fill="#ffffff" fill-opacity="0.27"/><circle cx="45.5" cy="27.8" r="0.67" fill="#ffffff" fill-opacity="0.70"/><circle cx="7.9" cy="1.3" r="1.15" fill="#ffffff" fill-opacity="0.40"/><circle cx="16.9" cy="20.5" r="0.63" fill="#ffffff" fill-opacity="0.68"/><circle cx="17.9" cy="13.4" r="0.83" fill="#ffffff" fill-opacity="0.47"/><circle cx="81.1" cy="52.0" r="0.62" fill="#ffffff" fill-opacity="0.30"/><circle cx="71.1" cy="61.3" r="0.33" fill="#ffffff" fill-opacity="0.57"/><circle cx="73.8" cy="40.4" r="0.50" fill="#ffffff" fill-opacity="0.60"/><circle cx="62.0" cy="12.0" r="0.88" fill="#ffffff" fill-opacity="0.31"/><circle cx="3.5" cy="20.8" r="0.60" fill="#ffffff" fill-opacity="0.40"/><circle cx="55.0" cy="51.8" r="1.17" fill="#ffffff" fill-opacity="0.69"/><circle cx="84.4" cy="49.0" r="0.58" fill="#ffffff" fill-opacity="0.29"/><circle cx="53.0" cy="33.8" r="0.91" fill="#ffffff" fill-opacity="0.25"/><circle cx="16.4" cy="57.1" r="0.84" fill="#ffffff" fill-opacity="0.55"/><circle cx="8.1" cy="24.7" r="1.12" fill="#ffffff" fill-opacity="0.52"/><circle cx="84.3" cy="12.2" r="0.71" fill="#ffffff" fill-opacity="0.60"/><circle cx="37.8" cy="48.9" r="0.81" fill="#ffffff" fill-opacity="0.26"/><circle cx="8.4" cy="60.9" r="0.41" fill="#ffffff" fill-opacity="0.30"/><circle cx="28.5" cy="44.2" r="1.07" fill="#ffffff" fill-opacity="0.44"/><circle cx="42.3" cy="48.9" r="0.55" fill="#ffffff" fill-opacity="0.39"/><circle cx="52.1" cy="39.4" r="0.33" fill="#ffffff" fill-opacity="0.26"/><circle cx="11.7" cy="45.0" r="0.92" fill="#ffffff" fill-opacity="0.69"/><circle cx="65.2" cy="15.8" r="0.99" fill="#ffffff" fill-opacity="0.69"/><circle cx="29.6" cy="0.7" r="0.64" fill="#ffffff" fill-opacity="0.34"/><circle cx="15.0" cy="2.8" r="0.41" fill="#ffffff" fill-opacity="0.63"/><circle cx="4.2" cy="38.1" r="0.49" fill="#ffffff" fill-opacity="0.30"/><circle cx="69.8" cy="18.5" r="0.47" fill="#ffffff" fill-opacity="0.43"/><circle cx="59.1" cy="32.5" r="1.07" fill="#ffffff" fill-opacity="0.40"/><circle cx="44.5" cy="44.5" r="0.72" fill="#ffffff" fill-opacity="0.56"/><circle cx="39.7" cy="8.3" r="0.41" fill="#ffffff" fill-opacity="0.59"/><circle cx="63.3" cy="58.5" r="0.92" fill="#ffffff" fill-opacity="0.49"/><circle cx="14.1" cy="52.9" r="0.41" fill="#ffffff" fill-opacity="0.41"/><circle cx="12.0" cy="23.6" r="0.58" fill="#ffffff" fill-opacity="0.41"/><circle cx="60.4" cy="33.6" r="0.52" fill="#ffffff" fill-opacity="0.59"/><circle cx="62.5" cy="51.3" r="0.33" fill="#ffffff" fill-opacity="0.51"/><circle cx="76.1" cy="16.0" r="0.48" fill="#ffffff" fill-opacity="0.61"/><circle cx="30.9" cy="24.9" r="1.04" fill="#ffffff" fill-opacity="0.39"/><circle cx="16.9" cy="13.3" r="0.61" fill="#ffffff" fill-opacity="0.55"/><circle cx="31.3" cy="47.8" r="0.36" fill="#ffffff" fill-opacity="0.32"/><circle cx="53.1" cy="29.7" r="0.75" fill="#ffffff" fill-opacity="0.67"/><circle cx="23.6" cy="11.3" r="0.33" fill="#ffffff" fill-opacity="0.44"/><circle cx="25.3" cy="29.4" r="0.31" fill="#ffffff" fill-opacity="0.20"/><circle cx="32.3" cy="47.0" r="0.57" fill="#ffffff" fill-opacity="0.66"/><circle cx="49.2" cy="25.0" r="1.00" fill="#ffffff" fill-opacity="0.32"/><circle cx="51.4" cy="52.5" r="0.79" fill="#ffffff" fill-opacity="0.36"/><circle cx="8.2" cy="35.6" r="0.47" fill="#ffffff" fill-opacity="0.39"/><circle cx="46.1" cy="58.3" r="0.91" fill="#ffffff" fill-opacity="0.46"/><circle cx="73.0" cy="19.1" r="0.65" fill="#ffffff" fill-opacity="0.54"/><circle cx="47.1" cy="13.7" r="0.67" fill="#ffffff" fill-opacity="0.61"/><circle cx="20.6" cy="43.8" r="0.34" fill="#ffffff" fill-opacity="0.68"/><circle cx="58.1" cy="20.1" r="1.18" fill="#ffffff" fill-opacity="0.60"/><circle cx="5.2" cy="15.4" r="0.74" fill="#ffffff" fill-opacity="0.70"/><circle cx="12.0" cy="3.0" r="0.58" fill="#ffffff" fill-opacity="0.22"/><circle cx="34.8" cy="33.4" r="0.70" fill="#ffffff" fill-opacity="0.27"/><circle cx="2.0" cy="49.8" r="0.70" fill="#ffffff" fill-opacity="0.44"/><circle cx="40.6" cy="42.5" r="1.11" fill="#ffffff" fill-opacity="0.61"/><circle cx="61.8" cy="21.0" r="0.45" fill="#ffffff" fill-opacity="0.24"/><circle cx="73.0" cy="3.5" r="0.81" fill="#ffffff" fill-opacity="0.65"/><circle cx="27.4" cy="24.1" r="0.68" fill="#ffffff" fill-opacity="0.67"/><circle cx="58.2" cy="52.0" r="0.33" fill="#ffffff" fill-opacity="0.57"/><circle cx="38.3" cy="24.9" r="1.03" fill="#ffffff" fill-opacity="0.57"/><circle cx="77.4" cy="45.8" r="1.12" fill="#ffffff" fill-opacity="0.41"/><circle cx="47.3" cy="48.7" r="0.71" fill="#ffffff" fill-opacity="0.27"/><circle cx="49.8" cy="54.0" r="1.08" fill="#ffffff" fill-opacity="0.26"/><circle cx="32.4" cy="14.2" r="0.61" fill="#ffffff" fill-opacity="0.68"/><circle cx="35.8" cy="19.4" r="0.55" fill="#ffffff" fill-opacity="0.42"/><circle cx="56.9" cy="21.2" r="0.47" fill="#ffffff" fill-opacity="0.31"/><circle cx="22.1" cy="56.2" r="0.45" fill="#ffffff" fill-opacity="0.58"/><rect x="0" y="58" width="85" height="27" fill="#000" fill-opacity="0.6"/><g filter="url(#b1)"><path d="M20 70 Q35 64 50 72 Q40 80 24 78Z" fill="#9a9a9a" fill-opacity="0.6"/></g></svg></div>
<div class="t" style="left:471.02px;top:553.00px;font-size:7.00px;color:#e4e4e4;text-shadow:0 0 1px rgba(0,0,0,.5);">The Spirit</div>
<div class="th" style="left:532px;top:485.3px;width:85px;height:84.99999999999994px;box-shadow:1px 1px 2px rgba(0,0,0,.3)"><svg style="position:absolute;left:0;top:-0.0px" width="85" height="85" viewBox="0 0 85 85"><defs><linearGradient id="tl5" x1="0" y1="0" x2="1" y2="0"><stop offset="0" stop-color="#34445a"/><stop offset="0.5" stop-color="#1c2838"/><stop offset="1" stop-color="#0c1420"/></linearGradient></defs><rect width="85" height="85" fill="url(#tl5)"/><path d="M0 78 L8 74 L15 76 L22 70 L30 74 L38 68 L45 72 L52 76 L60 74 L85 72 V85 H0Z" fill="#141c26"/><rect x="0" y="58" width="85" height="27" fill="#000" fill-opacity="0.42"/></svg></div>
<div class="t" style="left:557.51px;top:553.00px;font-size:7.00px;color:#e4e4e4;text-shadow:0 0 1px rgba(0,0,0,.5);">Time lapse</div>
<div class="a" style="left:532px;top:485.3px;width:85px;height:84.99999999999994px;border:2px solid #1a70c8;box-shadow:0 0 2px #4a9ae8"></div>
<div class="th" style="left:621px;top:485.3px;width:85px;height:84.99999999999994px;box-shadow:1px 1px 2px rgba(0,0,0,.3)"><svg style="position:absolute;left:0;top:-0.0px" width="85" height="85" viewBox="0 0 85 85"><rect width="85" height="85" fill="#1c140a"/><g filter="url(#b3)"><ellipse cx="45" cy="78" rx="35" ry="9" fill="#7a5a22" fill-opacity="0.7"/></g><rect x="0" y="58" width="85" height="27" fill="#000" fill-opacity="0.42"/></svg></div>
<div class="t" style="left:637.83px;top:553.00px;font-size:7.00px;color:#e4e4e4;text-shadow:0 0 1px rgba(0,0,0,.5);">UNRAVEL 60fps</div>
<div class="th" style="left:709px;top:485.3px;width:85px;height:84.99999999999994px;box-shadow:1px 1px 2px rgba(0,0,0,.3)"><svg style="position:absolute;left:0;top:-0.0px" width="85" height="85" viewBox="0 0 85 85"><rect width="85" height="85" fill="#0a0e1e"/><g filter="url(#b1)"><path d="M30 80 Q50 70 85 74 L85 82 Q55 78 35 85Z" fill="#a81c1c" fill-opacity="0.7"/><path d="M10 70 Q30 60 60 68" stroke="#3a4a80" stroke-width="2" fill="none"/></g><rect x="0" y="58" width="85" height="27" fill="#000" fill-opacity="0.42"/></svg></div>
<div class="t" style="left:736.92px;top:553.00px;font-size:7.00px;color:#e4e4e4;text-shadow:0 0 1px rgba(0,0,0,.5);">WRMMM</div>
<svg class="a" style="left:834px;top:91px" width="173" height="173" viewBox="834 91 173 173">
<defs><linearGradient id="pv" x1="0" y1="0" x2="0.3" y2="1"><stop offset="0" stop-color="#1c2838"/><stop offset="0.45" stop-color="#2a3a50"/><stop offset="0.8" stop-color="#4e6078"/><stop offset="1" stop-color="#58687e"/></linearGradient></defs>
<rect x="834" y="91" width="173" height="173" fill="url(#pv)"/>
<g transform="translate(834 91)"><circle cx="28.5" cy="119.3" r="0.43" fill="#c0ccd8" fill-opacity="0.39"/><circle cx="37.4" cy="137.1" r="0.46" fill="#c0ccd8" fill-opacity="0.40"/><circle cx="87.4" cy="40.8" r="0.30" fill="#c0ccd8" fill-opacity="0.35"/><circle cx="101.3" cy="12.0" r="0.46" fill="#c0ccd8" fill-opacity="0.29"/><circle cx="40.3" cy="7.3" r="0.50" fill="#c0ccd8" fill-opacity="0.50"/><circle cx="151.4" cy="106.5" r="0.31" fill="#c0ccd8" fill-opacity="0.33"/><circle cx="86.1" cy="20.0" r="0.49" fill="#c0ccd8" fill-opacity="0.35"/><circle cx="26.8" cy="141.4" r="0.32" fill="#c0ccd8" fill-opacity="0.57"/><circle cx="78.4" cy="95.5" r="0.37" fill="#c0ccd8" fill-opacity="0.39"/><circle cx="32.3" cy="6.4" r="0.47" fill="#c0ccd8" fill-opacity="0.29"/><circle cx="135.0" cy="36.1" r="0.49" fill="#c0ccd8" fill-opacity="0.56"/><circle cx="130.6" cy="132.0" r="0.42" fill="#c0ccd8" fill-opacity="0.49"/><circle cx="21.2" cy="82.4" r="0.47" fill="#c0ccd8" fill-opacity="0.28"/><circle cx="159.7" cy="153.5" r="0.38" fill="#c0ccd8" fill-opacity="0.35"/><circle cx="78.1" cy="66.7" r="0.50" fill="#c0ccd8" fill-opacity="0.35"/><circle cx="4.6" cy="16.1" r="0.44" fill="#c0ccd8" fill-opacity="0.60"/><circle cx="85.8" cy="85.0" r="0.41" fill="#c0ccd8" fill-opacity="0.50"/><circle cx="38.4" cy="105.3" r="0.41" fill="#c0ccd8" fill-opacity="0.45"/><circle cx="31.3" cy="29.4" r="0.37" fill="#c0ccd8" fill-opacity="0.57"/><circle cx="60.0" cy="103.3" r="0.36" fill="#c0ccd8" fill-opacity="0.24"/><circle cx="11.4" cy="140.8" r="0.46" fill="#c0ccd8" fill-opacity="0.35"/><circle cx="118.2" cy="116.9" r="0.48" fill="#c0ccd8" fill-opacity="0.58"/><circle cx="70.4" cy="171.1" r="0.49" fill="#c0ccd8" fill-opacity="0.44"/><circle cx="152.8" cy="84.9" r="0.38" fill="#c0ccd8" fill-opacity="0.30"/><circle cx="151.6" cy="28.1" r="0.31" fill="#c0ccd8" fill-opacity="0.52"/><circle cx="133.9" cy="83.6" r="0.47" fill="#c0ccd8" fill-opacity="0.22"/><circle cx="44.6" cy="50.1" r="0.38" fill="#c0ccd8" fill-opacity="0.27"/><circle cx="12.0" cy="58.5" r="0.48" fill="#c0ccd8" fill-opacity="0.59"/><circle cx="129.0" cy="82.9" r="0.35" fill="#c0ccd8" fill-opacity="0.58"/><circle cx="90.9" cy="126.0" r="0.31" fill="#c0ccd8" fill-opacity="0.28"/><circle cx="145.0" cy="137.6" r="0.48" fill="#c0ccd8" fill-opacity="0.44"/><circle cx="73.7" cy="100.5" r="0.47" fill="#c0ccd8" fill-opacity="0.32"/><circle cx="92.4" cy="47.7" r="0.45" fill="#c0ccd8" fill-opacity="0.20"/><circle cx="118.6" cy="165.0" r="0.30" fill="#c0ccd8" fill-opacity="0.44"/><circle cx="111.4" cy="147.3" r="0.42" fill="#c0ccd8" fill-opacity="0.30"/><circle cx="70.2" cy="165.9" r="0.48" fill="#c0ccd8" fill-opacity="0.25"/><circle cx="16.4" cy="16.3" r="0.31" fill="#c0ccd8" fill-opacity="0.38"/><circle cx="24.4" cy="150.0" r="0.43" fill="#c0ccd8" fill-opacity="0.25"/><circle cx="93.2" cy="56.1" r="0.40" fill="#c0ccd8" fill-opacity="0.29"/><circle cx="28.7" cy="31.8" r="0.38" fill="#c0ccd8" fill-opacity="0.48"/><circle cx="95.2" cy="8.0" r="0.44" fill="#c0ccd8" fill-opacity="0.55"/><circle cx="133.9" cy="136.8" r="0.30" fill="#c0ccd8" fill-opacity="0.39"/><circle cx="11.0" cy="132.2" r="0.34" fill="#c0ccd8" fill-opacity="0.48"/><circle cx="43.8" cy="120.5" r="0.36" fill="#c0ccd8" fill-opacity="0.22"/><circle cx="67.3" cy="53.5" r="0.48" fill="#c0ccd8" fill-opacity="0.32"/><circle cx="87.0" cy="95.0" r="0.49" fill="#c0ccd8" fill-opacity="0.24"/><circle cx="104.0" cy="87.9" r="0.45" fill="#c0ccd8" fill-opacity="0.59"/><circle cx="53.7" cy="121.0" r="0.41" fill="#c0ccd8" fill-opacity="0.42"/><circle cx="11.0" cy="140.9" r="0.50" fill="#c0ccd8" fill-opacity="0.34"/><circle cx="55.0" cy="171.8" r="0.32" fill="#c0ccd8" fill-opacity="0.23"/><circle cx="12.7" cy="140.9" r="0.45" fill="#c0ccd8" fill-opacity="0.38"/><circle cx="107.5" cy="3.4" r="0.43" fill="#c0ccd8" fill-opacity="0.38"/><circle cx="89.5" cy="67.4" r="0.38" fill="#c0ccd8" fill-opacity="0.29"/><circle cx="8.4" cy="75.1" r="0.35" fill="#c0ccd8" fill-opacity="0.48"/><circle cx="141.4" cy="125.2" r="0.39" fill="#c0ccd8" fill-opacity="0.29"/><circle cx="66.7" cy="84.2" r="0.43" fill="#c0ccd8" fill-opacity="0.59"/><circle cx="14.8" cy="83.0" r="0.40" fill="#c0ccd8" fill-opacity="0.49"/><circle cx="154.1" cy="134.9" r="0.43" fill="#c0ccd8" fill-opacity="0.50"/><circle cx="115.6" cy="148.6" r="0.44" fill="#c0ccd8" fill-opacity="0.47"/><circle cx="42.4" cy="158.6" r="0.38" fill="#c0ccd8" fill-opacity="0.45"/><circle cx="142.7" cy="166.7" r="0.50" fill="#c0ccd8" fill-opacity="0.20"/><circle cx="54.1" cy="53.9" r="0.38" fill="#c0ccd8" fill-opacity="0.26"/><circle cx="95.7" cy="13.8" r="0.36" fill="#c0ccd8" fill-opacity="0.58"/><circle cx="128.4" cy="80.0" r="0.32" fill="#c0ccd8" fill-opacity="0.58"/><circle cx="121.8" cy="35.6" r="0.37" fill="#c0ccd8" fill-opacity="0.46"/><circle cx="117.9" cy="45.1" r="0.49" fill="#c0ccd8" fill-opacity="0.33"/><circle cx="44.0" cy="146.2" r="0.33" fill="#c0ccd8" fill-opacity="0.47"/><circle cx="34.6" cy="103.4" r="0.36" fill="#c0ccd8" fill-opacity="0.35"/><circle cx="162.7" cy="80.8" r="0.39" fill="#c0ccd8" fill-opacity="0.45"/><circle cx="48.5" cy="30.2" r="0.38" fill="#c0ccd8" fill-opacity="0.31"/><circle cx="32.6" cy="166.2" r="0.31" fill="#c0ccd8" fill-opacity="0.52"/><circle cx="161.7" cy="121.9" r="0.30" fill="#c0ccd8" fill-opacity="0.40"/><circle cx="6.8" cy="105.2" r="0.44" fill="#c0ccd8" fill-opacity="0.30"/><circle cx="1.3" cy="94.2" r="0.32" fill="#c0ccd8" fill-opacity="0.32"/><circle cx="78.6" cy="154.7" r="0.37" fill="#c0ccd8" fill-opacity="0.25"/><circle cx="137.0" cy="142.3" r="0.41" fill="#c0ccd8" fill-opacity="0.22"/><circle cx="32.5" cy="69.7" r="0.41" fill="#c0ccd8" fill-opacity="0.29"/><circle cx="138.8" cy="145.9" r="0.49" fill="#c0ccd8" fill-opacity="0.55"/><circle cx="3.0" cy="100.7" r="0.32" fill="#c0ccd8" fill-opacity="0.56"/><circle cx="129.2" cy="131.4" r="0.34" fill="#c0ccd8" fill-opacity="0.22"/><circle cx="141.0" cy="104.9" r="0.42" fill="#c0ccd8" fill-opacity="0.39"/><circle cx="138.4" cy="58.5" r="0.35" fill="#c0ccd8" fill-opacity="0.34"/><circle cx="51.6" cy="108.5" r="0.48" fill="#c0ccd8" fill-opacity="0.23"/><circle cx="11.7" cy="88.5" r="0.44" fill="#c0ccd8" fill-opacity="0.28"/><circle cx="46.7" cy="10.2" r="0.31" fill="#c0ccd8" fill-opacity="0.40"/><circle cx="117.8" cy="113.0" r="0.33" fill="#c0ccd8" fill-opacity="0.24"/><circle cx="161.0" cy="93.2" r="0.38" fill="#c0ccd8" fill-opacity="0.48"/><circle cx="125.9" cy="90.8" r="0.32" fill="#c0ccd8" fill-opacity="0.53"/><circle cx="37.0" cy="7.0" r="0.37" fill="#c0ccd8" fill-opacity="0.41"/><circle cx="108.7" cy="30.1" r="0.44" fill="#c0ccd8" fill-opacity="0.40"/><circle cx="28.0" cy="147.2" r="0.46" fill="#c0ccd8" fill-opacity="0.56"/><circle cx="117.5" cy="37.6" r="0.46" fill="#c0ccd8" fill-opacity="0.56"/><circle cx="92.3" cy="157.2" r="0.49" fill="#c0ccd8" fill-opacity="0.36"/><circle cx="162.9" cy="162.1" r="0.46" fill="#c0ccd8" fill-opacity="0.20"/><circle cx="60.9" cy="106.2" r="0.42" fill="#c0ccd8" fill-opacity="0.50"/><circle cx="111.9" cy="27.9" r="0.49" fill="#c0ccd8" fill-opacity="0.41"/><circle cx="152.5" cy="35.8" r="0.50" fill="#c0ccd8" fill-opacity="0.42"/><circle cx="134.2" cy="128.0" r="0.48" fill="#c0ccd8" fill-opacity="0.34"/><circle cx="14.3" cy="70.2" r="0.34" fill="#c0ccd8" fill-opacity="0.42"/><circle cx="141.0" cy="62.7" r="0.33" fill="#c0ccd8" fill-opacity="0.21"/><circle cx="73.2" cy="100.4" r="0.31" fill="#c0ccd8" fill-opacity="0.47"/><circle cx="36.5" cy="18.5" r="0.49" fill="#c0ccd8" fill-opacity="0.41"/><circle cx="154.8" cy="88.9" r="0.32" fill="#c0ccd8" fill-opacity="0.30"/><circle cx="73.4" cy="110.9" r="0.45" fill="#c0ccd8" fill-opacity="0.50"/><circle cx="112.6" cy="43.8" r="0.39" fill="#c0ccd8" fill-opacity="0.35"/><circle cx="84.7" cy="45.9" r="0.41" fill="#c0ccd8" fill-opacity="0.38"/><circle cx="6.2" cy="142.4" r="0.42" fill="#c0ccd8" fill-opacity="0.52"/><circle cx="127.4" cy="126.4" r="0.50" fill="#c0ccd8" fill-opacity="0.35"/><circle cx="68.1" cy="0.6" r="0.43" fill="#c0ccd8" fill-opacity="0.43"/><circle cx="99.7" cy="172.6" r="0.34" fill="#c0ccd8" fill-opacity="0.29"/><circle cx="127.0" cy="140.5" r="0.40" fill="#c0ccd8" fill-opacity="0.22"/><circle cx="64.1" cy="143.0" r="0.40" fill="#c0ccd8" fill-opacity="0.38"/><circle cx="67.4" cy="108.7" r="0.42" fill="#c0ccd8" fill-opacity="0.48"/><circle cx="149.7" cy="130.0" r="0.37" fill="#c0ccd8" fill-opacity="0.30"/><circle cx="135.3" cy="137.2" r="0.49" fill="#c0ccd8" fill-opacity="0.28"/><circle cx="146.7" cy="154.1" r="0.32" fill="#c0ccd8" fill-opacity="0.32"/><circle cx="109.6" cy="25.3" r="0.47" fill="#c0ccd8" fill-opacity="0.31"/><circle cx="118.0" cy="51.2" r="0.34" fill="#c0ccd8" fill-opacity="0.28"/><circle cx="86.1" cy="123.4" r="0.34" fill="#c0ccd8" fill-opacity="0.47"/><circle cx="58.0" cy="112.3" r="0.37" fill="#c0ccd8" fill-opacity="0.28"/><circle cx="24.4" cy="10.0" r="0.44" fill="#c0ccd8" fill-opacity="0.37"/><circle cx="21.3" cy="152.3" r="0.43" fill="#c0ccd8" fill-opacity="0.21"/><circle cx="125.4" cy="102.9" r="0.39" fill="#c0ccd8" fill-opacity="0.40"/><circle cx="166.5" cy="64.7" r="0.43" fill="#c0ccd8" fill-opacity="0.45"/><circle cx="63.3" cy="59.9" r="0.45" fill="#c0ccd8" fill-opacity="0.45"/><circle cx="79.0" cy="88.9" r="0.34" fill="#c0ccd8" fill-opacity="0.52"/><circle cx="3.4" cy="111.3" r="0.39" fill="#c0ccd8" fill-opacity="0.29"/><circle cx="101.5" cy="100.9" r="0.32" fill="#c0ccd8" fill-opacity="0.40"/><circle cx="28.6" cy="138.2" r="0.37" fill="#c0ccd8" fill-opacity="0.33"/><circle cx="37.3" cy="8.3" r="0.34" fill="#c0ccd8" fill-opacity="0.26"/><circle cx="108.0" cy="146.6" r="0.34" fill="#c0ccd8" fill-opacity="0.24"/><circle cx="92.5" cy="20.0" r="0.38" fill="#c0ccd8" fill-opacity="0.50"/><circle cx="35.1" cy="121.0" r="0.41" fill="#c0ccd8" fill-opacity="0.23"/><circle cx="42.0" cy="103.7" r="0.32" fill="#c0ccd8" fill-opacity="0.28"/><circle cx="99.8" cy="141.5" r="0.40" fill="#c0ccd8" fill-opacity="0.47"/><circle cx="1.6" cy="52.4" r="0.36" fill="#c0ccd8" fill-opacity="0.57"/><circle cx="61.9" cy="135.8" r="0.31" fill="#c0ccd8" fill-opacity="0.40"/><circle cx="154.2" cy="133.4" r="0.42" fill="#c0ccd8" fill-opacity="0.27"/><circle cx="160.2" cy="13.8" r="0.49" fill="#c0ccd8" fill-opacity="0.51"/><circle cx="124.5" cy="91.8" r="0.33" fill="#c0ccd8" fill-opacity="0.34"/><circle cx="114.9" cy="113.5" r="0.38" fill="#c0ccd8" fill-opacity="0.52"/><circle cx="9.2" cy="49.7" r="0.32" fill="#c0ccd8" fill-opacity="0.33"/><circle cx="137.2" cy="130.3" r="0.33" fill="#c0ccd8" fill-opacity="0.32"/><circle cx="19.4" cy="114.5" r="0.39" fill="#c0ccd8" fill-opacity="0.29"/><circle cx="64.7" cy="149.7" r="0.39" fill="#c0ccd8" fill-opacity="0.48"/><circle cx="108.6" cy="81.9" r="0.41" fill="#c0ccd8" fill-opacity="0.35"/><circle cx="34.3" cy="85.5" r="0.36" fill="#c0ccd8" fill-opacity="0.33"/><circle cx="32.3" cy="158.0" r="0.39" fill="#c0ccd8" fill-opacity="0.28"/><circle cx="5.5" cy="37.1" r="0.47" fill="#c0ccd8" fill-opacity="0.33"/><circle cx="115.4" cy="39.9" r="0.43" fill="#c0ccd8" fill-opacity="0.38"/><circle cx="127.4" cy="91.4" r="0.38" fill="#c0ccd8" fill-opacity="0.31"/><circle cx="102.8" cy="143.9" r="0.44" fill="#c0ccd8" fill-opacity="0.39"/><circle cx="56.8" cy="154.2" r="0.47" fill="#c0ccd8" fill-opacity="0.26"/><circle cx="117.5" cy="133.6" r="0.44" fill="#c0ccd8" fill-opacity="0.59"/><circle cx="152.1" cy="42.6" r="0.50" fill="#c0ccd8" fill-opacity="0.33"/><circle cx="65.7" cy="168.9" r="0.33" fill="#c0ccd8" fill-opacity="0.36"/><circle cx="108.3" cy="47.2" r="0.35" fill="#c0ccd8" fill-opacity="0.52"/><circle cx="106.0" cy="128.7" r="0.46" fill="#c0ccd8" fill-opacity="0.55"/><circle cx="154.6" cy="142.4" r="0.50" fill="#c0ccd8" fill-opacity="0.40"/><circle cx="121.4" cy="88.9" r="0.49" fill="#c0ccd8" fill-opacity="0.46"/><circle cx="74.5" cy="114.9" r="0.36" fill="#c0ccd8" fill-opacity="0.25"/><circle cx="66.8" cy="23.7" r="0.30" fill="#c0ccd8" fill-opacity="0.24"/><circle cx="78.6" cy="132.1" r="0.31" fill="#c0ccd8" fill-opacity="0.45"/><circle cx="19.3" cy="88.3" r="0.36" fill="#c0ccd8" fill-opacity="0.38"/><circle cx="123.2" cy="71.5" r="0.38" fill="#c0ccd8" fill-opacity="0.49"/><circle cx="20.0" cy="60.4" r="0.44" fill="#c0ccd8" fill-opacity="0.53"/><circle cx="169.4" cy="44.5" r="0.43" fill="#c0ccd8" fill-opacity="0.33"/><circle cx="121.4" cy="146.4" r="0.33" fill="#c0ccd8" fill-opacity="0.34"/><circle cx="162.0" cy="61.0" r="0.43" fill="#c0ccd8" fill-opacity="0.53"/><circle cx="48.2" cy="135.5" r="0.30" fill="#c0ccd8" fill-opacity="0.34"/><circle cx="28.9" cy="59.8" r="0.34" fill="#c0ccd8" fill-opacity="0.21"/><circle cx="138.9" cy="30.0" r="0.41" fill="#c0ccd8" fill-opacity="0.42"/><circle cx="147.0" cy="146.5" r="0.42" fill="#c0ccd8" fill-opacity="0.27"/><circle cx="131.6" cy="16.9" r="0.49" fill="#c0ccd8" fill-opacity="0.32"/><circle cx="43.7" cy="37.5" r="0.38" fill="#c0ccd8" fill-opacity="0.52"/><circle cx="147.9" cy="129.1" r="0.45" fill="#c0ccd8" fill-opacity="0.30"/><circle cx="55.6" cy="52.6" r="0.39" fill="#c0ccd8" fill-opacity="0.55"/><circle cx="172.3" cy="14.5" r="0.49" fill="#c0ccd8" fill-opacity="0.57"/><circle cx="79.7" cy="119.9" r="0.46" fill="#c0ccd8" fill-opacity="0.27"/><circle cx="106.5" cy="169.8" r="0.48" fill="#c0ccd8" fill-opacity="0.56"/><circle cx="14.7" cy="123.6" r="0.40" fill="#c0ccd8" fill-opacity="0.56"/><circle cx="28.9" cy="94.9" r="0.32" fill="#c0ccd8" fill-opacity="0.52"/><circle cx="125.0" cy="5.4" r="0.36" fill="#c0ccd8" fill-opacity="0.26"/><circle cx="109.9" cy="109.0" r="0.31" fill="#c0ccd8" fill-opacity="0.58"/><circle cx="167.0" cy="76.2" r="0.41" fill="#c0ccd8" fill-opacity="0.35"/><circle cx="104.9" cy="68.9" r="0.39" fill="#c0ccd8" fill-opacity="0.50"/><circle cx="32.3" cy="51.6" r="0.45" fill="#c0ccd8" fill-opacity="0.29"/><circle cx="11.9" cy="157.7" r="0.33" fill="#c0ccd8" fill-opacity="0.36"/><circle cx="54.2" cy="45.3" r="0.37" fill="#c0ccd8" fill-opacity="0.41"/><circle cx="20.1" cy="92.3" r="0.31" fill="#c0ccd8" fill-opacity="0.23"/><circle cx="35.0" cy="41.6" r="0.37" fill="#c0ccd8" fill-opacity="0.32"/><circle cx="144.8" cy="113.8" r="0.39" fill="#c0ccd8" fill-opacity="0.51"/><circle cx="118.7" cy="54.6" r="0.42" fill="#c0ccd8" fill-opacity="0.50"/><circle cx="92.4" cy="130.2" r="0.43" fill="#c0ccd8" fill-opacity="0.57"/><circle cx="45.7" cy="116.2" r="0.50" fill="#c0ccd8" fill-opacity="0.41"/><circle cx="156.6" cy="16.4" r="0.44" fill="#c0ccd8" fill-opacity="0.31"/><circle cx="129.8" cy="73.3" r="0.41" fill="#c0ccd8" fill-opacity="0.30"/><circle cx="44.5" cy="149.7" r="0.43" fill="#c0ccd8" fill-opacity="0.45"/><circle cx="20.0" cy="50.7" r="0.49" fill="#c0ccd8" fill-opacity="0.28"/><circle cx="93.0" cy="120.5" r="0.40" fill="#c0ccd8" fill-opacity="0.42"/><circle cx="167.8" cy="135.2" r="0.35" fill="#c0ccd8" fill-opacity="0.37"/><circle cx="72.6" cy="118.3" r="0.43" fill="#c0ccd8" fill-opacity="0.30"/><circle cx="119.8" cy="74.6" r="0.30" fill="#c0ccd8" fill-opacity="0.32"/><circle cx="65.2" cy="34.1" r="0.43" fill="#c0ccd8" fill-opacity="0.60"/><circle cx="161.2" cy="108.9" r="0.47" fill="#c0ccd8" fill-opacity="0.40"/><circle cx="101.5" cy="154.6" r="0.31" fill="#c0ccd8" fill-opacity="0.34"/><circle cx="64.7" cy="59.0" r="0.39" fill="#c0ccd8" fill-opacity="0.22"/><circle cx="117.5" cy="165.5" r="0.35" fill="#c0ccd8" fill-opacity="0.27"/><circle cx="57.9" cy="137.8" r="0.35" fill="#c0ccd8" fill-opacity="0.51"/><circle cx="29.9" cy="102.9" r="0.44" fill="#c0ccd8" fill-opacity="0.47"/><circle cx="14.6" cy="165.5" r="0.47" fill="#c0ccd8" fill-opacity="0.39"/><circle cx="148.7" cy="104.0" r="0.33" fill="#c0ccd8" fill-opacity="0.36"/><circle cx="142.0" cy="80.2" r="0.31" fill="#c0ccd8" fill-opacity="0.27"/><circle cx="32.2" cy="101.4" r="0.43" fill="#c0ccd8" fill-opacity="0.38"/><circle cx="69.8" cy="166.6" r="0.37" fill="#c0ccd8" fill-opacity="0.47"/><circle cx="35.4" cy="88.9" r="0.34" fill="#c0ccd8" fill-opacity="0.25"/><circle cx="58.3" cy="19.9" r="0.38" fill="#c0ccd8" fill-opacity="0.46"/><circle cx="95.0" cy="137.6" r="0.40" fill="#c0ccd8" fill-opacity="0.23"/><circle cx="125.8" cy="69.5" r="0.45" fill="#c0ccd8" fill-opacity="0.59"/><circle cx="90.7" cy="43.3" r="0.37" fill="#c0ccd8" fill-opacity="0.40"/><circle cx="55.2" cy="17.5" r="0.38" fill="#c0ccd8" fill-opacity="0.46"/><circle cx="141.2" cy="131.8" r="0.48" fill="#c0ccd8" fill-opacity="0.52"/><circle cx="71.2" cy="111.5" r="0.31" fill="#c0ccd8" fill-opacity="0.52"/><circle cx="122.5" cy="45.9" r="0.39" fill="#c0ccd8" fill-opacity="0.31"/><circle cx="137.6" cy="73.8" r="0.46" fill="#c0ccd8" fill-opacity="0.57"/><circle cx="134.5" cy="65.8" r="0.37" fill="#c0ccd8" fill-opacity="0.58"/><circle cx="156.5" cy="32.8" r="0.37" fill="#c0ccd8" fill-opacity="0.52"/><circle cx="130.9" cy="49.0" r="0.39" fill="#c0ccd8" fill-opacity="0.58"/><circle cx="15.6" cy="47.4" r="0.43" fill="#c0ccd8" fill-opacity="0.56"/><circle cx="163.8" cy="81.2" r="0.46" fill="#c0ccd8" fill-opacity="0.59"/><circle cx="57.0" cy="39.4" r="0.35" fill="#c0ccd8" fill-opacity="0.51"/><circle cx="24.1" cy="94.6" r="0.49" fill="#c0ccd8" fill-opacity="0.28"/><circle cx="108.8" cy="91.7" r="0.49" fill="#c0ccd8" fill-opacity="0.41"/><circle cx="84.9" cy="156.3" r="0.45" fill="#c0ccd8" fill-opacity="0.26"/><circle cx="139.1" cy="69.1" r="0.49" fill="#c0ccd8" fill-opacity="0.59"/><circle cx="85.3" cy="72.0" r="0.35" fill="#c0ccd8" fill-opacity="0.31"/><circle cx="35.7" cy="29.1" r="0.45" fill="#c0ccd8" fill-opacity="0.22"/><circle cx="103.6" cy="103.4" r="0.45" fill="#c0ccd8" fill-opacity="0.43"/><circle cx="160.4" cy="48.7" r="0.32" fill="#c0ccd8" fill-opacity="0.43"/><circle cx="46.6" cy="170.9" r="0.48" fill="#c0ccd8" fill-opacity="0.48"/><circle cx="144.2" cy="42.3" r="0.40" fill="#c0ccd8" fill-opacity="0.35"/><circle cx="59.7" cy="64.7" r="0.40" fill="#c0ccd8" fill-opacity="0.46"/><circle cx="4.4" cy="93.3" r="0.33" fill="#c0ccd8" fill-opacity="0.59"/><circle cx="95.5" cy="101.9" r="0.36" fill="#c0ccd8" fill-opacity="0.48"/><circle cx="122.8" cy="157.4" r="0.42" fill="#c0ccd8" fill-opacity="0.31"/><circle cx="108.7" cy="8.7" r="0.45" fill="#c0ccd8" fill-opacity="0.32"/><circle cx="124.5" cy="22.8" r="0.42" fill="#c0ccd8" fill-opacity="0.27"/><circle cx="6.3" cy="45.6" r="0.47" fill="#c0ccd8" fill-opacity="0.36"/><circle cx="90.4" cy="136.7" r="0.50" fill="#c0ccd8" fill-opacity="0.30"/><circle cx="120.1" cy="135.3" r="0.46" fill="#c0ccd8" fill-opacity="0.34"/><circle cx="82.1" cy="135.6" r="0.35" fill="#c0ccd8" fill-opacity="0.39"/><circle cx="109.6" cy="147.3" r="0.35" fill="#c0ccd8" fill-opacity="0.47"/><circle cx="37.6" cy="27.1" r="0.40" fill="#c0ccd8" fill-opacity="0.46"/><circle cx="110.7" cy="164.0" r="0.33" fill="#c0ccd8" fill-opacity="0.41"/><circle cx="83.0" cy="44.8" r="0.48" fill="#c0ccd8" fill-opacity="0.26"/><circle cx="45.1" cy="7.0" r="0.43" fill="#c0ccd8" fill-opacity="0.46"/><circle cx="38.7" cy="159.5" r="0.43" fill="#c0ccd8" fill-opacity="0.28"/><circle cx="162.9" cy="147.6" r="0.36" fill="#c0ccd8" fill-opacity="0.55"/><circle cx="22.5" cy="60.2" r="0.38" fill="#c0ccd8" fill-opacity="0.58"/><circle cx="51.7" cy="66.7" r="0.34" fill="#c0ccd8" fill-opacity="0.53"/></g>
<path d="M856.4 150.8L855.6 169.2M838.4 130.3L837.6 148.2M885.4 150.8L884.6 169.2M867.4 130.3L866.6 148.2M923.9 150.8L923.1 169.2M905.9 130.3L905.1 148.2M934.1 170.5L950.5 170.5M933.7 150.8L932.9 169.2M934.7 130.3L933.9 148.2M935.1 149.5L951.5 149.5M972.3 129.0L988.2 129.0M969.8 170.5L986.2 170.5M969.4 150.8L968.6 169.2M1017.7 130.3L1016.9 148.2" stroke="#4a7a84" stroke-width="1.8" fill="none" stroke-opacity="0.55"/>
<path d="M840.3 129.0L856.2 129.0M857.4 130.3L856.6 148.2M838.8 149.5L855.2 149.5M837.4 150.8L836.6 169.2M837.8 170.5L854.2 170.5M869.3 129.0L885.2 129.0M886.4 130.3L885.6 148.2M867.8 149.5L884.2 149.5M866.4 150.8L865.6 169.2M866.8 170.5L883.2 170.5M907.8 129.0L923.7 129.0M924.9 130.3L924.1 148.2M906.3 149.5L922.7 149.5M904.9 150.8L904.1 169.2M905.3 170.5L921.7 170.5M936.6 129.0L952.5 129.0M953.7 130.3L952.9 148.2M952.7 150.8L951.9 169.2M970.4 130.3L969.6 148.2M970.8 149.5L987.2 149.5M989.4 130.3L988.6 148.2M988.4 150.8L987.6 169.2M1000.6 129.0L1016.5 129.0M998.7 130.3L997.9 148.2M999.1 149.5L1015.5 149.5M997.7 150.8L996.9 169.2M998.1 170.5L1014.5 170.5M1016.7 150.8L1015.9 169.2" stroke="#82e2ea" stroke-width="2" fill="none" stroke-linecap="round"/>
<rect x="896.6" y="141.5" width="4" height="4" fill="#a8f0f4"/><rect x="896" y="155" width="4" height="4" fill="#a8f0f4"/>
<rect x="962" y="141.5" width="4" height="4" fill="#a8f0f4"/><rect x="961.5" y="155" width="4" height="4" fill="#a8f0f4"/>
<g filter="url(#b1)"><path fill="#151c25" d="M834 264 V238 L838 236 L844 239 L846 250 L852 256 L858 250 L866 247 L872 244 L878 243 L884 246 L889 246 L896 245 L903 250 L909 253 L915 250 L920 249 L926 244 L931 242 L937 241 L942 240 L948 237 L954 233 L957 225 L960 219 L966 214 L971 212 L976 206 L981 201 L987 199 L993 197 L1000 196 L1007 193 V264Z"/></g>
</svg>
<div class="t" style="left:827.80px;top:271.00px;font-size:8.28px;color:#9a9a9a;">Название:</div>
<div class="t" style="left:902.50px;top:271.00px;font-size:8.28px;color:#333;">Time lapse</div>
<div class="t" style="left:827.80px;top:288.00px;font-size:7.87px;color:#9a9a9a;">Тип:</div>
<div class="t" style="left:902.50px;top:288.00px;font-size:8.09px;color:#333;">Web</div>
<div class="t" style="left:827.80px;top:312.00px;font-size:9.22px;color:#333;">Свойства</div>
<div class="a" style="left:875px;top:315px;width:124px;height:1px;background:#b0bac4"></div>
<svg class="a" style="left:1005px;top:312px" width="9" height="5" viewBox="0 0 9 5"><path d="M0 0H9L4.5 5Z" fill="#0f72c8"/></svg>
<div class="t" style="left:827.80px;top:336.00px;font-size:9.26px;color:#333;">Цветовая схема</div>
<div class="a" style="left:982px;top:331px;width:32px;height:19px;background:#cdcdcd"></div>
<div class="a" style="left:985px;top:334px;width:16px;height:13px;background:#000"></div>
<svg class="a" style="left:1005px;top:338px" width="5" height="4" viewBox="0 0 5 4"><path d="M0 0H5L2.5 4Z" fill="#222"/></svg>
<div class="a" style="left:273px;top:591px;width:98px;height:17px;background:#0a74cc"></div>
<div class="a" style="left:374px;top:591px;width:99px;height:17px;background:#0a74cc"></div>
<div class="a" style="left:273px;top:611px;width:98px;height:17px;background:#cccccc"></div>
<div class="a" style="left:374px;top:611px;width:99px;height:17px;background:#cccccc"></div>
<svg class="a" style="left:290px;top:595px" width="10" height="10" viewBox="0 0 10 10"><path d="M9.5 2.2 L8 3.7 L6.5 3.5 L6.3 2 L7.8 0.5 Q5.8 -0.2 4.8 1.3 Q4.3 2.3 4.7 3.5 L0.6 7.6 Q0 8.5 0.7 9.3 Q1.5 10 2.4 9.4 L6.5 5.3 Q7.7 5.7 8.7 5.2 Q10.2 4.2 9.5 2.2Z" fill="#fff"/></svg>
<div class="t" style="left:301.90px;top:596.00px;font-size:9.34px;color:#fff;">Мастерская</div>
<svg class="a" style="left:399px;top:596px" width="10" height="9" viewBox="0 0 10 9"><path d="M0 0.5H2L2.6 2H10L8.8 6H3.2L2.7 6.8H9V7.5H1.6L2.5 5.8L1.2 1.2H0Z" fill="#fff"/><circle cx="3.5" cy="8.3" r="0.8" fill="#fff"/><circle cx="8" cy="8.3" r="0.8" fill="#fff"/></svg>
<div class="t" style="left:410.80px;top:596.00px;font-size:9.38px;color:#fff;">Магазин</div>
<svg class="a" style="left:284px;top:614px" width="10" height="10" viewBox="0 0 10 10"><path d="M5 0 L9 4 H6.5 V7 H3.5 V4 H1Z" fill="#222"/><rect x="0" y="7.5" width="10" height="2.5" fill="#222"/></svg>
<div class="t" style="left:296.60px;top:616.00px;font-size:9.32px;color:#333;">Открыть файл</div>
<svg class="a" style="left:389px;top:615px" width="9" height="9" viewBox="0 0 9 9"><circle cx="4.5" cy="4.5" r="4.3" fill="#222"/><path d="M2 2 Q4 1.5 4 3.5 Q3 5 4.5 6 L4 8 Q2 7 1.5 5Z M6 1.5 Q7.5 3 6.5 4 Q5.5 3 6 1.5Z" fill="#cccccc"/></svg>
<div class="t" style="left:400.00px;top:616.00px;font-size:9.19px;color:#333;">Открыть URL</div>
<svg class="a" style="left:648px;top:610px" width="55" height="17" viewBox="0 0 55 17">
<rect x="0.8" y="0.6" width="15.5" height="16" rx="2.8" fill="#0a74cc"/>
<path d="M0.8 9.8 L5.5 11.2 L5.5 14 L0.8 12.5Z" fill="#fff"/><path d="M9.5 7.5 L12 9 L7 13.5 L4.5 12Z" fill="#fff"/>
<circle cx="11.5" cy="5.9" r="4" fill="#fff"/><circle cx="11.5" cy="5.9" r="2.2" fill="none" stroke="#8ab8e0" stroke-width="0.7"/>
<circle cx="5.8" cy="12.6" r="2.6" fill="#fff"/><circle cx="5.8" cy="12.6" r="1.2" fill="none" stroke="#8ab8e0" stroke-width="0.5"/>
<rect x="19.7" y="0.6" width="15.3" height="16" rx="2.8" fill="#0a74cc"/>
<path d="M22.2 12.6 Q26 14 29 11.6 Q26.4 11.4 25.7 9.6 L27 9.4 Q24.8 8.6 24.6 6.4 L25.8 6.9 Q24 5 25.2 3.4 Q27.2 6 30.2 6.2 Q30 3.2 32.6 3.2 Q33.4 3.3 34 3.9 L35.2 3.4 L34.6 4.6 L35.4 4.4 L34.6 5.4 Q34.8 10.5 30.5 12.8 Q26.2 15 22.2 12.6Z" fill="#fff"/>
<rect x="38.1" y="0.6" width="15.8" height="16" rx="2.8" fill="#0a74cc"/>
<path d="M46.6 16.6 V10.6 H44 V8.3 H46.6 V6.4 Q46.6 3.6 49.6 3.6 H52 V5.9 H50.4 Q49.3 5.9 49.3 7 V8.3 H51.8 L51.5 10.6 H49.3 V16.6Z" fill="#fff"/>
</svg>
<div class="a" style="left:878px;top:608px;width:63px;height:17px;background:#0a74cc"></div>
<div class="t" style="left:903.30px;top:613.00px;font-size:8.96px;color:#fff;">OK</div>
<div class="a" style="left:944px;top:608px;width:63px;height:17px;background:#cccccc"></div>
<div class="t" style="left:959.00px;top:613.00px;font-size:9.16px;color:#333;">Отмена</div>
<div class="a" style="left:502px;top:82px;width:184px;height:41px;background:#fffefb;border:1px solid #e6cfa6;border-radius:4px;box-shadow:1px 1px 2px rgba(120,90,40,.25)"></div>
<svg class="a" style="left:495px;top:93px" width="9" height="16" viewBox="0 0 9 16"><path d="M8 0 L0.5 8 L8 16Z" fill="#fffefb" stroke="#e6cfa6" stroke-width="1"/><rect x="7.5" y="1" width="2" height="14" fill="#fffefb"/></svg>
<div class="t" style="left:513.10px;top:93.00px;font-size:9.27px;color:#333;">Нажмите здесь, чтобы скачать</div>
<div class="t" style="left:513.10px;top:106.00px;font-size:9.13px;color:#333;">новые обои!</div>
<div class="a" style="left:480px;top:168px;width:320px;height:383px;background:#f2f2f2;border:1px solid #2f78c8;box-shadow:0 0 5px 2px rgba(90,160,240,.45)"></div>
<div class="t" style="left:615.50px;top:173.00px;font-size:9.29px;color:#444;">Параметры</div>
<div class="a" style="left:732px;top:176px;width:6px;height:2px;background:#111"></div>
<div class="a" style="left:751px;top:173px;width:7px;height:6px;border:1px solid #666;border-top-width:2px;background:#fff"></div>
<div class="a" style="left:764px;top:168px;width:32px;height:14px;background:#c74b4b"></div>
<svg class="a" style="left:776px;top:171px" width="8" height="8" viewBox="0 0 8 8"><path d="M1 1L7 7M7 1L1 7" stroke="#fff" stroke-width="1.5"/></svg>
<div class="a" style="left:493px;top:187px;width:98px;height:18px;background:#0a74cc"></div>
<div class="t" style="left:496.70px;top:192.00px;font-size:9.33px;color:#fff;">Производительность</div>
<div class="t" style="left:596.75px;top:192.00px;font-size:9.19px;color:#555;">Общие</div>
<div class="t" style="left:636.90px;top:192.00px;font-size:9.24px;color:#555;">О приложении</div>
<div class="a" style="left:493px;top:203px;width:295px;height:2px;background:#0f6cbc"></div>
<div class="a" style="left:493px;top:222px;width:294px;height:124px;border:1px solid #d4d4d4"></div>
<div class="a" style="left:497px;top:218px;width:84px;height:8px;background:#f2f2f2"></div>
<div class="t" style="left:500.00px;top:218.00px;font-size:9.33px;color:#333;">Воспроизведение</div>
<div class="t" style="left:500.00px;top:237.00px;font-size:8.36px;color:#a4a4a4;">Другое приложение выбрано:</div>
<div class="t" style="left:500.00px;top:259.00px;font-size:8.35px;color:#a4a4a4;">Другое приложение развёрнуто:</div>
<div class="t" style="left:500.00px;top:276.00px;font-size:8.42px;color:#a4a4a4;">Другое приложение в полный</div>
<div class="t" style="left:500.00px;top:286.00px;font-size:8.30px;color:#a4a4a4;">экран:</div>
<div class="t" style="left:500.00px;top:306.00px;font-size:8.27px;color:#a4a4a4;">Display asleep:</div>
<div class="t" style="left:500.00px;top:327.00px;font-size:8.34px;color:#a4a4a4;">Other application playing audio:</div>
<div class="a" style="left:640px;top:232px;width:140px;height:17px;background:#cccccc"></div>
<div class="t" style="left:654.25px;top:238.00px;font-size:9.25px;color:#333;">Продолжить работу</div>
<svg class="a" style="left:770px;top:239px" width="6" height="4" viewBox="0 0 6 4"><path d="M0 0H6L3 3.5Z" fill="#222"/></svg>
<div class="a" style="left:640px;top:255px;width:140px;height:17px;background:#cccccc"></div>
<div class="t" style="left:654.25px;top:260.00px;font-size:9.08px;color:#333;">Пауза</div>
<svg class="a" style="left:770px;top:262px" width="6" height="4" viewBox="0 0 6 4"><path d="M0 0H6L3 3.5Z" fill="#222"/></svg>
<div class="a" style="left:640px;top:278px;width:140px;height:17px;background:#cccccc"></div>
<div class="t" style="left:654.25px;top:283.00px;font-size:9.08px;color:#333;">Пауза</div>
<svg class="a" style="left:770px;top:285px" width="6" height="4" viewBox="0 0 6 4"><path d="M0 0H6L3 3.5Z" fill="#222"/></svg>
<div class="a" style="left:640px;top:300px;width:140px;height:17px;background:#cccccc"></div>
<div class="t" style="left:654.25px;top:306.00px;font-size:9.20px;color:#333;">Остановить</div>
<svg class="a" style="left:770px;top:307px" width="6" height="4" viewBox="0 0 6 4"><path d="M0 0H6L3 3.5Z" fill="#222"/></svg>
<div class="a" style="left:640px;top:323px;width:140px;height:17px;background:#cccccc"></div>
<div class="t" style="left:654.25px;top:328.00px;font-size:9.25px;color:#333;">Продолжить работу</div>
<svg class="a" style="left:770px;top:330px" width="6" height="4" viewBox="0 0 6 4"><path d="M0 0H6L3 3.5Z" fill="#222"/></svg>
<div class="a" style="left:493px;top:360px;width:294px;height:147px;border:1px solid #d4d4d4"></div>
<div class="a" style="left:497px;top:356px;width:46px;height:8px;background:#f2f2f2"></div>
<div class="t" style="left:500.00px;top:357.00px;font-size:9.29px;color:#333;">Качество</div>
<div class="t" style="left:500.00px;top:375.00px;font-size:8.44px;color:#a4a4a4;">Предустановки:</div>
<div class="t" style="left:500.00px;top:397.00px;font-size:8.38px;color:#a4a4a4;">Анти-алиасинг:</div>
<div class="t" style="left:500.00px;top:421.00px;font-size:8.26px;color:#a4a4a4;">Разрешение:</div>
<div class="t" style="left:500.00px;top:444.00px;font-size:8.00px;color:#a4a4a4;">FPS:</div>
<div class="t" style="left:500.00px;top:465.00px;font-size:8.32px;color:#a4a4a4;">Пост-обработка:</div>
<div class="t" style="left:500.00px;top:488.00px;font-size:8.39px;color:#a4a4a4;">Отражения:</div>
<div class="a" style="left:617px;top:370px;width:163px;height:17px;background:#0a74cc"></div>
<div class="a" style="left:671px;top:370px;width:1px;height:17px;background:#0860a8"></div>
<div class="a" style="left:725px;top:370px;width:1px;height:17px;background:#0860a8"></div>
<div class="t" style="left:629.80px;top:375.00px;font-size:9.15px;color:#fff;">Низкое</div>
<div class="t" style="left:679.80px;top:375.00px;font-size:9.33px;color:#fff;">Среднее</div>
<div class="t" style="left:734.40px;top:375.00px;font-size:9.12px;color:#fff;">Высокое</div>
<div class="a" style="left:640px;top:393px;width:140px;height:17px;background:#cccccc"></div>
<div class="t" style="left:654.25px;top:398.00px;font-size:9.25px;color:#333;">MSAA x4</div>
<svg class="a" style="left:770px;top:400px" width="6" height="4" viewBox="0 0 6 4"><path d="M0 0H6L3 3.5Z" fill="#222"/></svg>
<div class="a" style="left:640px;top:415px;width:140px;height:17px;background:#cccccc"></div>
<div class="t" style="left:654.25px;top:420.00px;font-size:9.21px;color:#333;">Полное</div>
<svg class="a" style="left:770px;top:422px" width="6" height="4" viewBox="0 0 6 4"><path d="M0 0H6L3 3.5Z" fill="#222"/></svg>
<div class="a" style="left:633px;top:445px;width:128px;height:2px;background:#cacaca"></div>
<div class="a" style="left:670px;top:438px;width:5px;height:16px;background:#0f72c8"></div>
<div class="t" style="left:770.40px;top:442.00px;font-size:8.65px;color:#333;">25</div>
<svg class="a" style="left:648px;top:464px" width="12" height="12" viewBox="0 0 12 12"><rect x="0" y="0" width="12" height="12" rx="2" fill="#0f6ec4"/><path d="M2.5 6.2 L5 8.5 L9.5 3.5" stroke="#fff" stroke-width="1.8" fill="none"/></svg>
<svg class="a" style="left:648px;top:487px" width="12" height="12" viewBox="0 0 12 12"><rect x="0" y="0" width="12" height="12" rx="2" fill="#0f6ec4"/><path d="M2.5 6.2 L5 8.5 L9.5 3.5" stroke="#fff" stroke-width="1.8" fill="none"/></svg>
<div class="a" style="left:658px;top:521px;width:63px;height:18px;background:#0a74cc"></div>
<div class="t" style="left:684.30px;top:528.00px;font-size:8.24px;color:#fff;">OK</div>
<div class="a" style="left:724px;top:521px;width:63px;height:18px;background:#cccccc"></div>
<div class="t" style="left:739.30px;top:527.00px;font-size:9.11px;color:#333;">Отмена</div>
<div class="a" style="left:0px;top:700px;width:1280px;height:20px;background:linear-gradient(#1a232c,#0f161d);border-top:1px solid #2c3640"></div>
<svg class="a" style="left:4px;top:696px" width="28" height="25" viewBox="0 0 28 25">
<defs><radialGradient id="orb" cx="0.5" cy="0.35" r="0.6"><stop offset="0" stop-color="#9fd0f0"/><stop offset="0.5" stop-color="#2a78b8"/><stop offset="1" stop-color="#0a2a50"/></radialGradient></defs>
<circle cx="14" cy="14" r="12.5" fill="url(#orb)" stroke="#5a7a90" stroke-width="0.8"/>
<path d="M8 9 Q10 8 13 9 L12.5 13 Q10 12 7.5 13Z" fill="#f05a28"/><path d="M14 9.2 Q17 10 19.5 9 L19 13 Q16.5 14 13.5 13.2Z" fill="#7ac030"/>
<path d="M7.3 14 Q10 13 12.4 14 L12 18 Q9.5 17 7 18Z" fill="#1a9ae0"/><path d="M13.4 14.2 Q16.4 15 18.9 14 L18.4 18 Q16 19 13 18.2Z" fill="#f8c020"/>
<ellipse cx="14" cy="8" rx="8" ry="4.5" fill="#fff" fill-opacity="0.25"/></svg>
<svg class="a" style="left:48px;top:703px" width="13" height="13" viewBox="0 0 13 13"><rect x="2" y="0.5" width="10" height="8" fill="#d8d8d8"/><rect x="3" y="1.5" width="8" height="6" fill="#2a8a3a"/><rect x="0" y="4" width="3" height="7" fill="#b8b8b8"/><rect x="5" y="9" width="4" height="3" fill="#c8c8c8"/></svg>
<svg class="a" style="left:79px;top:704px" width="12" height="12" viewBox="0 0 12 12"><circle cx="6" cy="6" r="5.6" fill="#db4437"/><path d="M6 6 L11.6 6 A5.6 5.6 0 0 1 3.2 10.9Z" fill="#f4c20d"/><path d="M6 6 L3.2 10.9 A5.6 5.6 0 0 1 1.2 3.2Z" fill="#0f9d58"/><circle cx="6" cy="6" r="2.6" fill="#fff"/><circle cx="6" cy="6" r="2" fill="#4285f4"/></svg>
<svg class="a" style="left:109px;top:704px" width="12" height="12" viewBox="0 0 12 12"><circle cx="6" cy="6" r="5.5" fill="#d8202a"/><ellipse cx="6" cy="6" rx="2" ry="3.8" fill="#1a0508"/></svg>
<svg class="a" style="left:140px;top:704px" width="12" height="12" viewBox="0 0 12 12"><circle cx="6" cy="6" r="5.5" fill="#fff"/><path d="M6 1.5 L10 9.5 H8 L6 5.5 L4 9.5 H2Z" fill="#111"/><rect x="2" y="6.5" width="8" height="1.2" fill="#fff"/></svg>
<svg class="a" style="left:170px;top:704px" width="12" height="12" viewBox="0 0 12 12"><circle cx="6" cy="6" r="5.5" fill="#4a8ae0"/><circle cx="4.6" cy="6" r="2" fill="none" stroke="#fff" stroke-width="1.2"/><circle cx="7.6" cy="6" r="2" fill="none" stroke="#f0c020" stroke-width="1.2"/></svg>
<svg class="a" style="left:201px;top:704px" width="12" height="12" viewBox="0 0 12 12"><rect x="0.5" y="0.5" width="11" height="11" rx="1.5" fill="#1a7ae0"/><path d="M3 8.5 V4.5 H9 V8.5 M6 4.5 V7.5" stroke="#fff" stroke-width="1.3" fill="none"/></svg>
<div class="a" style="left:224px;top:701px;width:28px;height:19px;background:linear-gradient(#5e646c,#3c4249 50%,#2c3238);border:1px solid #7a848e;border-radius:2px;box-shadow:inset 0 1px 0 rgba(255,255,255,.2)"></div>
<div class="a" style="left:255px;top:701px;width:23px;height:19px;background:linear-gradient(#5e646c,#3c4249 50%,#2c3238);border:1px solid #7a848e;border-radius:2px;box-shadow:inset 0 1px 0 rgba(255,255,255,.2)"></div>
<div class="a" style="left:285px;top:701px;width:28px;height:19px;background:linear-gradient(#5e646c,#3c4249 50%,#2c3238);border:1px solid #7a848e;border-radius:2px;box-shadow:inset 0 1px 0 rgba(255,255,255,.2)"></div>
<div class="a" style="left:316px;top:701px;width:26px;height:19px;background:linear-gradient(#9aa0a8,#6a7078 50%,#50565e);border:1px solid #7a848e;border-radius:2px;box-shadow:inset 0 1px 0 rgba(255,255,255,.2)"></div>
<div class="a" style="left:279px;top:702px;width:2px;height:18px;background:#3a424a"></div>
<div class="a" style="left:343px;top:702px;width:2px;height:18px;background:#3a424a"></div>
<svg class="a" style="left:232px;top:703px" width="13" height="13" viewBox="0 0 13 13"><circle cx="6.5" cy="6.5" r="6" fill="#6ab83a"/><path d="M4 3.5 V7.5 Q4 9.5 6.5 9.5 Q9 9.5 9 7.5 V3.5" stroke="#fff" stroke-width="1.8" fill="none"/></svg>
<svg class="a" style="left:260px;top:704px" width="13" height="12" viewBox="0 0 13 12"><path d="M0.5 1.5 H5 L6 2.5 H12.5 V11.5 H0.5Z" fill="#e8c860"/><rect x="0.5" y="4" width="12" height="7.5" fill="#f6dc88"/><rect x="3" y="7" width="7" height="3" fill="#3a9ad0"/></svg>
<svg class="a" style="left:292px;top:703px" width="14" height="13" viewBox="0 0 14 13"><rect x="0.5" y="0.5" width="13" height="12" fill="#f0f0e0"/><path d="M2 8 L5 5 L7 7 L10 3 L12 6" stroke="#a03020" stroke-width="1.2" fill="none"/><path d="M2 10 L6 8 L9 9 L12 8" stroke="#3a8a30" stroke-width="1" fill="none"/></svg>
<svg class="a" style="left:322px;top:704px" width="14" height="11" viewBox="0 0 14 11"><rect x="0.5" y="0.5" width="13" height="10" fill="#2a7ad0"/><rect x="3.5" y="3" width="7" height="5" fill="#fff"/><rect x="5" y="4.5" width="4" height="2" fill="#2a7ad0"/></svg>
<svg class="a" style="left:962.8px;top:704px" width="12" height="12" viewBox="0 0 12 12"><rect x="1" y="1" width="10" height="10" fill="none" stroke="#ddd" stroke-width="1"/><path d="M1 4.3H11M1 7.6H11M4.3 1V11M7.6 1V11" stroke="#ddd"/></svg>
<svg class="a" style="left:978.6px;top:704px" width="12" height="12" viewBox="0 0 12 12"><rect x="1" y="1" width="10" height="10" fill="#c83a3a"/><path d="M2 2 L10 10" stroke="#fff" stroke-width="1.5"/></svg>
<svg class="a" style="left:994.9px;top:704px" width="12" height="12" viewBox="0 0 12 12"><ellipse cx="6" cy="6" rx="4" ry="5.5" fill="#1a6ad0"/><path d="M4 3.5 L8 7.5 L6 9.5 V2.5 L8 4.5 L4 8.5" stroke="#fff" stroke-width="0.9" fill="none"/></svg>
<svg class="a" style="left:1011.2px;top:704px" width="12" height="12" viewBox="0 0 12 12"><circle cx="6" cy="6" r="5.5" fill="#5aa83a"/><path d="M3.8 3 V6.5 Q3.8 8.5 6 8.5 Q8.2 8.5 8.2 6.5 V3" stroke="#fff" stroke-width="1.5" fill="none"/></svg>
<svg class="a" style="left:1027.0px;top:704px" width="12" height="12" viewBox="0 0 12 12"><circle cx="6" cy="7" r="4.5" fill="#3a8a3a"/><path d="M1 5 Q6 0 11 5 L9 6 Q6 3 3 6Z" fill="#f0a020"/></svg>
<svg class="a" style="left:1043.0px;top:704px" width="12" height="12" viewBox="0 0 12 12"><rect x="0.5" y="0.5" width="11" height="11" rx="1.5" fill="#1a7ae0"/><path d="M3 8.5 V4.5 H9 V8.5 M6 4.5 V7.5" stroke="#fff" stroke-width="1.2" fill="none"/></svg>
<svg class="a" style="left:1058.7px;top:704px" width="12" height="12" viewBox="0 0 12 12"><path d="M6 1 L11 3 Q11 9 6 11 Q1 9 1 3Z" fill="#e8e8e8"/><circle cx="8.5" cy="8.5" r="3" fill="#2a8ae0"/></svg>
<svg class="a" style="left:1075.0px;top:704px" width="12" height="12" viewBox="0 0 12 12"><rect x="1" y="1" width="10" height="10" fill="#d03040"/><rect x="3" y="3" width="6" height="6" fill="#fff"/><rect x="4" y="4" width="4" height="4" fill="#3060c0"/></svg>
<svg class="a" style="left:1090.4px;top:704px" width="12" height="12" viewBox="0 0 12 12"><rect x="3" y="1" width="5" height="9" fill="#b0b0b0"/><circle cx="8.5" cy="8.5" r="3" fill="#40b040"/></svg>
<svg class="a" style="left:1107.0px;top:704px" width="12" height="12" viewBox="0 0 12 12"><path d="M2 1 V11" stroke="#ddd" stroke-width="1.2"/><path d="M2.5 1.5 H8 V6 H2.5Z" fill="#eee"/><circle cx="8.5" cy="8.5" r="3" fill="#e03030"/></svg>
<svg class="a" style="left:1123.0px;top:704px" width="12" height="12" viewBox="0 0 12 12"><rect x="1" y="2" width="9" height="8" fill="#ddd"/><rect x="3" y="4" width="6" height="5" fill="#c02020"/></svg>
<svg class="a" style="left:1138.8px;top:704px" width="12" height="12" viewBox="0 0 12 12"><path d="M1 4.5 H3.5 L6.5 1.5 V10.5 L3.5 7.5 H1Z" fill="#ddd"/><path d="M8 3.5 Q9.5 6 8 8.5 M9.5 2.5 Q11.5 6 9.5 9.5" stroke="#ddd" stroke-width="0.9" fill="none"/></svg>
<div class="t" style="left:1167.50px;top:702.00px;font-size:8.82px;color:#c8ccd0;font-style:italic;">СР, 29</div>
<div class="t" style="left:1172.40px;top:712.00px;font-size:7.23px;color:#c8ccd0;font-style:italic;">НОЯ</div>
<div class="a" style="left:1202px;top:701px;width:64px;height:19px;background:linear-gradient(#ece8c0,#d4cfa0 60%,#c4bf90);border-radius:3px;border:1px solid #8a8870"></div>
<svg class="a" style="left:1208px;top:703px" width="52" height="15" viewBox="0 0 52 15">
<path d="M1.5 1.5 H9.5 L9 7 H2 L1.5 13 H9" stroke="#1a1a10" stroke-width="1.8" fill="none" transform="skewX(-8)"/>
<path d="M13.5 1.5 H21.5 L21 7 H14 L13.5 13 H21" stroke="#1a1a10" stroke-width="1.8" fill="none" transform="skewX(-8)"/>
<rect x="24.5" y="4" width="1.8" height="1.8" fill="#1a1a10"/><rect x="24" y="9.5" width="1.8" height="1.8" fill="#1a1a10"/>
<path d="M38 1.5 H30 L29.5 7 H37 L36.5 13 H29" stroke="#1a1a10" stroke-width="1.8" fill="none" transform="skewX(-8)"/>
<path d="M50 1.5 H42 L41 13 H49 L49.5 7 H41.5" stroke="#1a1a10" stroke-width="1.8" fill="none" transform="skewX(-8)"/>
</svg>
<div class="a" style="left:1271px;top:701px;width:9px;height:19px;background:linear-gradient(90deg,#3a4048,#1a2028);border:1px solid #5a646e;border-radius:2px"></div>
</body></html>
